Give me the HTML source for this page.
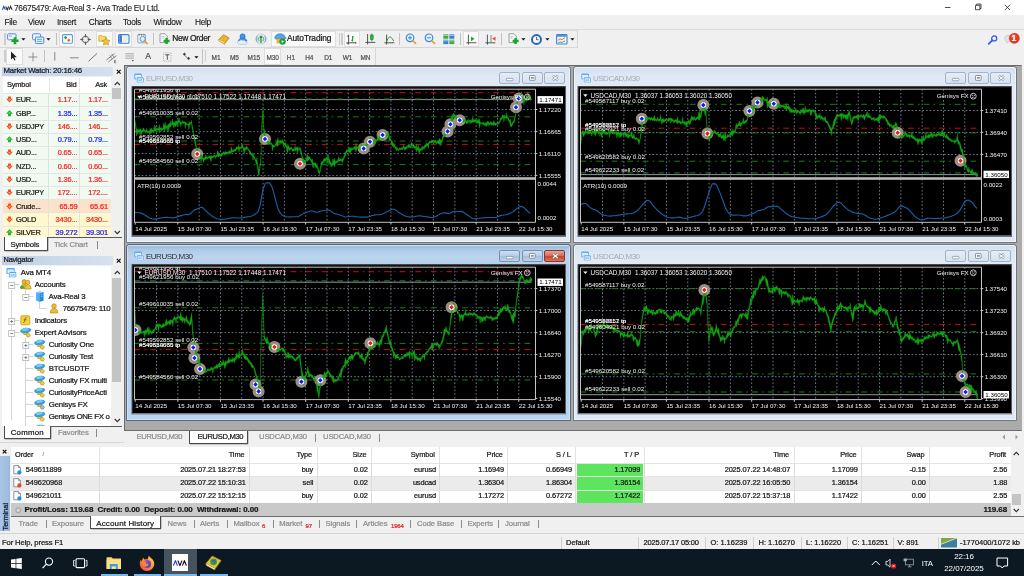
<!DOCTYPE html>
<html lang="en"><head><meta charset="utf-8"><title>76675479: Ava-Real 3 - Ava Trade EU Ltd.</title>
<style>*{box-sizing:border-box;margin:0;padding:0}
html,body{width:1024px;height:576px;overflow:hidden;background:#f0f0f0}
body{position:relative;will-change:transform;font-family:"Liberation Sans","DejaVu Sans",sans-serif;font-size:7.4px;color:#161616;line-height:1}
.a{position:absolute}
.t{position:absolute;white-space:nowrap;line-height:9px;height:9px;letter-spacing:-.15px;-webkit-text-stroke:.22px currentColor}
.g{color:#8c8c8c}
svg{position:absolute;overflow:visible}
#title{left:0;top:0;width:1024px;height:15px;background:#fff}
#menu{left:0;top:15px;width:1024px;height:14px;background:#f0f0f0}
#menu .t{font-size:8.4px;letter-spacing:-.32px;-webkit-text-stroke:.1px}
#tb1{left:0;top:30px;width:1024px;height:18px;background:#f0f0f0}
#tb2{left:0;top:47.5px;width:1024px;height:18px;background:#f0f0f0}
#mw{left:0;top:65px;width:124px;height:190px;background:#f0f0f0}
#nav{left:0;top:254px;width:125.5px;height:189px;background:#f0f0f0;border-right:1px solid #b9b9b9;border-bottom:1px solid #d5d5d5}
.ptitle{background:linear-gradient(90deg,#bfd0e6,#d5e1f0)}
.tabsel{background:#fff;border:1px solid #4a4a4a;border-top:0;border-radius:0 0 1px 1px;box-shadow:.5px .5px 0 #9a9a9a}
#mdi{left:124px;top:65px;width:898px;height:365.5px;background:#ababab;border:1px solid #6b6b6b;border-right-color:#ababab}
.win{position:absolute;border:1px solid #70777f;border-radius:3px 3px 0 0;background:linear-gradient(#d2dfee 0,#dde8f4 8px,#e2ebf6 21px,#dfe9f5 100%);box-shadow:inset 0 0 0 1px #eef4fb}
.win.act{background:linear-gradient(#98b6d6 0,#aecbe8 5px,#bdd5ee 12px,#b3cdea 21px,#b9d4f0 100%);border-color:#56677a;box-shadow:inset 0 0 0 1px #cfe2f5}
.win .cap{position:absolute;left:19px;top:6.9px;font-size:8px;letter-spacing:-.5px;color:#a6aab0;line-height:10px;white-space:nowrap}
.win.act .cap{color:#2e2e2e}
.wb{position:absolute;top:4.7px;width:21px;height:12px;border:1px solid #a3b3c8;border-radius:2px;background:linear-gradient(#e4edf7,#d6e2f0)}
.act .wb{border-color:#7b90aa;background:linear-gradient(#cfdff0 0,#b6cee8 48%,#a2bfde 52%,#bcd3ea 100%)}
.act .wb.cl{border-color:#87392c;background:linear-gradient(#e7a597 0,#d46d59 48%,#c4432b 52%,#d8735b 100%)}
#ctabs{left:124px;top:431px;width:900px;height:16px;background:#f0f0f0}
#term{left:0;top:446px;width:1024px;height:87px;background:#f0f0f0}
#status{left:0;top:533px;width:1024px;height:16px;background:#f0f0f0;border-top:1px solid #d4d4d4}
#task{left:0;top:549px;width:1024px;height:27px;background:#0c1922}
#task .t{-webkit-text-stroke:0}
</style></head>
<body>
<div class="a" id="title">
<svg style="left:2px;top:4.5px" width="11" height="6" viewBox="0 0 11 6" ><path d="M.3 4.800L1.800 1.400L3.300 4.800" fill="none" stroke="#3a48d8" stroke-width="1.150"/><path d="M3.700 1.400L5.200 4.800L6.700 1.400M7.100 4.800L8.600 1.400L10.100 4.800" fill="none" stroke="#33333c" stroke-width="1.150"/></svg>
<div class="t " style="left:14px;top:4.1px;font-size:8.4px;letter-spacing:-.31px;-webkit-text-stroke:.1px;color:#1c1c1c">76675479: Ava-Real 3 - Ava Trade EU Ltd.</div>
<svg style="left:930px;top:0" width="94" height="15"><path d="M15 7.5h5.5" stroke="#222" stroke-width=".8"/><path d="M45.5 5.3h4.4v4.4h-4.4z M46.6 5.2v-1.1h4.4v4.4h-1.1" fill="none" stroke="#222" stroke-width=".8"/><path d="M74.8 4.8l5.2 5.2m0 -5.2l-5.2 5.2" stroke="#222" stroke-width=".8"/></svg>
</div>
<div class="a" id="menu">
<div class="t " style="left:4.5px;top:3.1px;">File</div>
<div class="t " style="left:28px;top:3.1px;">View</div>
<div class="t " style="left:57px;top:3.1px;">Insert</div>
<div class="t " style="left:88.7px;top:3.1px;">Charts</div>
<div class="t " style="left:123px;top:3.1px;">Tools</div>
<div class="t " style="left:153.5px;top:3.1px;">Window</div>
<div class="t " style="left:195px;top:3.1px;">Help</div>
</div>
<div class="a" style="left:0;top:28.5px;width:1024px;height:1px;background:#dcdcdc"></div>
<div class="a" id="tb1"><div class="a" style="left:4px;top:3px;width:1.500px;height:12px;background:#cdcdcd"></div><svg style="left:7px;top:3px" width="13" height="12" viewBox="0 0 13 12" ><rect x=".6" y=".8" width="8.400" height="6" rx="1" fill="#eef5fd" stroke="#4d8fd6" stroke-width="1"/><path d="M2 3h3" stroke="#4d8fd6" stroke-width=".8"/><path d="M8 4.200v7M4.500 7.700h7" stroke="#16a820" stroke-width="2.600"/></svg><svg style="left:21.3px;top:8px" width="5" height="3" viewBox="0 0 5 3"><path d="M.3 .3h4.200l-2.100 2.300z" fill="#111"/></svg><svg style="left:32px;top:3px" width="13" height="12" viewBox="0 0 13 12" ><rect x=".6" y=".8" width="8" height="6" rx="1" fill="#eef5fd" stroke="#4d8fd6" stroke-width="1"/><rect x="3.400" y="4" width="8.400" height="6.600" rx="1" fill="#dcebfb" stroke="#4d8fd6" stroke-width="1"/><path d="M5 6.400h5M5 8.400h5" stroke="#4d8fd6" stroke-width=".7"/></svg><svg style="left:46.3px;top:8px" width="5" height="3" viewBox="0 0 5 3"><path d="M.3 .3h4.200l-2.100 2.300z" fill="#111"/></svg><div class="a" style="left:55.5px;top:3px;width:1px;height:12px;background:#c2c2c2"></div><div class="a" style="left:58.8px;top:1px;width:16.5px;height:16px;background:#fafafa;border:1px solid #dedede"></div><svg style="left:61.5px;top:4px" width="11" height="10" viewBox="0 0 11 10" ><rect x=".6" y=".6" width="9.800" height="8.600" rx="1" fill="#fff" stroke="#5b9be0" stroke-width="1.100"/><path d="M3.600 1.800l1.800 1.800l-1.800 1.800l-1.800-1.800z" fill="#22a83a"/><path d="M6.800 4.400l1.800 1.800l-1.800 1.800l-1.800-1.800z" fill="#f0622a"/></svg><svg style="left:80px;top:3.5px" width="11" height="11" viewBox="0 0 11 11" ><circle cx="5.500" cy="5.500" r="3.200" fill="none" stroke="#555" stroke-width=".9"/><path d="M5.500 .4v3M5.500 7.600v3M.4 5.500h3M7.600 5.500h3" stroke="#555" stroke-width=".9"/><path d="M5.500 .2l1.200 1.400h-2.400zM5.500 10.800l1.200-1.400h-2.400zM.2 5.500l1.400-1.200v2.400zM10.800 5.500l-1.400-1.200v2.400z" fill="#555"/></svg><div class="a" style="left:96.2px;top:1px;width:16.8px;height:16px;background:#fafafa;border:1px solid #dedede"></div><svg style="left:98px;top:3.5px" width="13" height="12" viewBox="0 0 13 12" ><path d="M.8 1.600h3l.8 1h3.400v4.600h-7.200z" fill="#f7dc6a" stroke="#c9a227" stroke-width=".7"/><path d="M8 3.600l1.300 2.500l2.700 .4l-2 1.900l.5 2.700l-2.500-1.300l-2.500 1.300l.5-2.700l-2-1.900l2.700-.4z" fill="#f2c230" stroke="#b8860b" stroke-width=".6"/></svg><div class="a" style="left:115.3px;top:1px;width:16.5px;height:16px;background:#fafafa;border:1px solid #dedede"></div><svg style="left:117.5px;top:4px" width="12" height="10" viewBox="0 0 12 10" ><rect x=".6" y=".6" width="10.400" height="8.600" rx="1" fill="#fff" stroke="#3b7fd0" stroke-width="1.100"/><rect x="1.200" y="1.200" width="2.800" height="7.400" fill="#3b7fd0"/><path d="M5 3h5M5 5h5M5 7h4" stroke="#b9cde6" stroke-width=".7"/></svg><svg style="left:136.5px;top:3px" width="12" height="12" viewBox="0 0 12 12" ><rect x=".8" y="1.400" width="7.600" height="8.400" rx=".8" fill="#f2f6fa" stroke="#7d8fa3" stroke-width=".8"/><path d="M2.200 1v1.600M4.600 1v1.600M7 1v1.600" stroke="#557" stroke-width=".8"/><circle cx="5.600" cy="6" r="2.600" fill="#dfeefc" stroke="#5b8fc8" stroke-width=".9"/><path d="M7.600 8l3 3" stroke="#d9a028" stroke-width="1.600"/></svg><div class="a" style="left:152.8px;top:3px;width:1px;height:12px;background:#c2c2c2"></div><svg style="left:159px;top:3px" width="12" height="12" viewBox="0 0 12 12" ><path d="M1 .8h5l2.200 2.200v6.600h-7.200z" fill="#fbfbfb" stroke="#7d8792" stroke-width=".8"/><path d="M2.400 3.600h3M2.400 5.200h2" stroke="#9aa" stroke-width=".7"/><path d="M7.600 5v6M4.600 8h6" stroke="#17a81f" stroke-width="2.400"/></svg><div class="t" style="left:172.2px;top:4.200px;font-size:8.400px;letter-spacing:-.3px">New Order</div><svg style="left:217.5px;top:4px" width="12" height="10" viewBox="0 0 12 10" ><path d="M.6 5.600l5-4.800l5.600 3.200l-4.400 5.400z" fill="#e9b530" stroke="#a87c0c" stroke-width=".7"/><path d="M.6 5.600l.4 1.600l5.800 3.200v-1.400" fill="#fff3c4" stroke="#a87c0c" stroke-width=".6"/></svg><svg style="left:236.5px;top:3px" width="12" height="12" viewBox="0 0 12 12" ><circle cx="5.600" cy="3.400" r="2.600" fill="#3f97e8" stroke="#1f6cbc" stroke-width=".6"/><path d="M1.200 8.200c0-2 2-3 4.400-3s4.400 1 4.400 3z" fill="#3f97e8" stroke="#1f6cbc" stroke-width=".6"/><path d="M.6 9.600c0-1.200 1-2 2.200-1.800c.6-1 2.200-1.200 3-.2c1-.6 2.400 0 2.400 1c1.200 0 1.800 .6 1.800 1.400s-.6 1.400-1.600 1.400h-6c-1 0-1.800-.8-1.800-1.800z" fill="#e8eef6" stroke="#9fb0c6" stroke-width=".5"/></svg><svg style="left:254.5px;top:3px" width="12" height="12" viewBox="0 0 12 12" ><circle cx="6" cy="6" r="5.200" fill="#dfe8ee" stroke="#a9b8c4" stroke-width=".5"/><path d="M2.600 2.600a4.800 4.800 0 0 0 0 6.800M9.400 2.600a4.800 4.800 0 0 1 0 6.800" fill="none" stroke="#6fa8d8" stroke-width="1"/><path d="M4.200 3.800a3 3 0 0 0 0 4.400M7.800 3.800a3 3 0 0 1 0 4.400" fill="none" stroke="#58b058" stroke-width="1"/><rect x="5.400" y="4" width="1.200" height="6" fill="#2a8a3a"/><circle cx="6" cy="4" r="1.200" fill="#2a8a3a"/></svg><div class="a" style="left:271.3px;top:1px;width:65px;height:16px;background:#fafafa;border:1px solid #dedede"></div><svg style="left:273.5px;top:3px" width="13" height="12" viewBox="0 0 13 12" ><path d="M1 4.400c0-2 2-3.600 5-3.600s5 1.400 5 3.400l1.400 .8c-1.400 1.200-3.800 1.600-6.400 1.600s-4.600-.4-5.600-1.600z" fill="#5ba4e6" stroke="#2f74bd" stroke-width=".6"/><rect x="2.600" y="6" width="6" height="4.400" fill="#e5b628"/><circle cx="8.600" cy="8.600" r="2.900" fill="#1ea83a" stroke="#0f7a22" stroke-width=".5"/><path d="M7.700 7.200v2.800l2.400-1.400z" fill="#fff"/></svg><div class="t" style="left:287px;top:4.200px;font-size:8.400px;letter-spacing:-.08px">AutoTrading</div><div class="a" style="left:338.6px;top:3px;width:1.500px;height:12px;background:#cdcdcd"></div><div class="a" style="left:341px;top:3px;width:1.500px;height:12px;background:#cdcdcd"></div><div class="a" style="left:343.6px;top:1px;width:16px;height:16px;background:#fafafa;border:1px solid #dedede"></div><svg style="left:346px;top:3.5px" width="11" height="11" viewBox="0 0 11 11" ><path d="M2.600 .6v10M.4 8.800h10" stroke="#444" stroke-width=".9"/><path d="M.8 2.200h1.800M.800 9.600h1M9.600 8v1.600" stroke="#444" stroke-width=".8"/><path d="M6.600 2v5.600M5.400 6.400h1.200M6.600 3h1.200" stroke="#1a9a2a" stroke-width="1.100"/></svg><svg style="left:364.5px;top:3px" width="11" height="12" viewBox="0 0 11 12" ><path d="M2.600 1v10.400M.4 9.400h10" stroke="#444" stroke-width=".9"/><path d="M6.800 .4v8" stroke="#1a7a2a" stroke-width=".8"/><rect x="5.400" y="2" width="2.800" height="4.600" fill="#27b53a" stroke="#157a22" stroke-width=".5"/></svg><svg style="left:383.5px;top:3.5px" width="11" height="11" viewBox="0 0 11 11" ><path d="M2.600 .6v10M.4 8.800h10" stroke="#444" stroke-width=".9"/><path d="M2.600 7.600c1.400-4 2.600-5 3.800-4.600s2 2.200 3.400 4" fill="none" stroke="#1a9a2a" stroke-width="1"/></svg><div class="a" style="left:399.3px;top:3px;width:1px;height:12px;background:#c2c2c2"></div><svg style="left:404.5px;top:3px" width="12" height="12" viewBox="0 0 12 12" ><circle cx="5" cy="4.800" r="3.800" fill="#e4f0fc" stroke="#3f86d6" stroke-width="1.200"/><path d="M3 4.800h4M5 2.800v4" stroke="#3f86d6" stroke-width="1"/><path d="M7.800 7.600l3.200 3.200" stroke="#e0a830" stroke-width="1.700"/></svg><svg style="left:423.5px;top:3px" width="12" height="12" viewBox="0 0 12 12" ><circle cx="5" cy="4.800" r="3.800" fill="#e4f0fc" stroke="#3f86d6" stroke-width="1.200"/><path d="M3 4.800h4" stroke="#3f86d6" stroke-width="1"/><path d="M7.800 7.600l3.200 3.200" stroke="#e0a830" stroke-width="1.700"/></svg><svg style="left:442.5px;top:3.5px" width="12" height="11" viewBox="0 0 12 11" ><rect x=".3" y=".3" width="5" height="4.400" fill="#3cae3c"/><rect x="6.300" y=".3" width="5" height="4.400" fill="#3a7fd8"/><rect x=".3" y="5.700" width="5" height="4.400" fill="#3a7fd8"/><rect x="6.300" y="5.700" width="5" height="4.400" fill="#3cae3c"/><path d="M.3 1.400h5M6.300 1.400h5M.3 6.800h5M6.300 6.800h5" stroke="#fff" stroke-width=".7" opacity=".8"/></svg><div class="a" style="left:459.6px;top:3px;width:1px;height:12px;background:#c2c2c2"></div><div class="a" style="left:463px;top:1px;width:16px;height:16px;background:#fafafa;border:1px solid #dedede"></div><svg style="left:466px;top:3.5px" width="11" height="11" viewBox="0 0 11 11" ><path d="M2.400 .6v10M.4 8.800h10" stroke="#444" stroke-width=".9"/><path d="M5 2.400v4.800l3.600-2.400z" fill="#1fa83a"/></svg><svg style="left:484.5px;top:3.5px" width="12" height="11" viewBox="0 0 12 11" ><path d="M2.400 .6v10M.4 8.800h10" stroke="#444" stroke-width=".9"/><path d="M6 1v7" stroke="#666" stroke-width=".8"/><path d="M10.500 2.600v4.200l-3.400-2.100z" fill="#e0522a"/></svg><div class="a" style="left:501px;top:3px;width:1px;height:12px;background:#c2c2c2"></div><svg style="left:507.5px;top:3px" width="12" height="12" viewBox="0 0 12 12" ><path d="M1 .8h5l2.200 2.200v6.600h-7.200z" fill="#fbfbfb" stroke="#7d8792" stroke-width=".8"/><path d="M2.400 3.600h3M2.400 5.200h2" stroke="#9aa" stroke-width=".7"/><path d="M7.600 5v6M4.600 8h6" stroke="#17a81f" stroke-width="2.400"/></svg><svg style="left:520.5px;top:8px" width="5" height="3" viewBox="0 0 5 3"><path d="M.3 .3h4.200l-2.100 2.300z" fill="#111"/></svg><svg style="left:531px;top:3.5px" width="12" height="11" viewBox="0 0 12 11" ><circle cx="5.500" cy="5.500" r="4.500" fill="#f4f8fc" stroke="#1f66c2" stroke-width="1.900"/><path d="M5.500 3v2.700h2" stroke="#345" stroke-width=".8" fill="none"/></svg><svg style="left:545.4px;top:8px" width="5" height="3" viewBox="0 0 5 3"><path d="M.3 .3h4.200l-2.100 2.300z" fill="#111"/></svg><svg style="left:555.5px;top:3.5px" width="12" height="11" viewBox="0 0 12 11" ><rect x=".6" y=".6" width="10.400" height="9.400" rx=".8" fill="#eef5fd" stroke="#3f86d6" stroke-width="1.100"/><rect x="1.100" y="1.100" width="9.400" height="1.600" fill="#3f86d6"/><path d="M2 6.400l2-1.600l2 .8l3-2" stroke="#d9502a" stroke-width=".8" fill="none"/><path d="M2 8.800l2-.8l2 .4l3-1.400" stroke="#2a9a3a" stroke-width=".8" fill="none"/></svg><svg style="left:570px;top:8px" width="5" height="3" viewBox="0 0 5 3"><path d="M.3 .3h4.200l-2.100 2.300z" fill="#111"/></svg><div class="a" style="left:0;top:0;width:578px;height:17.500px;border-right:1px solid #d6d6d6;border-bottom:1px solid #d6d6d6;border-top:1px solid #dadada"></div><svg style="left:987px;top:4.5px" width="12" height="10" viewBox="0 0 12 10" ><circle cx="7.200" cy="3.400" r="2.500" fill="#eaf2ff" stroke="#2a62d8" stroke-width="1.300"/><path d="M5.300 5.400l-3.600 3.400" stroke="#2a62d8" stroke-width="1.700" stroke-linecap="round"/></svg><svg style="left:1003px;top:2px" width="18" height="14" viewBox="0 0 18 14" ><path d="M1.600 6.400c0-2 1.600-3.200 3.800-3.200s3.800 1.200 3.800 3.200s-1.600 3.200-3.800 3.200l-1.600 1.600v-1.900c-1.300-.5-2.200-1.500-2.200-2.900z" fill="#e2e2e2" stroke="#bdbdbd" stroke-width=".6"/><circle cx="11.300" cy="6.300" r="5.400" fill="#e23a22"/><circle cx="10.600" cy="4.800" r="3" fill="#ef6a50" opacity=".5"/></svg><div class="t" style="left:1011.4px;top:3.600px;font-size:8.500px;color:#fff;font-weight:bold">1</div></div>
<div class="a" id="tb2"><div class="a" style="left:4px;top:2.5px;width:1.500px;height:12px;background:#cdcdcd"></div><div class="a" style="left:5.6px;top:0.5px;width:17px;height:16.5px;background:#fafafa;border:1px solid #dedede"></div><svg style="left:10px;top:3.5px" width="7" height="10" viewBox="0 0 7 10" ><path d="M1 .6v8l2-1.800l1.300 2.800l1.200-.6l-1.300-2.700h2.600z" fill="#222"/></svg><svg style="left:27.5px;top:4.5px" width="10" height="10" viewBox="0 0 10 10" ><path d="M5 .4v9M.4 5h9" stroke="#777" stroke-width=".8"/></svg><div class="a" style="left:43.5px;top:2.5px;width:1px;height:12px;background:#c2c2c2"></div><svg style="left:54px;top:4.5px" width="2" height="9" viewBox="0 0 2 9" ><path d="M.8 0v8.600" stroke="#777" stroke-width=".9"/></svg><svg style="left:69.5px;top:9px" width="9" height="2" viewBox="0 0 9 2" ><path d="M0 .8h8.600" stroke="#777" stroke-width=".9"/></svg><svg style="left:88px;top:5px" width="10" height="9" viewBox="0 0 10 9" ><path d="M.4 8.400l8.600-8" stroke="#666" stroke-width=".9"/></svg><svg style="left:105.5px;top:4px" width="11" height="11" viewBox="0 0 11 11" ><path d="M.4 8l8-6.400M2.400 10l8-6.400" stroke="#666" stroke-width=".8"/><path d="M3.600 3.200l2.800 4M5.600 1.800l2.800 4" stroke="#666" stroke-width=".6"/><path d="M8.400 8.400h1.800M8.400 8.400v2.400M8.400 9.600h1.400M8.400 10.800h1.800" stroke="#333" stroke-width=".5" fill="none"/></svg><svg style="left:125px;top:5px" width="10" height="10" viewBox="0 0 10 10" ><path d="M.4 .8h8.600M.4 3h8.600M.4 5.200h8.600" stroke="#888" stroke-width=".7"/><path d="M6.600 7h2.400l-1.200 1.600z" fill="#555"/></svg><div class="t" style="left:145.2px;top:4.600px;font-size:8.600px;color:#4a4a4a">A</div><svg style="left:163px;top:4px" width="9" height="10" viewBox="0 0 9 10" ><rect x=".5" y=".8" width="7.600" height="8.400" fill="none" stroke="#999" stroke-width=".7" stroke-dasharray="1 1"/><path d="M2.200 2.800h4.200M4.300 2.800v5" stroke="#555" stroke-width="1"/></svg><svg style="left:181.5px;top:4.5px" width="10" height="9" viewBox="0 0 10 9" ><path d="M2.400 .6l1.600 1.600l-1.600 1.600l-1.600-1.600zM6.600 4.800l1.600 1.600l-1.600 1.600l-1.600-1.600z" fill="#444"/><path d="M2.600 3.200l3.200 3.200" stroke="#444" stroke-width=".7"/></svg><svg style="left:193.5px;top:8px" width="5" height="3" viewBox="0 0 5 3"><path d="M.3 .3h4.200l-2.100 2.300z" fill="#111"/></svg><div class="a" style="left:201.7px;top:1px;width:1px;height:15px;background:#c2c2c2"></div><div class="a" style="left:204.8px;top:2.5px;width:1.500px;height:12px;background:#cdcdcd"></div><div class="t" style="left:211.6px;top:5px;font-size:6.500px;color:#555;letter-spacing:-.1px">M1</div><div class="t" style="left:230px;top:5px;font-size:6.500px;color:#555;letter-spacing:-.1px">M5</div><div class="t" style="left:247.6px;top:5px;font-size:6.500px;color:#555;letter-spacing:-.1px">M15</div><div class="a" style="left:264px;top:0.5px;width:16.5px;height:16.5px;background:#fafafa;border:1px solid #dedede"></div><div class="t" style="left:266.4px;top:5px;font-size:6.500px;color:#555;letter-spacing:-.1px">M30</div><div class="t" style="left:286.8px;top:5px;font-size:6.500px;color:#555;letter-spacing:-.1px">H1</div><div class="t" style="left:305.2px;top:5px;font-size:6.500px;color:#555;letter-spacing:-.1px">H4</div><div class="t" style="left:324.2px;top:5px;font-size:6.500px;color:#555;letter-spacing:-.1px">D1</div><div class="t" style="left:342.8px;top:5px;font-size:6.500px;color:#555;letter-spacing:-.1px">W1</div><div class="t" style="left:360.4px;top:5px;font-size:6.500px;color:#555;letter-spacing:-.1px">MN</div><div class="a" style="left:0;top:0;width:376px;height:17.500px;border-right:1px solid #d6d6d6"></div></div>
<div class="a" id="mw">
<div class="a ptitle" style="left:2px;top:2px;width:111px;height:9px"></div>
<div class="t " style="left:3.5px;top:1.2px;font-size:7.8px;letter-spacing:-.18px">Market Watch: 20:16:46</div>
<svg style="left:116px;top:4px" width="6" height="6"><path d="M.8 .8l3.8 3.8m0 -3.8l-3.8 3.8" stroke="#111" stroke-width="1.2"/></svg>
<div class="a" style="left:3px;top:12px;width:108px;height:161px;background:#fff"></div>
<div class="t " style="left:7px;top:14.5px;">Symbol</div>
<div class="t " style="left:49px;top:14.5px;width:27.5px;text-align:right;">Bid</div>
<div class="t " style="left:80px;top:14.5px;width:27px;text-align:right;">Ask</div>
<div class="a" style="left:48.5px;top:13px;width:1px;height:14px;background:#e6e6e6"></div><div class="a" style="left:79px;top:13px;width:1px;height:14px;background:#e6e6e6"></div>
<div class="a" style="left:3px;top:28.00px;width:108px;height:13.3px;background:#f1faf1;border-top:1px solid #e1e6e1"></div>
<div class="a" style="left:48px;top:28.00px;width:1px;height:13.3px;background:#dfe3df"></div><div class="a" style="left:78.500px;top:28.00px;width:1px;height:13.3px;background:#dfe3df"></div>
<svg style="left:5.6px;top:31.40px" width="7" height="7" viewBox="0 0 7 7"><path d="M3.5 6.4L6.9 2.8H4.9V.4H2.100V2.800H.1z" fill="#e8501c"/><path d="M3.5 5L5 3H2z" fill="#ff9a70"/></svg>
<div class="t " style="left:16px;top:30.4px;letter-spacing:-.2px">EUR...</div>
<div class="t " style="left:49px;top:30.4px;width:28.5px;text-align:right;color:#f02020;letter-spacing:-.1px">1.17...</div>
<div class="t " style="left:80px;top:30.4px;width:28px;text-align:right;color:#f02020;letter-spacing:-.1px">1.17...</div>
<div class="a" style="left:3px;top:41.27px;width:108px;height:13.3px;background:#f1faf1;border-top:1px solid #e1e6e1"></div>
<div class="a" style="left:48px;top:41.27px;width:1px;height:13.3px;background:#dfe3df"></div><div class="a" style="left:78.500px;top:41.27px;width:1px;height:13.3px;background:#dfe3df"></div>
<svg style="left:5.6px;top:44.67px" width="7" height="7" viewBox="0 0 7 7"><path d="M3.500 .2L6.900 3.800H4.900V6.200H2.100V3.800H.1z" fill="#1fa82a"/><path d="M3.500 1.600L5 3.600H2z" fill="#6fdc74"/></svg>
<div class="t " style="left:16px;top:43.669999999999995px;letter-spacing:-.2px">GBP...</div>
<div class="t " style="left:49px;top:43.669999999999995px;width:28.5px;text-align:right;color:#1a1af0;letter-spacing:-.1px">1.35...</div>
<div class="t " style="left:80px;top:43.669999999999995px;width:28px;text-align:right;color:#1a1af0;letter-spacing:-.1px">1.35...</div>
<div class="a" style="left:3px;top:54.54px;width:108px;height:13.3px;background:#f1faf1;border-top:1px solid #e1e6e1"></div>
<div class="a" style="left:48px;top:54.54px;width:1px;height:13.3px;background:#dfe3df"></div><div class="a" style="left:78.500px;top:54.54px;width:1px;height:13.3px;background:#dfe3df"></div>
<svg style="left:5.6px;top:57.94px" width="7" height="7" viewBox="0 0 7 7"><path d="M3.5 6.4L6.9 2.8H4.9V.4H2.100V2.800H.1z" fill="#e8501c"/><path d="M3.5 5L5 3H2z" fill="#ff9a70"/></svg>
<div class="t " style="left:16px;top:56.94px;letter-spacing:-.2px">USDJPY</div>
<div class="t " style="left:49px;top:56.94px;width:28.5px;text-align:right;color:#f02020;letter-spacing:-.1px">146....</div>
<div class="t " style="left:80px;top:56.94px;width:28px;text-align:right;color:#f02020;letter-spacing:-.1px">146....</div>
<div class="a" style="left:3px;top:67.81px;width:108px;height:13.3px;background:#f1faf1;border-top:1px solid #e1e6e1"></div>
<div class="a" style="left:48px;top:67.81px;width:1px;height:13.3px;background:#dfe3df"></div><div class="a" style="left:78.500px;top:67.81px;width:1px;height:13.3px;background:#dfe3df"></div>
<svg style="left:5.6px;top:71.21px" width="7" height="7" viewBox="0 0 7 7"><path d="M3.500 .2L6.900 3.800H4.900V6.200H2.100V3.800H.1z" fill="#1fa82a"/><path d="M3.500 1.600L5 3.600H2z" fill="#6fdc74"/></svg>
<div class="t " style="left:16px;top:70.21000000000001px;letter-spacing:-.2px">USD...</div>
<div class="t " style="left:49px;top:70.21000000000001px;width:28.5px;text-align:right;color:#1a1af0;letter-spacing:-.1px">0.79...</div>
<div class="t " style="left:80px;top:70.21000000000001px;width:28px;text-align:right;color:#1a1af0;letter-spacing:-.1px">0.79...</div>
<div class="a" style="left:3px;top:81.08px;width:108px;height:13.3px;background:#f1faf1;border-top:1px solid #e1e6e1"></div>
<div class="a" style="left:48px;top:81.08px;width:1px;height:13.3px;background:#dfe3df"></div><div class="a" style="left:78.500px;top:81.08px;width:1px;height:13.3px;background:#dfe3df"></div>
<svg style="left:5.6px;top:84.48px" width="7" height="7" viewBox="0 0 7 7"><path d="M3.5 6.4L6.9 2.8H4.9V.4H2.100V2.800H.1z" fill="#e8501c"/><path d="M3.5 5L5 3H2z" fill="#ff9a70"/></svg>
<div class="t " style="left:16px;top:83.48px;letter-spacing:-.2px">AUD...</div>
<div class="t " style="left:49px;top:83.48px;width:28.5px;text-align:right;color:#f02020;letter-spacing:-.1px">0.65...</div>
<div class="t " style="left:80px;top:83.48px;width:28px;text-align:right;color:#f02020;letter-spacing:-.1px">0.65...</div>
<div class="a" style="left:3px;top:94.35px;width:108px;height:13.3px;background:#f1faf1;border-top:1px solid #e1e6e1"></div>
<div class="a" style="left:48px;top:94.35px;width:1px;height:13.3px;background:#dfe3df"></div><div class="a" style="left:78.500px;top:94.35px;width:1px;height:13.3px;background:#dfe3df"></div>
<svg style="left:5.6px;top:97.75px" width="7" height="7" viewBox="0 0 7 7"><path d="M3.5 6.4L6.9 2.8H4.9V.4H2.100V2.800H.1z" fill="#e8501c"/><path d="M3.5 5L5 3H2z" fill="#ff9a70"/></svg>
<div class="t " style="left:16px;top:96.75px;letter-spacing:-.2px">NZD...</div>
<div class="t " style="left:49px;top:96.75px;width:28.5px;text-align:right;color:#f02020;letter-spacing:-.1px">0.60...</div>
<div class="t " style="left:80px;top:96.75px;width:28px;text-align:right;color:#f02020;letter-spacing:-.1px">0.60...</div>
<div class="a" style="left:3px;top:107.62px;width:108px;height:13.3px;background:#f1faf1;border-top:1px solid #e1e6e1"></div>
<div class="a" style="left:48px;top:107.62px;width:1px;height:13.3px;background:#dfe3df"></div><div class="a" style="left:78.500px;top:107.62px;width:1px;height:13.3px;background:#dfe3df"></div>
<svg style="left:5.6px;top:111.02px" width="7" height="7" viewBox="0 0 7 7"><path d="M3.5 6.4L6.9 2.8H4.9V.4H2.100V2.800H.1z" fill="#e8501c"/><path d="M3.5 5L5 3H2z" fill="#ff9a70"/></svg>
<div class="t " style="left:16px;top:110.02000000000001px;letter-spacing:-.2px">USD...</div>
<div class="t " style="left:49px;top:110.02000000000001px;width:28.5px;text-align:right;color:#f02020;letter-spacing:-.1px">1.36...</div>
<div class="t " style="left:80px;top:110.02000000000001px;width:28px;text-align:right;color:#f02020;letter-spacing:-.1px">1.36...</div>
<div class="a" style="left:3px;top:120.89px;width:108px;height:13.3px;background:#f1faf1;border-top:1px solid #e1e6e1"></div>
<div class="a" style="left:48px;top:120.89px;width:1px;height:13.3px;background:#dfe3df"></div><div class="a" style="left:78.500px;top:120.89px;width:1px;height:13.3px;background:#dfe3df"></div>
<svg style="left:5.6px;top:124.29px" width="7" height="7" viewBox="0 0 7 7"><path d="M3.5 6.4L6.9 2.8H4.9V.4H2.100V2.800H.1z" fill="#e8501c"/><path d="M3.5 5L5 3H2z" fill="#ff9a70"/></svg>
<div class="t " style="left:16px;top:123.29px;letter-spacing:-.2px">EURJPY</div>
<div class="t " style="left:49px;top:123.29px;width:28.5px;text-align:right;color:#f02020;letter-spacing:-.1px">172....</div>
<div class="t " style="left:80px;top:123.29px;width:28px;text-align:right;color:#f02020;letter-spacing:-.1px">172....</div>
<div class="a" style="left:3px;top:134.16px;width:108px;height:13.3px;background:#fde2cb;border-top:1px solid #e1e6e1"></div>
<div class="a" style="left:48px;top:134.16px;width:1px;height:13.3px;background:#dfe3df"></div><div class="a" style="left:78.500px;top:134.16px;width:1px;height:13.3px;background:#dfe3df"></div>
<svg style="left:5.6px;top:137.56px" width="7" height="7" viewBox="0 0 7 7"><path d="M3.5 6.4L6.9 2.8H4.9V.4H2.100V2.800H.1z" fill="#e8501c"/><path d="M3.5 5L5 3H2z" fill="#ff9a70"/></svg>
<div class="t " style="left:16px;top:136.56px;letter-spacing:-.2px">Crude...</div>
<div class="t " style="left:49px;top:136.56px;width:28.5px;text-align:right;color:#f02020;letter-spacing:-.1px">65.59</div>
<div class="t " style="left:80px;top:136.56px;width:28px;text-align:right;color:#f02020;letter-spacing:-.1px">65.61</div>
<div class="a" style="left:3px;top:147.43px;width:108px;height:13.3px;background:#fff8cf;border-top:1px solid #e1e6e1"></div>
<div class="a" style="left:48px;top:147.43px;width:1px;height:13.3px;background:#dfe3df"></div><div class="a" style="left:78.500px;top:147.43px;width:1px;height:13.3px;background:#dfe3df"></div>
<svg style="left:5.6px;top:150.83px" width="7" height="7" viewBox="0 0 7 7"><path d="M3.5 6.4L6.9 2.8H4.9V.4H2.100V2.800H.1z" fill="#e8501c"/><path d="M3.5 5L5 3H2z" fill="#ff9a70"/></svg>
<div class="t " style="left:16px;top:149.83px;letter-spacing:-.2px">GOLD</div>
<div class="t " style="left:49px;top:149.83px;width:28.5px;text-align:right;color:#f02020;letter-spacing:-.1px">3430...</div>
<div class="t " style="left:80px;top:149.83px;width:28px;text-align:right;color:#f02020;letter-spacing:-.1px">3430...</div>
<div class="a" style="left:3px;top:160.70px;width:108px;height:13.3px;background:#fff8cf;border-top:1px solid #e1e6e1"></div>
<div class="a" style="left:48px;top:160.70px;width:1px;height:13.3px;background:#dfe3df"></div><div class="a" style="left:78.500px;top:160.70px;width:1px;height:13.3px;background:#dfe3df"></div>
<svg style="left:5.6px;top:164.10px" width="7" height="7" viewBox="0 0 7 7"><path d="M3.500 .2L6.900 3.800H4.900V6.200H2.100V3.800H.1z" fill="#1fa82a"/><path d="M3.500 1.600L5 3.600H2z" fill="#6fdc74"/></svg>
<div class="t " style="left:16px;top:163.1px;letter-spacing:-.2px">SILVER</div>
<div class="t " style="left:49px;top:163.1px;width:28.5px;text-align:right;color:#1a1af0;letter-spacing:-.1px">39.272</div>
<div class="t " style="left:80px;top:163.1px;width:28px;text-align:right;color:#1a1af0;letter-spacing:-.1px">39.301</div>
<div class="a" style="left:111px;top:12px;width:11px;height:161px;background:#f0f0f0"></div>
<div class="a" style="left:112px;top:23px;width:9px;height:11px;background:#c4c4c4"></div>
<svg style="left:113.5px;top:16px" width="7" height="5" viewBox="0 0 7 5"><path d="M.7 4L3.3 1.3L5.9 4" fill="none" stroke="#333" stroke-width="1.1"/></svg>
<svg style="left:113.5px;top:164.5px" width="7" height="5" viewBox="0 0 7 5"><path d="M.7 1L3.3 3.7L5.9 1" fill="none" stroke="#333" stroke-width="1.1"/></svg>
<div class="a" style="left:0;top:171.8px;width:124px;height:18px;background:#f0f0f0"></div>
<div class="a" style="left:4px;top:171.8px;width:118px;height:1px;background:#5a5a5a"></div>
<div class="a tabsel" style="left:4px;top:172px;width:43.5px;height:13.8px"></div>
<div class="t " style="left:10.5px;top:175.3px;font-size:7.7px;letter-spacing:-.1px">Symbols</div>
<div class="t g" style="left:54px;top:175.3px;font-size:7.7px;letter-spacing:-.1px">Tick Chart</div>
<div class="a" style="left:96.5px;top:176px;width:1px;height:8px;background:#8a8a8a"></div>
</div>
<div class="a" id="nav">
<div class="a ptitle" style="left:2px;top:2px;width:111px;height:9px"></div>
<div class="t " style="left:3.5px;top:1.2px;letter-spacing:-.18px">Navigator</div>
<svg style="left:116px;top:4px" width="6" height="6"><path d="M.8 .8l3.8 3.8m0 -3.8l-3.8 3.8" stroke="#111" stroke-width="1.2"/></svg>
<div class="a" style="left:2px;top:12px;width:109px;height:160px;background:#fff;overflow:hidden">
<svg style="left:0;top:0" width="109" height="160"><g stroke="#c9c9c9" stroke-width=".8" fill="none"><path d="M9.5 24v130M9.5 18.5h8M9.5 54.5h8M9.5 66.5h8"/><path d="M23.5 24v6.5h8M37.500 36v6.500h7"/><path d="M23.5 72v88M23.5 78.5h8M23.5 90.5h8M23.5 102.5h8M23.5 114.5h8M23.5 126.5h8M23.5 138.5h8M23.5 150.5h8M23.5 162.5h8"/></g><g transform="translate(6.2,16)"><rect x=".5" y=".5" width="6" height="6" fill="#fff" stroke="#b4b4b4" stroke-width=".8"/><path d="M2 3.5h3" stroke="#5a6a80" stroke-width=".8"/></g><g transform="translate(20.3,28)"><rect x=".5" y=".5" width="6" height="6" fill="#fff" stroke="#b4b4b4" stroke-width=".8"/><path d="M2 3.5h3" stroke="#5a6a80" stroke-width=".8"/></g><g transform="translate(6.2,52)"><rect x=".5" y=".5" width="6" height="6" fill="#fff" stroke="#b4b4b4" stroke-width=".8"/><path d="M2 3.5h3M3.5 2v3" stroke="#5a6a80" stroke-width=".8"/></g><g transform="translate(6.2,64)"><rect x=".5" y=".5" width="6" height="6" fill="#fff" stroke="#b4b4b4" stroke-width=".8"/><path d="M2 3.5h3" stroke="#5a6a80" stroke-width=".8"/></g><g transform="translate(20.3,76.1)"><rect x=".5" y=".5" width="6" height="6" fill="#fff" stroke="#b4b4b4" stroke-width=".8"/><path d="M2 3.5h3M3.5 2v3" stroke="#5a6a80" stroke-width=".8"/></g><g transform="translate(20.3,88.1)"><rect x=".5" y=".5" width="6" height="6" fill="#fff" stroke="#b4b4b4" stroke-width=".8"/><path d="M2 3.5h3M3.5 2v3" stroke="#5a6a80" stroke-width=".8"/></g></svg>
<svg style="left:4px;top:1.00px" width="12" height="11" viewBox="0 0 12 11"><rect x=".4" y=".9" width="8.400" height="6.200" rx="1.200" fill="#5aa9ea"/><rect x="1.400" y="2.400" width="6.400" height="3.800" fill="#d9edff"/><rect x="2.900" y="4.500" width="7.600" height="6" rx="1.200" fill="#5aa9ea" stroke="#fff" stroke-width=".5"/><rect x="3.900" y="6.100" width="5.600" height="3.500" fill="#eef7ff"/><path d="M4.600 7l.9 1.800l.9-1.800M7 8.800l.8-1.800l.8 1.800" stroke="#4a98e0" stroke-width=".6" fill="none"/></svg>
<div class="t " style="left:18.8px;top:1.5px;font-size:7.9px;letter-spacing:-0.2px">Ava MT4</div>
<svg style="left:18px;top:13.04px" width="12" height="11" viewBox="0 0 12 11"><circle cx="4.2" cy="2.8" r="2.2" fill="#e5b628" stroke="#a87c0c" stroke-width=".6"/><path d="M.8 9.6c0-3 1.4-4.3 3.4-4.3s3.4 1.3 3.4 4.3z" fill="#e5b628" stroke="#a87c0c" stroke-width=".6"/><circle cx="7.8" cy="3.4" r="2.1" fill="#f0c63c" stroke="#a87c0c" stroke-width=".6"/><path d="M4.6 10c0-3 1.3-4.2 3.2-4.2s3.2 1.2 3.2 4.2z" fill="#f0c63c" stroke="#a87c0c" stroke-width=".6"/><circle cx="2" cy="8.2" r="1.8" fill="#2db52d"/></svg>
<div class="t " style="left:32.7px;top:13.54px;font-size:7.9px;letter-spacing:-0.2px">Accounts</div>
<svg style="left:33px;top:25.08px" width="12" height="11" viewBox="0 0 12 11"><path d="M1.400 1.600l3.400-1.200l3.800 .8v8.600l-3.800 1l-3.400-1.400z" fill="#1e86e4"/><path d="M1.400 1.600l3.400 1v8.200l-3.400-1.400z" fill="#52aef5"/><path d="M1.400 1.600l3.400-1.200l3.800 .8l-3.800 1.400z" fill="#9ad0fb"/><path d="M5.800 3.800h1.800M5.800 5.400h1.800" stroke="#bfe2ff" stroke-width=".6"/><rect x="6.600" y="7.600" width="1" height="1" fill="#3ad04a"/></svg>
<div class="t " style="left:46.6px;top:25.58px;font-size:7.9px;letter-spacing:-0.2px">Ava-Real 3</div>
<svg style="left:47px;top:37.12px" width="12" height="11" viewBox="0 0 12 11"><circle cx="5" cy="3" r="2.3" fill="#edc030" stroke="#a87c0c" stroke-width=".6"/><path d="M1.2 10c0-3.2 1.6-4.5 3.8-4.5s3.8 1.3 3.8 4.5z" fill="#edc030" stroke="#a87c0c" stroke-width=".6"/></svg>
<div class="t " style="left:60.8px;top:37.62px;font-size:7.9px;letter-spacing:-0.36px">76675479: 110</div>
<svg style="left:18px;top:49.16px" width="12" height="11" viewBox="0 0 12 11"><rect x=".8" y=".8" width="9" height="9" rx="1.2" fill="#f4d23c" stroke="#c49a10" stroke-width=".8"/><path d="M6.6 2.6c-1.4-.4-1.6.8-1.8 2.4s-.4 2.8-1.6 2.6M3.6 4.8h3" stroke="#7a5c08" stroke-width=".8" fill="none"/></svg>
<div class="t " style="left:32.7px;top:49.66px;font-size:7.9px;letter-spacing:-0.2px">Indicators</div>
<svg style="left:18px;top:61.20px" width="12" height="11" viewBox="0 0 12 11"><ellipse cx="5.700" cy="3.500" rx="5.500" ry="2.700" transform="rotate(-10 5.700 3.500)" fill="#379fdc"/><ellipse cx="5.400" cy="2.500" rx="3.400" ry="1.300" transform="rotate(-10 5.400 2.500)" fill="#7fcbf3"/><path d="M2.400 5.600q2.600 1.600 5.600 .2l-.8 2q-2 .8-3.800-.4z" fill="#d8a312"/><circle cx="8.300" cy="8.300" r="1.900" fill="#f2d040" stroke="#b8890c" stroke-width=".6"/></svg>
<div class="t " style="left:32.7px;top:61.699999999999996px;font-size:7.9px;letter-spacing:-0.2px">Expert Advisors</div>
<svg style="left:32px;top:73.24px" width="12" height="11" viewBox="0 0 12 11"><ellipse cx="5.700" cy="3.500" rx="5.500" ry="2.700" transform="rotate(-10 5.700 3.500)" fill="#379fdc"/><ellipse cx="5.400" cy="2.500" rx="3.400" ry="1.300" transform="rotate(-10 5.400 2.500)" fill="#7fcbf3"/><path d="M2.400 5.600q2.600 1.600 5.600 .2l-.8 2q-2 .8-3.800-.4z" fill="#d8a312"/><circle cx="8.300" cy="8.300" r="1.900" fill="#f2d040" stroke="#b8890c" stroke-width=".6"/></svg>
<div class="t " style="left:46.7px;top:73.74px;font-size:7.9px;letter-spacing:-0.2px">Curiosity One</div>
<svg style="left:32px;top:85.28px" width="12" height="11" viewBox="0 0 12 11"><ellipse cx="5.700" cy="3.500" rx="5.500" ry="2.700" transform="rotate(-10 5.700 3.500)" fill="#379fdc"/><ellipse cx="5.400" cy="2.500" rx="3.400" ry="1.300" transform="rotate(-10 5.400 2.500)" fill="#7fcbf3"/><path d="M2.400 5.600q2.600 1.600 5.600 .2l-.8 2q-2 .8-3.800-.4z" fill="#d8a312"/><circle cx="8.300" cy="8.300" r="1.900" fill="#f2d040" stroke="#b8890c" stroke-width=".6"/></svg>
<div class="t " style="left:46.7px;top:85.78px;font-size:7.9px;letter-spacing:-0.2px">Curiosity Test</div>
<svg style="left:32px;top:97.32px" width="12" height="11" viewBox="0 0 12 11"><ellipse cx="5.700" cy="3.500" rx="5.500" ry="2.700" transform="rotate(-10 5.700 3.500)" fill="#379fdc"/><ellipse cx="5.400" cy="2.500" rx="3.400" ry="1.300" transform="rotate(-10 5.400 2.500)" fill="#7fcbf3"/><path d="M2.400 5.600q2.600 1.600 5.600 .2l-.8 2q-2 .8-3.800-.4z" fill="#d8a312"/><circle cx="8.300" cy="8.300" r="1.900" fill="#f2d040" stroke="#b8890c" stroke-width=".6"/></svg>
<div class="t " style="left:46.7px;top:97.82px;font-size:7.9px;letter-spacing:-0.2px">BTCUSDTF</div>
<svg style="left:32px;top:109.36px" width="12" height="11" viewBox="0 0 12 11"><ellipse cx="5.700" cy="3.500" rx="5.500" ry="2.700" transform="rotate(-10 5.700 3.500)" fill="#379fdc"/><ellipse cx="5.400" cy="2.500" rx="3.400" ry="1.300" transform="rotate(-10 5.400 2.500)" fill="#7fcbf3"/><path d="M2.400 5.600q2.600 1.600 5.600 .2l-.8 2q-2 .8-3.800-.4z" fill="#d8a312"/><circle cx="8.300" cy="8.300" r="1.900" fill="#f2d040" stroke="#b8890c" stroke-width=".6"/></svg>
<div class="t " style="left:46.7px;top:109.85999999999999px;font-size:7.9px;letter-spacing:-0.2px">Curiosity FX multi</div>
<svg style="left:32px;top:121.40px" width="12" height="11" viewBox="0 0 12 11"><ellipse cx="5.700" cy="3.500" rx="5.500" ry="2.700" transform="rotate(-10 5.700 3.500)" fill="#379fdc"/><ellipse cx="5.400" cy="2.500" rx="3.400" ry="1.300" transform="rotate(-10 5.400 2.500)" fill="#7fcbf3"/><path d="M2.400 5.600q2.600 1.600 5.600 .2l-.8 2q-2 .8-3.800-.4z" fill="#d8a312"/><circle cx="8.300" cy="8.300" r="1.900" fill="#f2d040" stroke="#b8890c" stroke-width=".6"/></svg>
<div class="t " style="left:46.7px;top:121.89999999999999px;font-size:7.9px;letter-spacing:-0.2px">CuriosityPriceActi</div>
<svg style="left:32px;top:133.44px" width="12" height="11" viewBox="0 0 12 11"><ellipse cx="5.700" cy="3.500" rx="5.500" ry="2.700" transform="rotate(-10 5.700 3.500)" fill="#379fdc"/><ellipse cx="5.400" cy="2.500" rx="3.400" ry="1.300" transform="rotate(-10 5.400 2.500)" fill="#7fcbf3"/><path d="M2.400 5.600q2.600 1.600 5.600 .2l-.8 2q-2 .8-3.800-.4z" fill="#d8a312"/><circle cx="8.300" cy="8.300" r="1.900" fill="#bdbdbd" stroke="#777" stroke-width=".6"/></svg>
<div class="t " style="left:46.7px;top:133.94px;font-size:7.9px;letter-spacing:-0.2px">Genisys FX</div>
<svg style="left:32px;top:145.48px" width="12" height="11" viewBox="0 0 12 11"><ellipse cx="5.700" cy="3.500" rx="5.500" ry="2.700" transform="rotate(-10 5.700 3.500)" fill="#379fdc"/><ellipse cx="5.400" cy="2.500" rx="3.400" ry="1.300" transform="rotate(-10 5.400 2.500)" fill="#7fcbf3"/><path d="M2.400 5.600q2.600 1.600 5.600 .2l-.8 2q-2 .8-3.800-.4z" fill="#d8a312"/><circle cx="8.300" cy="8.300" r="1.900" fill="#f2d040" stroke="#b8890c" stroke-width=".6"/></svg>
<div class="t " style="left:46.7px;top:145.98px;font-size:7.9px;letter-spacing:-0.36px">Genisys ONE FX o</div>
<svg style="left:32px;top:157.52px" width="12" height="11" viewBox="0 0 12 11"><ellipse cx="5.700" cy="3.500" rx="5.500" ry="2.700" transform="rotate(-10 5.700 3.500)" fill="#379fdc"/><ellipse cx="5.400" cy="2.500" rx="3.400" ry="1.300" transform="rotate(-10 5.400 2.500)" fill="#7fcbf3"/><path d="M2.400 5.600q2.600 1.600 5.600 .2l-.8 2q-2 .8-3.800-.4z" fill="#d8a312"/><circle cx="8.300" cy="8.300" r="1.900" fill="#f2d040" stroke="#b8890c" stroke-width=".6"/></svg>
<div class="t " style="left:46.7px;top:158.01999999999998px;font-size:7.9px;letter-spacing:-0.36px">Genisys ONE FX</div>
</div>
<div class="a" style="left:111px;top:12px;width:11px;height:160px;background:#f0f0f0"></div>
<div class="a" style="left:112px;top:24px;width:9px;height:104px;background:#c4c4c4"></div>
<svg style="left:113.5px;top:16px" width="7" height="5" viewBox="0 0 7 5"><path d="M.7 4L3.3 1.3L5.9 4" fill="none" stroke="#333" stroke-width="1.1"/></svg>
<svg style="left:113.5px;top:163.5px" width="7" height="5" viewBox="0 0 7 5"><path d="M.7 1L3.3 3.7L5.9 1" fill="none" stroke="#333" stroke-width="1.1"/></svg>
<div class="a" style="left:3.700px;top:171.500px;width:118.500px;height:1px;background:#5a5a5a"></div>
<div class="a tabsel" style="left:3.700px;top:171.700px;width:47.500px;height:13.200px"></div>
<div class="t " style="left:10.7px;top:174.2px;font-size:7.9px;letter-spacing:.2px">Common</div>
<div class="t g" style="left:58px;top:174.2px;font-size:7.7px;letter-spacing:-.1px">Favorites</div>
<div class="a" style="left:96px;top:175px;width:1px;height:8px;background:#8a8a8a"></div>
</div>
<div class="a" id="mdi"></div>
<div class="win" style="left:126px;top:66px;width:445px;height:177px">
<svg style="left:7px;top:5.5px" width="11" height="11" viewBox="0 0 11 11"><rect x=".3" y=".6" width="7.600" height="5.800" rx="1.200" fill="#62aaea"/><rect x="1.200" y="2" width="5.800" height="3.500" fill="#dceeff"/><rect x="2.600" y="3.900" width="7.400" height="5.800" rx="1.200" fill="#62aaea" stroke="#eef5fc" stroke-width=".5"/><rect x="3.600" y="5.400" width="5.400" height="3.400" fill="#f0f8ff"/><path d="M4.300 6.300l.8 1.700l.8-1.700M6.500 8l.8-1.700l.8 1.700" stroke="#4a98e0" stroke-width=".6" fill="none"/></svg>
<div class="cap">EURUSD,M30</div>
<div class="wb" style="right:50px"><svg style="left:6px;top:5.2px" width="8" height="4" viewBox="0 0 8 4"><rect x=".4" y=".4" width="6.600" height="2.400" rx=".8" fill="#fff" stroke="#7a8796" stroke-width=".7"/></svg></div><div class="wb" style="right:27.5px"><svg style="left:6.500px;top:2px" width="7" height="7" viewBox="0 0 7 7"><rect x=".5" y=".5" width="5.600" height="4.800" rx=".6" fill="#fff" stroke="#6f7c8b" stroke-width=".8"/><rect x="1.800" y="2.200" width="3" height="1.400" fill="#6f7c8b"/></svg></div><div class="wb cl" style="right:5px"><svg style="left:6.500px;top:2.300px" width="7" height="6" viewBox="0 0 7 6"><path d="M1 .8l4.800 4.400M5.800 .8l-4.800 4.400" stroke="#707d8c" stroke-width="2.200"/><path d="M1 .8l4.800 4.400M5.800 .8l-4.800 4.400" stroke="#fff" stroke-width="1.100"/></svg></div>
</div>
<div class="win" style="left:573px;top:66px;width:444px;height:177px">
<svg style="left:7px;top:5.5px" width="11" height="11" viewBox="0 0 11 11"><rect x=".3" y=".6" width="7.600" height="5.800" rx="1.200" fill="#62aaea"/><rect x="1.200" y="2" width="5.800" height="3.500" fill="#dceeff"/><rect x="2.600" y="3.900" width="7.400" height="5.800" rx="1.200" fill="#62aaea" stroke="#eef5fc" stroke-width=".5"/><rect x="3.600" y="5.400" width="5.400" height="3.400" fill="#f0f8ff"/><path d="M4.300 6.300l.8 1.700l.8-1.700M6.500 8l.8-1.700l.8 1.700" stroke="#4a98e0" stroke-width=".6" fill="none"/></svg>
<div class="cap">USDCAD,M30</div>
<div class="wb" style="right:50px"><svg style="left:6px;top:5.2px" width="8" height="4" viewBox="0 0 8 4"><rect x=".4" y=".4" width="6.600" height="2.400" rx=".8" fill="#fff" stroke="#7a8796" stroke-width=".7"/></svg></div><div class="wb" style="right:27.5px"><svg style="left:6.500px;top:2px" width="7" height="7" viewBox="0 0 7 7"><rect x=".5" y=".5" width="5.600" height="4.800" rx=".6" fill="#fff" stroke="#6f7c8b" stroke-width=".8"/><rect x="1.800" y="2.200" width="3" height="1.400" fill="#6f7c8b"/></svg></div><div class="wb cl" style="right:5px"><svg style="left:6.500px;top:2.300px" width="7" height="6" viewBox="0 0 7 6"><path d="M1 .8l4.800 4.400M5.800 .8l-4.800 4.400" stroke="#707d8c" stroke-width="2.200"/><path d="M1 .8l4.800 4.400M5.800 .8l-4.800 4.400" stroke="#fff" stroke-width="1.100"/></svg></div>
</div>
<div class="win act" style="left:126px;top:244px;width:445px;height:177px">
<svg style="left:7px;top:5.5px" width="11" height="11" viewBox="0 0 11 11"><rect x=".3" y=".6" width="7.600" height="5.800" rx="1.200" fill="#62aaea"/><rect x="1.200" y="2" width="5.800" height="3.500" fill="#dceeff"/><rect x="2.600" y="3.900" width="7.400" height="5.800" rx="1.200" fill="#62aaea" stroke="#eef5fc" stroke-width=".5"/><rect x="3.600" y="5.400" width="5.400" height="3.400" fill="#f0f8ff"/><path d="M4.300 6.300l.8 1.700l.8-1.700M6.500 8l.8-1.700l.8 1.700" stroke="#4a98e0" stroke-width=".6" fill="none"/></svg>
<div class="cap">EURUSD,M30</div>
<div class="wb" style="right:50px"><svg style="left:6px;top:5.2px" width="8" height="4" viewBox="0 0 8 4"><rect x=".4" y=".4" width="6.600" height="2.400" rx=".8" fill="#fff" stroke="#7a8796" stroke-width=".7"/></svg></div><div class="wb" style="right:27.5px"><svg style="left:6.500px;top:2px" width="7" height="7" viewBox="0 0 7 7"><rect x=".5" y=".5" width="5.600" height="4.800" rx=".6" fill="#fff" stroke="#6f7c8b" stroke-width=".8"/><rect x="1.800" y="2.200" width="3" height="1.400" fill="#6f7c8b"/></svg></div><div class="wb cl" style="right:5px"><svg style="left:6.500px;top:2.300px" width="7" height="6" viewBox="0 0 7 6"><path d="M1 .8l4.800 4.400M5.800 .8l-4.800 4.400" stroke="#707d8c" stroke-width="2.200"/><path d="M1 .8l4.800 4.400M5.800 .8l-4.800 4.400" stroke="#fff" stroke-width="1.100"/></svg></div>
</div>
<div class="win" style="left:573px;top:244px;width:444px;height:177px">
<svg style="left:7px;top:5.5px" width="11" height="11" viewBox="0 0 11 11"><rect x=".3" y=".6" width="7.600" height="5.800" rx="1.200" fill="#62aaea"/><rect x="1.200" y="2" width="5.800" height="3.500" fill="#dceeff"/><rect x="2.600" y="3.900" width="7.400" height="5.800" rx="1.200" fill="#62aaea" stroke="#eef5fc" stroke-width=".5"/><rect x="3.600" y="5.400" width="5.400" height="3.400" fill="#f0f8ff"/><path d="M4.300 6.300l.8 1.700l.8-1.700M6.500 8l.8-1.700l.8 1.700" stroke="#4a98e0" stroke-width=".6" fill="none"/></svg>
<div class="cap">USDCAD,M30</div>
<div class="wb" style="right:50px"><svg style="left:6px;top:5.2px" width="8" height="4" viewBox="0 0 8 4"><rect x=".4" y=".4" width="6.600" height="2.400" rx=".8" fill="#fff" stroke="#7a8796" stroke-width=".7"/></svg></div><div class="wb" style="right:27.5px"><svg style="left:6.500px;top:2px" width="7" height="7" viewBox="0 0 7 7"><rect x=".5" y=".5" width="5.600" height="4.800" rx=".6" fill="#fff" stroke="#6f7c8b" stroke-width=".8"/><rect x="1.800" y="2.200" width="3" height="1.400" fill="#6f7c8b"/></svg></div><div class="wb cl" style="right:5px"><svg style="left:6.500px;top:2.300px" width="7" height="6" viewBox="0 0 7 6"><path d="M1 .8l4.800 4.400M5.800 .8l-4.800 4.400" stroke="#707d8c" stroke-width="2.200"/><path d="M1 .8l4.800 4.400M5.800 .8l-4.800 4.400" stroke="#fff" stroke-width="1.100"/></svg></div>
</div>
<svg style="left:0;top:0" width="1024" height="576" font-family="Liberation Sans, sans-serif">
<rect x="132" y="86" width="433.5" height="149.6" fill="#000"/>
<rect x="132.0" y="86.7" width="433.5" height="149.6" fill="none" stroke="#5a5a5a" stroke-width="1"/>
<line x1="156.51" y1="89.2" x2="156.51" y2="222.3" stroke="#8a9aad" stroke-width="0.8" stroke-dasharray="1.6 2"/>
<line x1="177.82" y1="89.2" x2="177.82" y2="222.3" stroke="#8a9aad" stroke-width="0.8" stroke-dasharray="1.6 2"/>
<line x1="199.13" y1="89.2" x2="199.13" y2="222.3" stroke="#8a9aad" stroke-width="0.8" stroke-dasharray="1.6 2"/>
<line x1="220.44" y1="89.2" x2="220.44" y2="222.3" stroke="#8a9aad" stroke-width="0.8" stroke-dasharray="1.6 2"/>
<line x1="241.75" y1="89.2" x2="241.75" y2="222.3" stroke="#8a9aad" stroke-width="0.8" stroke-dasharray="1.6 2"/>
<line x1="263.06" y1="89.2" x2="263.06" y2="222.3" stroke="#8a9aad" stroke-width="0.8" stroke-dasharray="1.6 2"/>
<line x1="284.37" y1="89.2" x2="284.37" y2="222.3" stroke="#8a9aad" stroke-width="0.8" stroke-dasharray="1.6 2"/>
<line x1="305.68" y1="89.2" x2="305.68" y2="222.3" stroke="#8a9aad" stroke-width="0.8" stroke-dasharray="1.6 2"/>
<line x1="326.99" y1="89.2" x2="326.99" y2="222.3" stroke="#8a9aad" stroke-width="0.8" stroke-dasharray="1.6 2"/>
<line x1="348.30" y1="89.2" x2="348.30" y2="222.3" stroke="#8a9aad" stroke-width="0.8" stroke-dasharray="1.6 2"/>
<line x1="369.61" y1="89.2" x2="369.61" y2="222.3" stroke="#8a9aad" stroke-width="0.8" stroke-dasharray="1.6 2"/>
<line x1="390.92" y1="89.2" x2="390.92" y2="222.3" stroke="#8a9aad" stroke-width="0.8" stroke-dasharray="1.6 2"/>
<line x1="412.23" y1="89.2" x2="412.23" y2="222.3" stroke="#8a9aad" stroke-width="0.8" stroke-dasharray="1.6 2"/>
<line x1="433.54" y1="89.2" x2="433.54" y2="222.3" stroke="#8a9aad" stroke-width="0.8" stroke-dasharray="1.6 2"/>
<line x1="454.85" y1="89.2" x2="454.85" y2="222.3" stroke="#8a9aad" stroke-width="0.8" stroke-dasharray="1.6 2"/>
<line x1="476.16" y1="89.2" x2="476.16" y2="222.3" stroke="#8a9aad" stroke-width="0.8" stroke-dasharray="1.6 2"/>
<line x1="497.47" y1="89.2" x2="497.47" y2="222.3" stroke="#8a9aad" stroke-width="0.8" stroke-dasharray="1.6 2"/>
<line x1="518.78" y1="89.2" x2="518.78" y2="222.3" stroke="#8a9aad" stroke-width="0.8" stroke-dasharray="1.6 2"/>
<line x1="134.5" y1="109.5" x2="535.5" y2="109.5" stroke="#8a9aad" stroke-width="0.8" stroke-dasharray="1.6 2"/>
<line x1="134.5" y1="131.6" x2="535.5" y2="131.6" stroke="#8a9aad" stroke-width="0.8" stroke-dasharray="1.6 2"/>
<line x1="134.5" y1="153.6" x2="535.5" y2="153.6" stroke="#8a9aad" stroke-width="0.8" stroke-dasharray="1.6 2"/>
<line x1="134.5" y1="175.6" x2="535.5" y2="175.6" stroke="#8a9aad" stroke-width="0.8" stroke-dasharray="1.6 2"/>
<line x1="134.5" y1="92.7" x2="531.5" y2="92.7" stroke="#cc0c0c" stroke-width="1" stroke-dasharray="5.7 4.2 1.6 4.1"/>
<line x1="134.5" y1="99.6" x2="531.5" y2="99.6" stroke="#8c97a4" stroke-width="1"/>
<line x1="134.5" y1="99.0" x2="531.5" y2="99.0" stroke="#177f17" stroke-width="1" stroke-dasharray="5.7 4.2 1.6 4.1"/>
<line x1="134.5" y1="116.8" x2="531.5" y2="116.8" stroke="#177f17" stroke-width="1" stroke-dasharray="5.7 4.2 1.6 4.1"/>
<line x1="134.5" y1="141.0" x2="531.5" y2="141.0" stroke="#177f17" stroke-width="1" stroke-dasharray="5.7 4.2 1.6 4.1"/>
<line x1="134.5" y1="144.4" x2="531.5" y2="144.4" stroke="#cc0c0c" stroke-width="1" stroke-dasharray="5.7 4.2 1.6 4.1"/>
<line x1="134.5" y1="164.6" x2="531.5" y2="164.6" stroke="#177f17" stroke-width="1" stroke-dasharray="5.7 4.2 1.6 4.1"/>
<clipPath id="cp11"><rect x="134.5" y="89.2" width="401.0" height="133.1"/></clipPath><g clip-path="url(#cp11)">
<circle cx="197.2" cy="154.0" r="4.5" fill="none" stroke="#9a8e84" stroke-width="3"/>
<circle cx="265.0" cy="139.0" r="4.5" fill="none" stroke="#9a8e84" stroke-width="3"/>
<circle cx="300.0" cy="163.7" r="4.5" fill="none" stroke="#9a8e84" stroke-width="3"/>
<circle cx="363.7" cy="148.6" r="4.5" fill="none" stroke="#9a8e84" stroke-width="3"/>
<circle cx="370.0" cy="141.7" r="4.5" fill="none" stroke="#9a8e84" stroke-width="3"/>
<circle cx="382.6" cy="135.0" r="4.5" fill="none" stroke="#9a8e84" stroke-width="3"/>
<circle cx="447.6" cy="131.4" r="4.5" fill="none" stroke="#9a8e84" stroke-width="3"/>
<circle cx="450.4" cy="124.3" r="4.5" fill="none" stroke="#9a8e84" stroke-width="3"/>
<circle cx="459.7" cy="120.2" r="4.5" fill="none" stroke="#9a8e84" stroke-width="3"/>
<circle cx="516.0" cy="107.3" r="4.5" fill="none" stroke="#9a8e84" stroke-width="3"/>
<circle cx="518.7" cy="98.4" r="4.5" fill="none" stroke="#9a8e84" stroke-width="3"/>
<polygon points="134.7,119.5 135.6,123.2 136.5,128.7 137.2,130.3 137.9,128.8 138.6,129.5 139.3,130.1 140.0,128.9 140.8,129.3 141.5,130.5 142.2,130.2 142.9,128.5 143.6,127.8 144.4,129.5 145.1,130.5 145.8,130.4 146.5,128.3 147.2,130.3 147.9,131.2 148.7,131.2 149.4,131.5 150.1,128.2 150.8,129.8 151.5,128.1 152.2,129.8 153.0,130.2 153.7,129.2 154.4,124.8 155.1,129.3 155.8,125.9 156.5,129.2 157.3,128.1 158.0,128.4 158.7,128.2 159.4,124.6 160.1,128.2 160.9,127.4 161.6,128.1 162.3,128.4 163.0,128.0 163.7,123.2 164.4,126.1 165.2,122.1 165.9,126.5 166.6,125.7 167.3,125.7 168.0,125.1 168.7,123.4 169.5,124.3 170.2,120.6 170.9,124.4 171.6,122.6 172.3,118.8 173.1,123.0 173.8,121.7 174.6,123.0 175.4,121.3 176.1,120.9 176.9,121.0 177.7,121.2 178.4,119.5 179.2,118.1 180.0,120.9 180.7,122.2 181.5,122.6 182.3,120.4 183.0,121.2 183.8,121.9 184.5,121.5 185.3,121.9 186.0,122.6 186.7,123.8 187.4,124.1 188.1,123.4 188.9,124.0 189.7,121.4 190.5,123.1 191.4,120.2 192.1,124.2 192.9,128.2 193.7,132.5 194.6,136.4 195.3,137.3 196.0,143.9 196.7,147.1 197.4,148.4 198.2,150.5 198.9,152.2 199.6,154.4 200.3,154.9 201.0,154.4 201.8,154.9 202.7,157.7 203.5,157.8 204.3,157.9 205.0,157.2 205.8,154.7 206.6,156.7 207.3,157.6 208.1,156.1 208.9,157.0 209.6,155.6 210.4,156.5 211.1,155.3 211.8,155.9 212.5,155.9 213.2,156.3 214.0,154.8 214.7,155.3 215.4,155.8 216.1,155.7 216.8,154.6 217.5,150.5 218.3,151.8 219.0,154.7 219.7,153.0 220.4,154.5 221.1,154.2 221.8,153.3 222.6,153.1 223.3,152.0 224.0,151.7 224.7,152.8 225.4,151.4 226.2,152.1 226.9,151.7 227.6,152.1 228.3,152.4 229.0,150.6 229.7,150.8 230.5,151.7 231.2,146.5 231.9,149.5 232.6,150.3 233.3,150.0 234.0,149.7 234.8,148.9 235.5,149.0 236.2,147.2 236.9,147.0 237.6,147.5 238.3,145.2 239.1,146.7 239.8,147.3 240.5,147.1 241.2,147.5 241.9,143.8 242.7,144.6 243.5,147.7 244.2,148.5 245.0,147.0 245.8,148.2 246.6,145.8 247.3,147.5 248.1,148.2 248.9,149.2 249.7,150.5 250.5,151.6 251.4,153.5 252.2,152.9 253.0,153.8 253.8,155.5 254.6,157.0 255.4,158.7 256.2,160.4 257.0,157.7 257.7,163.9 258.4,167.3 259.2,170.4 260.0,163.9 260.9,157.1 261.7,125.6 263.0,107.9 263.9,128.2 264.7,130.3 265.4,136.3 266.2,137.8 267.0,139.0 267.8,141.2 268.6,141.6 269.4,142.1 270.2,142.7 271.0,142.2 271.7,143.2 272.4,144.2 273.2,144.9 273.9,145.5 274.7,145.7 275.5,144.2 276.2,141.7 277.0,141.4 277.8,137.7 278.5,140.8 279.2,140.9 280.0,141.4 280.7,140.0 281.4,141.2 282.1,139.4 282.8,140.6 283.6,141.7 284.3,142.7 285.0,143.3 285.7,142.7 286.4,145.0 287.1,147.4 287.9,144.1 288.6,146.1 289.3,146.9 290.0,148.2 290.7,147.2 291.4,147.1 292.2,149.0 292.9,149.3 293.6,148.4 294.3,149.5 295.0,145.5 295.8,148.2 296.5,147.0 297.2,147.7 297.9,146.5 298.6,149.1 299.3,148.4 300.1,146.9 300.8,149.0 301.5,151.9 302.2,155.2 302.9,157.4 303.6,159.0 304.4,160.9 305.1,159.7 305.8,160.3 306.5,157.6 307.2,154.0 308.0,157.1 308.7,156.0 309.4,157.0 310.1,157.2 310.8,159.0 311.5,160.1 312.3,158.7 313.0,161.7 313.7,163.5 314.4,163.0 315.1,162.6 315.8,163.0 316.6,165.5 317.3,165.3 318.0,167.0 318.7,169.9 319.4,172.1 320.2,169.2 320.9,163.4 321.6,161.3 322.4,162.1 323.2,160.0 324.0,158.6 324.8,158.8 325.6,158.3 326.4,157.4 327.2,157.8 328.0,153.7 328.9,158.2 329.7,160.1 330.5,162.1 331.3,163.5 332.1,163.4 332.9,158.5 333.7,161.1 334.5,158.4 335.2,161.1 335.9,161.7 336.7,161.1 337.4,159.9 338.1,159.4 338.8,156.3 339.5,159.6 340.2,158.7 341.0,158.8 341.7,159.9 342.4,157.8 343.1,159.1 344.0,156.3 345.0,151.8 345.9,152.1 346.0,150.7 346.7,149.8 347.4,150.4 348.2,148.3 348.9,149.8 349.6,147.3 350.3,148.5 351.0,147.0 351.7,148.5 352.5,148.7 353.2,147.5 353.9,147.7 354.6,146.2 355.3,147.4 356.0,143.2 356.8,147.1 357.5,146.9 358.2,145.9 358.9,147.6 359.7,147.4 360.5,147.5 361.3,143.4 362.1,147.3 362.9,146.6 363.7,144.1 364.4,147.4 365.1,145.8 365.8,144.2 366.5,144.4 367.2,139.9 368.0,143.0 368.7,141.8 369.4,140.6 370.1,137.5 370.9,139.0 371.6,140.9 372.4,139.2 373.1,140.2 373.9,140.1 374.6,139.1 375.4,138.9 376.1,139.6 376.9,139.7 377.6,135.0 378.3,137.7 379.0,138.5 379.7,135.6 380.4,136.4 381.2,134.3 381.9,134.1 382.6,134.1 383.3,133.7 384.0,134.0 384.7,131.4 385.5,134.0 386.2,134.8 386.9,134.4 387.6,134.5 388.3,130.8 389.1,134.9 389.9,137.4 390.7,138.7 391.5,140.9 392.3,141.0 393.1,143.9 393.8,143.0 394.6,145.0 395.4,146.4 396.1,146.8 396.9,147.6 397.7,148.5 398.4,149.3 399.1,148.5 399.8,147.6 400.5,148.6 401.3,147.6 402.0,148.0 402.7,147.7 403.4,144.6 404.1,146.8 404.8,147.2 405.6,146.9 406.3,147.3 407.0,145.3 407.7,146.2 408.4,144.6 409.1,143.9 409.9,145.5 410.6,146.5 411.3,142.1 412.0,144.1 412.7,144.1 413.4,143.8 414.2,145.7 414.9,145.9 415.6,147.3 416.3,144.0 417.0,146.8 417.8,148.4 418.5,144.4 419.2,149.2 419.9,148.6 420.6,148.9 421.3,147.5 422.1,148.1 422.8,145.8 423.5,147.6 424.2,145.5 424.9,145.2 425.6,145.3 426.4,142.6 427.1,143.9 427.8,143.0 428.5,143.2 429.2,141.1 430.0,141.3 430.7,141.3 431.4,140.8 432.1,139.8 432.8,140.9 433.5,140.6 434.3,141.0 435.0,140.3 435.7,140.5 436.4,141.7 437.1,141.7 437.8,140.0 438.6,140.8 439.4,138.3 440.2,140.1 441.0,139.6 441.8,141.1 442.5,136.1 443.2,136.0 443.9,134.7 444.7,132.7 445.4,131.9 446.1,133.0 446.9,130.6 447.6,129.4 448.5,125.6 449.5,124.6 450.4,122.6 451.2,118.2 452.0,114.3 452.8,115.7 453.6,112.7 454.7,115.4 455.4,115.2 456.1,116.0 456.8,117.2 457.5,118.0 458.2,118.5 459.0,117.9 459.7,119.0 460.4,119.2 461.2,119.0 462.0,119.6 462.7,120.4 463.5,119.8 464.3,119.3 465.0,119.9 465.8,120.6 466.5,120.7 467.3,119.8 468.0,121.9 468.7,119.5 469.4,120.3 470.1,120.4 470.9,119.7 471.6,121.3 472.3,117.2 473.0,120.3 473.7,118.5 474.4,120.0 475.2,120.1 475.9,119.3 476.6,120.3 477.3,121.1 478.0,118.5 478.7,120.8 479.5,118.8 480.2,122.1 480.9,122.7 481.6,122.5 482.3,122.9 483.1,121.8 483.8,123.0 484.5,123.4 485.2,122.4 485.9,123.2 486.6,122.6 487.4,121.2 488.1,121.6 488.8,121.9 489.5,123.2 490.2,122.7 490.9,121.3 491.7,122.4 492.4,122.7 493.1,122.8 493.8,120.4 494.5,122.2 495.2,122.8 496.0,123.5 496.7,123.0 497.4,123.3 498.1,122.2 498.8,121.6 499.6,121.6 500.3,118.0 501.0,118.0 501.7,117.1 502.4,114.7 503.1,115.2 503.9,115.9 504.6,115.0 505.3,115.9 506.0,116.6 506.7,112.6 507.4,116.3 508.2,117.0 508.9,119.1 509.6,120.3 510.3,119.1 511.0,122.8 511.8,124.5 512.6,121.7 513.4,121.2 514.2,119.4 515.0,115.4 516.1,105.5 516.8,103.1 517.5,99.1 518.2,96.8 519.0,94.4 519.8,96.1 520.6,96.1 521.4,91.6 522.2,96.5 523.1,98.2 523.9,98.9 524.7,99.4 525.5,99.1 526.3,96.4 527.1,97.3 527.9,91.7 528.7,96.4 529.5,96.1 530.3,97.1 531.1,98.6 531.1,100.0 530.3,100.4 529.5,97.6 528.7,98.2 527.9,97.9 527.1,98.4 526.3,101.7 525.5,100.3 524.7,101.0 523.9,104.7 523.1,100.9 522.2,98.3 521.4,97.8 520.6,98.1 519.8,98.1 519.0,99.4 518.2,100.3 517.5,103.5 516.8,108.8 516.1,109.9 515.0,120.0 514.2,122.7 513.4,123.1 512.6,124.7 511.8,126.5 511.0,126.7 510.3,126.4 509.6,122.5 508.9,121.3 508.2,120.5 507.4,117.8 506.7,118.2 506.0,119.1 505.3,116.9 504.6,118.0 503.9,122.1 503.1,117.1 502.4,118.6 501.7,119.6 501.0,119.8 500.3,121.5 499.6,123.1 498.8,123.4 498.1,124.8 497.4,124.0 496.7,124.6 496.0,125.4 495.2,125.5 494.5,124.7 493.8,125.6 493.1,125.2 492.4,124.3 491.7,125.4 490.9,124.2 490.2,124.4 489.5,125.5 488.8,123.6 488.1,126.3 487.4,123.6 486.6,126.7 485.9,124.6 485.2,126.4 484.5,125.0 483.8,125.1 483.1,123.4 482.3,124.8 481.6,123.6 480.9,123.5 480.2,124.2 479.5,128.3 478.7,123.1 478.0,122.8 477.3,123.4 476.6,123.3 475.9,121.0 475.2,122.1 474.4,121.9 473.7,122.4 473.0,121.9 472.3,122.3 471.6,123.1 470.9,122.1 470.1,124.1 469.4,121.4 468.7,122.3 468.0,122.7 467.3,123.7 466.5,123.9 465.8,122.3 465.0,121.6 464.3,121.6 463.5,122.2 462.7,122.1 462.0,121.9 461.2,120.8 460.4,120.6 459.7,119.8 459.0,119.5 458.2,121.1 457.5,119.8 456.8,119.4 456.1,118.4 455.4,117.4 454.7,118.3 453.6,116.4 452.8,122.1 452.0,120.8 451.2,123.2 450.4,126.4 449.5,128.1 448.5,130.3 447.6,132.5 446.9,133.1 446.1,134.8 445.4,136.4 444.7,135.3 443.9,137.4 443.2,138.0 442.5,140.2 441.8,143.1 441.0,143.2 440.2,146.1 439.4,144.0 438.6,143.9 437.8,142.9 437.1,143.2 436.4,143.6 435.7,143.4 435.0,142.0 434.3,143.1 433.5,142.6 432.8,142.6 432.1,142.7 431.4,143.0 430.7,142.9 430.0,142.8 429.2,143.7 428.5,148.3 427.8,145.2 427.1,146.3 426.4,146.3 425.6,147.6 424.9,147.1 424.2,149.6 423.5,148.5 422.8,148.7 422.1,150.8 421.3,149.7 420.6,150.8 419.9,151.0 419.2,154.1 418.5,151.6 417.8,150.3 417.0,149.4 416.3,151.9 415.6,149.4 414.9,147.2 414.2,148.5 413.4,147.7 412.7,146.1 412.0,146.0 411.3,146.5 410.6,148.1 409.9,147.6 409.1,147.7 408.4,147.5 407.7,147.3 407.0,148.7 406.3,148.9 405.6,149.4 404.8,150.4 404.1,148.8 403.4,148.6 402.7,149.4 402.0,149.5 401.3,149.6 400.5,150.1 399.8,149.3 399.1,150.0 398.4,151.2 397.7,149.2 396.9,150.7 396.1,149.4 395.4,149.1 394.6,146.8 393.8,147.6 393.1,145.5 392.3,146.4 391.5,145.0 390.7,140.1 389.9,140.1 389.1,140.5 388.3,135.7 387.6,135.8 386.9,135.9 386.2,137.5 385.5,136.3 384.7,136.8 384.0,136.2 383.3,139.8 382.6,139.1 381.9,140.4 381.2,137.1 380.4,138.6 379.7,139.1 379.0,140.2 378.3,139.9 377.6,140.5 376.9,141.5 376.1,141.0 375.4,143.1 374.6,144.8 373.9,145.4 373.1,141.3 372.4,142.3 371.6,142.6 370.9,144.7 370.1,143.1 369.4,143.5 368.7,144.4 368.0,145.0 367.2,145.6 366.5,146.8 365.8,150.1 365.1,148.7 364.4,150.0 363.7,150.4 362.9,149.6 362.1,150.2 361.3,149.4 360.5,149.5 359.7,148.9 358.9,148.9 358.2,147.8 357.5,148.4 356.8,149.2 356.0,151.9 355.3,149.7 354.6,149.1 353.9,149.8 353.2,149.4 352.5,149.8 351.7,149.9 351.0,151.4 350.3,153.7 349.6,152.7 348.9,152.1 348.2,151.9 347.4,151.3 346.7,152.5 346.0,153.8 345.9,155.2 345.0,156.2 344.0,159.2 343.1,160.9 342.4,163.2 341.7,160.4 341.0,161.3 340.2,161.1 339.5,161.5 338.8,160.8 338.1,162.0 337.4,162.4 336.7,163.1 335.9,163.4 335.2,163.9 334.5,167.0 333.7,165.3 332.9,164.4 332.1,166.2 331.3,167.1 330.5,165.3 329.7,163.1 328.9,165.3 328.0,159.1 327.2,163.9 326.4,159.3 325.6,160.9 324.8,161.0 324.0,163.0 323.2,162.1 322.4,164.2 321.6,165.1 320.9,168.2 320.2,172.1 319.4,174.5 318.7,172.9 318.0,171.8 317.3,167.2 316.6,168.3 315.8,166.1 315.1,167.3 314.4,164.3 313.7,165.6 313.0,167.9 312.3,165.0 311.5,162.0 310.8,161.5 310.1,159.6 309.4,159.1 308.7,160.3 308.0,160.4 307.2,161.8 306.5,160.1 305.8,161.8 305.1,162.7 304.4,163.2 303.6,162.0 302.9,163.1 302.2,158.9 301.5,155.2 300.8,153.4 300.1,149.1 299.3,150.3 298.6,150.5 297.9,150.0 297.2,153.4 296.5,149.3 295.8,150.6 295.0,150.4 294.3,150.7 293.6,151.3 292.9,150.9 292.2,151.2 291.4,148.8 290.7,149.2 290.0,149.8 289.3,150.7 288.6,148.5 287.9,152.1 287.1,153.1 286.4,147.7 285.7,146.7 285.0,146.5 284.3,144.7 283.6,146.9 282.8,143.4 282.1,142.2 281.4,144.3 280.7,142.2 280.0,143.9 279.2,142.3 278.5,143.0 277.8,146.5 277.0,146.3 276.2,145.3 275.5,145.6 274.7,147.2 273.9,147.0 273.2,146.7 272.4,151.0 271.7,145.6 271.0,143.6 270.2,144.5 269.4,143.9 268.6,144.4 267.8,144.8 267.0,141.7 266.2,141.2 265.4,139.4 264.7,139.6 263.9,135.3 263.0,112.4 261.7,132.7 260.9,161.7 260.0,168.3 259.2,174.9 258.4,175.1 257.7,169.3 257.0,163.7 256.2,164.7 255.4,160.8 254.6,159.7 253.8,157.0 253.0,160.4 252.2,154.8 251.4,155.6 250.5,154.3 249.7,154.5 248.9,151.2 248.1,149.4 247.3,148.7 246.6,149.7 245.8,149.5 245.0,150.8 244.2,154.1 243.5,150.7 242.7,148.0 241.9,147.6 241.2,148.4 240.5,148.4 239.8,148.7 239.1,152.2 238.3,148.9 237.6,149.1 236.9,149.5 236.2,150.1 235.5,151.4 234.8,150.7 234.0,152.0 233.3,151.9 232.6,152.0 231.9,151.8 231.2,153.5 230.5,153.8 229.7,153.1 229.0,153.0 228.3,154.0 227.6,154.1 226.9,153.8 226.2,154.3 225.4,154.6 224.7,155.2 224.0,154.0 223.3,153.8 222.6,155.0 221.8,156.0 221.1,156.5 220.4,157.1 219.7,155.5 219.0,157.2 218.3,156.7 217.5,156.3 216.8,156.7 216.1,157.1 215.4,158.5 214.7,156.3 214.0,156.8 213.2,157.9 212.5,157.5 211.8,158.0 211.1,161.7 210.4,160.0 209.6,157.9 208.9,158.1 208.1,158.5 207.3,158.9 206.6,158.8 205.8,159.2 205.0,159.9 204.3,159.8 203.5,162.7 202.7,159.0 201.8,158.8 201.0,163.0 200.3,157.4 199.6,156.3 198.9,155.4 198.2,152.8 197.4,150.3 196.7,151.0 196.0,147.1 195.3,145.2 194.6,142.5 193.7,137.1 192.9,131.3 192.1,128.5 191.4,123.2 190.5,124.2 189.7,125.1 188.9,129.5 188.1,125.0 187.4,125.2 186.7,125.1 186.0,124.1 185.3,128.7 184.5,123.1 183.8,122.9 183.0,124.0 182.3,123.1 181.5,123.7 180.7,127.0 180.0,123.4 179.2,122.3 178.4,122.2 177.7,126.9 176.9,123.7 176.1,126.4 175.4,126.7 174.6,125.1 173.8,128.5 173.1,125.3 172.3,124.9 171.6,124.6 170.9,126.4 170.2,127.2 169.5,127.0 168.7,131.5 168.0,126.9 167.3,132.0 166.6,127.0 165.9,129.5 165.2,128.6 164.4,131.2 163.7,129.1 163.0,129.7 162.3,130.5 161.6,131.0 160.9,129.7 160.1,130.3 159.4,133.4 158.7,130.3 158.0,130.1 157.3,130.1 156.5,131.1 155.8,130.9 155.1,131.3 154.4,130.4 153.7,133.2 153.0,131.1 152.2,132.4 151.5,132.6 150.8,134.2 150.1,132.1 149.4,134.9 148.7,132.2 147.9,132.7 147.2,133.3 146.5,131.2 145.8,132.6 145.1,132.8 144.4,131.1 143.6,131.6 142.9,131.4 142.2,131.7 141.5,135.0 140.8,132.1 140.0,135.8 139.3,131.9 138.6,131.1 137.9,134.5 137.2,132.5 136.5,135.9 135.6,127.8 134.7,121.8" fill="#11a311" stroke="#11a311" stroke-width="0.35" stroke-linejoin="round"/>
<circle cx="197.2" cy="154.0" r="3" fill="#f6f6f6"/><path d="M197.2 151.7l2.2 2.3l-2.2 2.3l-2.2 -2.3z" fill="#ff1010"/>
<circle cx="265.0" cy="139.0" r="3" fill="#f6f6f6"/><path d="M265.0 136.7l2.2 2.3l-2.2 2.3l-2.2 -2.3z" fill="#0a18ff"/>
<circle cx="300.0" cy="163.7" r="3" fill="#f6f6f6"/><path d="M300.0 161.4l2.2 2.3l-2.2 2.3l-2.2 -2.3z" fill="#ff1010"/>
<circle cx="363.7" cy="148.6" r="3" fill="#f6f6f6"/><path d="M363.7 146.3l2.2 2.3l-2.2 2.3l-2.2 -2.3z" fill="#0a18ff"/>
<circle cx="370.0" cy="141.7" r="3" fill="#f6f6f6"/><path d="M370.0 139.4l2.2 2.3l-2.2 2.3l-2.2 -2.3z" fill="#0a18ff"/>
<circle cx="382.6" cy="135.0" r="3" fill="#f6f6f6"/><path d="M382.6 132.7l2.2 2.3l-2.2 2.3l-2.2 -2.3z" fill="#0a18ff"/>
<circle cx="447.6" cy="131.4" r="3" fill="#f6f6f6"/><path d="M447.6 129.1l2.2 2.3l-2.2 2.3l-2.2 -2.3z" fill="#0a18ff"/>
<circle cx="450.4" cy="124.3" r="3" fill="#f6f6f6"/><path d="M450.4 122.0l2.2 2.3l-2.2 2.3l-2.2 -2.3z" fill="#0a18ff"/>
<circle cx="459.7" cy="120.2" r="3" fill="#f6f6f6"/><path d="M459.7 117.9l2.2 2.3l-2.2 2.3l-2.2 -2.3z" fill="#0a18ff"/>
<circle cx="516.0" cy="107.3" r="3" fill="#f6f6f6"/><path d="M516.0 105.0l2.2 2.3l-2.2 2.3l-2.2 -2.3z" fill="#0a18ff"/>
<circle cx="518.7" cy="98.4" r="3" fill="#f6f6f6"/><path d="M518.7 96.1l2.2 2.3l-2.2 2.3l-2.2 -2.3z" fill="#0a18ff"/>
</g>
<rect x="134.5" y="176.7" width="401.0" height="3.6" fill="#000"/>
<rect x="134.5" y="177.2" width="401.5" height="2.6" fill="#b9b9b9"/>
<polyline points="134.7,212.4 136.2,212.5 137.7,212.6 139.2,212.7 140.7,213.1 142.9,213.9 145.0,215.0 146.8,216.2 148.6,217.4 150.4,218.3 152.2,218.8 154.0,219.1 155.8,219.1 157.4,218.8 159.0,218.4 160.6,218.0 162.2,217.7 163.8,217.5 165.4,217.4 167.1,217.4 168.7,217.5 170.8,217.8 173.0,217.9 174.6,217.7 176.2,217.1 177.8,216.6 179.4,216.1 181.0,215.6 182.6,215.2 184.2,214.8 185.9,214.6 187.5,214.6 189.1,214.3 190.9,213.2 192.7,211.4 194.5,210.0 196.6,209.1 198.8,208.3 200.4,207.4 202.0,207.4 203.6,208.3 205.2,210.1 206.8,211.7 208.4,213.1 210.0,214.6 211.6,215.8 213.3,216.8 214.9,217.7 216.5,218.5 218.1,219.0 219.7,219.3 221.3,219.3 222.9,219.3 224.5,219.2 226.2,218.9 228.0,218.6 229.7,218.2 231.4,217.9 233.1,217.7 234.7,217.7 236.3,217.9 238.0,218.0 239.6,218.0 241.2,217.9 242.8,217.7 244.4,217.4 246.0,217.1 247.6,216.8 249.2,216.6 250.8,216.3 252.5,215.7 254.6,214.6 256.8,212.9 258.4,210.9 260.0,205.7 261.5,197.1 263.2,188.7 265.4,183.3 267.5,182.7 269.6,183.1 271.8,186.3 273.9,193.3 276.1,202.1 278.2,209.4 280.4,213.4 282.5,215.3 284.7,216.6 286.8,216.9 288.4,217.0 290.1,216.9 291.7,216.8 293.3,216.7 294.9,216.7 296.5,216.7 298.1,216.7 299.7,215.8 301.9,214.6 303.5,213.4 305.1,212.8 306.7,212.3 308.3,211.7 310.5,211.0 312.6,211.0 314.8,211.9 316.9,212.2 319.1,211.9 320.7,211.0 322.3,210.8 323.9,210.5 325.5,210.2 327.7,209.9 329.8,210.3 331.4,211.4 333.0,212.8 334.5,213.6 336.0,213.9 337.5,214.3 339.0,214.6 340.5,215.2 342.7,216.0 344.8,216.8 346.0,217.0 347.6,216.8 349.2,216.6 350.8,216.3 352.4,216.2 354.1,216.3 355.7,216.6 357.3,216.8 358.9,217.0 360.6,217.1 362.3,217.1 364.0,217.1 365.8,217.1 367.5,216.9 369.1,216.6 370.7,216.0 372.3,215.5 373.9,215.1 375.4,214.9 376.9,214.8 378.4,214.7 379.9,214.6 381.4,214.3 383.0,213.8 384.5,213.0 386.0,212.2 387.5,211.4 389.0,210.7 390.5,210.0 392.1,209.2 393.7,209.2 395.3,209.8 397.0,211.1 398.6,212.2 400.1,213.2 401.6,214.1 403.1,215.0 404.7,215.8 406.2,216.4 407.8,216.8 409.4,216.9 411.0,217.0 412.6,217.0 414.2,216.7 415.8,216.4 417.4,216.0 419.0,215.8 420.7,215.9 422.3,216.2 423.9,216.4 425.5,216.7 427.0,216.9 428.5,217.1 430.0,217.3 431.5,217.5 433.0,217.4 434.8,216.8 436.6,215.9 438.4,215.0 440.2,214.1 442.0,213.2 443.8,212.8 445.5,212.9 447.3,213.4 449.1,213.4 450.9,212.8 452.7,211.7 454.5,211.2 456.1,211.2 457.7,211.5 459.9,211.4 462.0,211.6 463.8,212.4 465.6,213.7 467.4,214.9 469.0,216.0 470.6,217.1 472.2,218.2 473.8,218.8 475.6,218.9 477.4,218.5 479.2,218.3 480.8,218.0 482.4,217.9 484.0,217.7 485.6,217.6 487.2,217.5 488.7,217.5 490.3,217.5 491.8,217.5 493.3,217.5 494.9,217.5 496.4,217.2 498.0,216.6 499.6,215.9 501.1,215.4 502.6,215.2 504.1,215.0 505.6,214.8 507.1,214.4 508.9,213.8 510.7,213.1 512.5,212.1 514.3,210.7 516.1,209.1 517.9,207.7 519.8,206.7 521.7,206.6 523.3,207.2 524.9,208.4 526.5,210.0 528.4,212.1 530.3,213.3" fill="none" stroke="#1b5ea6" stroke-width="1.15" stroke-linejoin="round" />
<path d="M134.5 222.3V89.2H535.5V222.3Z" fill="none" stroke="#c4c4c4" stroke-width="1"/>
<line x1="135.20" y1="222.3" x2="135.20" y2="224.5" stroke="#d0d0d0" stroke-width="1"/>
<line x1="177.82" y1="222.3" x2="177.82" y2="224.5" stroke="#d0d0d0" stroke-width="1"/>
<line x1="220.44" y1="222.3" x2="220.44" y2="224.5" stroke="#d0d0d0" stroke-width="1"/>
<line x1="263.06" y1="222.3" x2="263.06" y2="224.5" stroke="#d0d0d0" stroke-width="1"/>
<line x1="305.68" y1="222.3" x2="305.68" y2="224.5" stroke="#d0d0d0" stroke-width="1"/>
<line x1="348.30" y1="222.3" x2="348.30" y2="224.5" stroke="#d0d0d0" stroke-width="1"/>
<line x1="390.92" y1="222.3" x2="390.92" y2="224.5" stroke="#d0d0d0" stroke-width="1"/>
<line x1="433.54" y1="222.3" x2="433.54" y2="224.5" stroke="#d0d0d0" stroke-width="1"/>
<line x1="476.16" y1="222.3" x2="476.16" y2="224.5" stroke="#d0d0d0" stroke-width="1"/>
<line x1="518.78" y1="222.3" x2="518.78" y2="224.5" stroke="#d0d0d0" stroke-width="1"/>
<text x="135.2" y="231.1" font-size="6.2" fill="#f2f2f2" text-anchor="start" >14 Jul 2025</text>
<text x="177.8" y="231.1" font-size="6.2" fill="#f2f2f2" text-anchor="start" >15 Jul 07:30</text>
<text x="220.4" y="231.1" font-size="6.2" fill="#f2f2f2" text-anchor="start" >15 Jul 23:35</text>
<text x="263.1" y="231.1" font-size="6.2" fill="#f2f2f2" text-anchor="start" >16 Jul 15:30</text>
<text x="305.7" y="231.1" font-size="6.2" fill="#f2f2f2" text-anchor="start" >17 Jul 07:30</text>
<text x="348.3" y="231.1" font-size="6.2" fill="#f2f2f2" text-anchor="start" >17 Jul 23:35</text>
<text x="390.9" y="231.1" font-size="6.2" fill="#f2f2f2" text-anchor="start" >18 Jul 15:30</text>
<text x="433.5" y="231.1" font-size="6.2" fill="#f2f2f2" text-anchor="start" >21 Jul 07:30</text>
<text x="476.2" y="231.1" font-size="6.2" fill="#f2f2f2" text-anchor="start" >21 Jul 23:35</text>
<text x="518.8" y="231.1" font-size="6.2" fill="#f2f2f2" text-anchor="start" >22 Jul 15:30</text>
<line x1="535.5" y1="109.5" x2="537.3" y2="109.5" stroke="#d0d0d0" stroke-width="1"/>
<text x="538.7" y="111.7" font-size="6.2" fill="#f2f2f2" text-anchor="start" >1.17220</text>
<line x1="535.5" y1="131.6" x2="537.3" y2="131.6" stroke="#d0d0d0" stroke-width="1"/>
<text x="538.7" y="133.8" font-size="6.2" fill="#f2f2f2" text-anchor="start" >1.16665</text>
<line x1="535.5" y1="153.6" x2="537.3" y2="153.6" stroke="#d0d0d0" stroke-width="1"/>
<text x="538.7" y="155.8" font-size="6.2" fill="#f2f2f2" text-anchor="start" >1.16110</text>
<line x1="535.5" y1="175.4" x2="537.3" y2="175.4" stroke="#d0d0d0" stroke-width="1"/>
<text x="538.7" y="177.6" font-size="6.2" fill="#f2f2f2" text-anchor="start" >1.15555</text>
<text x="537.5" y="185.5" font-size="6.2" fill="#f2f2f2" text-anchor="start" >0.0044</text>
<text x="537.5" y="219.8" font-size="6.2" fill="#f2f2f2" text-anchor="start" >0.0002</text>
<rect x="537.5" y="96.1" width="25.5" height="7.4" fill="#fff"/>
<text x="539.3" y="102.0" font-size="6.2" fill="#000" text-anchor="start" >1.17471</text>
<g clip-path="url(#cp11)">
<text x="139.0" y="91.9" font-size="6.2" fill="#f2f2f2" text-anchor="start" >#549621956 tp</text>
</g>
<text x="144.5" y="99.2" font-size="6.35" fill="#f2f2f2" text-anchor="start" >EURUSD,M30&#160; 1.17510 1.17522 1.17448 1.17471</text>
<path d="M137.2 95.8h4.4l-2.2 2.7z" fill="#f2f2f2"/>
<text x="139.0" y="99.2" font-size="6.2" fill="#f2f2f2" text-anchor="start" >#549621956 buy 0.02</text>
<text x="139.0" y="114.6" font-size="6.2" fill="#f2f2f2" text-anchor="start" >#549610035 sell 0.02</text>
<text x="139.0" y="138.5" font-size="6.2" fill="#f2f2f2" text-anchor="start" >#549592852 sell 0.02</text>
<text x="139.0" y="142.6" font-size="6.2" fill="#f2f2f2" text-anchor="start" >#549610035 tp</text>
<text x="139.0" y="142.6" font-size="6.2" fill="#f2f2f2" text-anchor="start" >#549584660 tp</text>
<text x="139.0" y="162.6" font-size="6.2" fill="#f2f2f2" text-anchor="start" >#549584560 sell 0.02</text>
<text x="137.3" y="187.8" font-size="6.2" fill="#f2f2f2" text-anchor="start" >ATR(10) 0.0009</text>
<text x="522.7" y="99.2" font-size="6.2" fill="#f2f2f2" text-anchor="end" >Genisys FX</text>
<circle cx="527.3" cy="97.0" r="2.9" fill="none" stroke="#e8e8e8" stroke-width="0.8"/>
<path d="M525.9 98.6q1.4 -1.6 2.8 0" fill="none" stroke="#e8e8e8" stroke-width="0.7"/>
<rect x="525.8" y="95.6" width="1" height="1" fill="#e8e8e8"/><rect x="527.8" y="95.6" width="1" height="1" fill="#e8e8e8"/>
<rect x="578" y="86" width="433.5" height="149.6" fill="#000"/>
<rect x="578.0" y="86.7" width="433.5" height="149.6" fill="none" stroke="#5a5a5a" stroke-width="1"/>
<line x1="602.51" y1="89.2" x2="602.51" y2="222.3" stroke="#8a9aad" stroke-width="0.8" stroke-dasharray="1.6 2"/>
<line x1="623.82" y1="89.2" x2="623.82" y2="222.3" stroke="#8a9aad" stroke-width="0.8" stroke-dasharray="1.6 2"/>
<line x1="645.13" y1="89.2" x2="645.13" y2="222.3" stroke="#8a9aad" stroke-width="0.8" stroke-dasharray="1.6 2"/>
<line x1="666.44" y1="89.2" x2="666.44" y2="222.3" stroke="#8a9aad" stroke-width="0.8" stroke-dasharray="1.6 2"/>
<line x1="687.75" y1="89.2" x2="687.75" y2="222.3" stroke="#8a9aad" stroke-width="0.8" stroke-dasharray="1.6 2"/>
<line x1="709.06" y1="89.2" x2="709.06" y2="222.3" stroke="#8a9aad" stroke-width="0.8" stroke-dasharray="1.6 2"/>
<line x1="730.37" y1="89.2" x2="730.37" y2="222.3" stroke="#8a9aad" stroke-width="0.8" stroke-dasharray="1.6 2"/>
<line x1="751.68" y1="89.2" x2="751.68" y2="222.3" stroke="#8a9aad" stroke-width="0.8" stroke-dasharray="1.6 2"/>
<line x1="772.99" y1="89.2" x2="772.99" y2="222.3" stroke="#8a9aad" stroke-width="0.8" stroke-dasharray="1.6 2"/>
<line x1="794.30" y1="89.2" x2="794.30" y2="222.3" stroke="#8a9aad" stroke-width="0.8" stroke-dasharray="1.6 2"/>
<line x1="815.61" y1="89.2" x2="815.61" y2="222.3" stroke="#8a9aad" stroke-width="0.8" stroke-dasharray="1.6 2"/>
<line x1="836.92" y1="89.2" x2="836.92" y2="222.3" stroke="#8a9aad" stroke-width="0.8" stroke-dasharray="1.6 2"/>
<line x1="858.23" y1="89.2" x2="858.23" y2="222.3" stroke="#8a9aad" stroke-width="0.8" stroke-dasharray="1.6 2"/>
<line x1="879.54" y1="89.2" x2="879.54" y2="222.3" stroke="#8a9aad" stroke-width="0.8" stroke-dasharray="1.6 2"/>
<line x1="900.85" y1="89.2" x2="900.85" y2="222.3" stroke="#8a9aad" stroke-width="0.8" stroke-dasharray="1.6 2"/>
<line x1="922.16" y1="89.2" x2="922.16" y2="222.3" stroke="#8a9aad" stroke-width="0.8" stroke-dasharray="1.6 2"/>
<line x1="943.47" y1="89.2" x2="943.47" y2="222.3" stroke="#8a9aad" stroke-width="0.8" stroke-dasharray="1.6 2"/>
<line x1="964.78" y1="89.2" x2="964.78" y2="222.3" stroke="#8a9aad" stroke-width="0.8" stroke-dasharray="1.6 2"/>
<line x1="580.5" y1="110.5" x2="981.5" y2="110.5" stroke="#8a9aad" stroke-width="0.8" stroke-dasharray="1.6 2"/>
<line x1="580.5" y1="132.5" x2="981.5" y2="132.5" stroke="#8a9aad" stroke-width="0.8" stroke-dasharray="1.6 2"/>
<line x1="580.5" y1="154.5" x2="981.5" y2="154.5" stroke="#8a9aad" stroke-width="0.8" stroke-dasharray="1.6 2"/>
<line x1="580.5" y1="104.3" x2="977.5" y2="104.3" stroke="#177f17" stroke-width="1" stroke-dasharray="5.7 4.2 1.6 4.1"/>
<line x1="580.5" y1="128.2" x2="977.5" y2="128.2" stroke="#cc0c0c" stroke-width="1" stroke-dasharray="5.7 4.2 1.6 4.1"/>
<line x1="580.5" y1="132.9" x2="977.5" y2="132.9" stroke="#177f17" stroke-width="1" stroke-dasharray="5.7 4.2 1.6 4.1"/>
<line x1="580.5" y1="161.2" x2="977.5" y2="161.2" stroke="#177f17" stroke-width="1" stroke-dasharray="5.7 4.2 1.6 4.1"/>
<line x1="580.5" y1="172.9" x2="977.5" y2="172.9" stroke="#177f17" stroke-width="1" stroke-dasharray="5.7 4.2 1.6 4.1"/>
<line x1="580.5" y1="174.6" x2="977.5" y2="174.6" stroke="#8c97a4" stroke-width="1"/>
<clipPath id="cp22"><rect x="580.5" y="89.2" width="401.0" height="133.1"/></clipPath><g clip-path="url(#cp22)">
<circle cx="641.8" cy="118.7" r="4.5" fill="none" stroke="#9a8e84" stroke-width="3"/>
<circle cx="703.3" cy="105.1" r="4.5" fill="none" stroke="#9a8e84" stroke-width="3"/>
<circle cx="707.4" cy="133.6" r="4.5" fill="none" stroke="#9a8e84" stroke-width="3"/>
<circle cx="749.4" cy="111.0" r="4.5" fill="none" stroke="#9a8e84" stroke-width="3"/>
<circle cx="757.5" cy="102.4" r="4.5" fill="none" stroke="#9a8e84" stroke-width="3"/>
<circle cx="773.8" cy="103.8" r="4.5" fill="none" stroke="#9a8e84" stroke-width="3"/>
<circle cx="897.7" cy="132.8" r="4.5" fill="none" stroke="#9a8e84" stroke-width="3"/>
<circle cx="960.5" cy="160.7" r="4.5" fill="none" stroke="#9a8e84" stroke-width="3"/>
<polygon points="580.9,140.8 582.0,131.8 582.7,130.3 583.5,131.4 584.2,131.7 585.0,131.2 585.8,130.8 586.5,131.6 587.3,130.8 588.0,132.3 588.8,127.3 589.5,131.7 590.3,130.2 591.0,131.7 591.8,132.2 592.5,129.7 593.2,131.5 594.0,131.1 594.7,129.6 595.5,130.6 596.2,126.9 596.9,129.9 597.7,129.6 598.4,131.0 599.2,131.1 599.9,131.9 600.6,131.8 601.4,132.1 602.1,130.7 602.8,131.6 603.6,128.3 604.3,127.0 605.1,132.0 605.8,131.6 606.5,132.1 607.3,132.9 608.0,131.9 608.8,130.8 609.5,131.6 610.2,131.3 611.0,131.1 611.7,130.4 612.5,129.1 613.2,129.8 613.9,131.9 614.7,131.7 615.4,132.1 616.1,131.4 616.9,131.8 617.6,133.0 618.4,131.6 619.1,132.1 619.8,132.2 620.6,133.0 621.3,133.1 622.1,133.6 622.8,132.9 623.5,133.5 624.3,133.7 625.0,132.6 625.8,131.7 626.5,133.5 627.2,134.2 628.0,133.9 628.7,134.3 629.4,135.6 630.2,134.5 630.9,134.3 631.7,131.3 632.4,136.0 633.2,135.5 634.0,133.8 634.7,137.2 635.5,137.9 636.2,137.4 637.0,137.8 637.9,138.7 638.8,139.2 639.7,140.0 641.0,130.6 641.7,123.1 642.5,121.7 643.2,116.3 644.0,118.1 644.8,118.0 645.6,117.7 646.4,116.6 647.2,117.5 647.9,117.0 648.7,117.4 649.4,117.3 650.1,118.1 650.9,117.6 651.6,117.5 652.4,118.5 653.1,117.9 653.8,117.5 654.6,115.3 655.3,119.1 656.0,119.2 656.8,119.5 657.5,116.9 658.3,119.1 659.0,119.2 659.7,119.2 660.5,114.4 661.2,119.1 662.0,119.3 662.7,119.0 663.4,118.4 664.2,120.3 664.9,119.2 665.7,119.1 666.4,119.2 667.1,119.1 667.9,119.6 668.6,118.0 669.3,118.5 670.1,117.8 670.8,118.1 671.6,118.4 672.3,118.5 673.0,119.6 673.8,120.5 674.5,120.5 675.3,119.3 676.0,120.2 676.7,120.3 677.5,116.7 678.2,120.6 679.0,121.1 679.7,120.5 680.4,121.3 681.2,122.0 681.9,121.8 682.7,116.8 683.4,121.8 684.1,121.8 684.9,121.6 685.6,122.5 686.3,121.0 687.1,122.3 687.9,121.4 688.6,119.7 689.4,121.1 690.2,120.6 691.0,117.6 691.7,115.5 692.5,116.9 693.3,118.2 694.1,116.0 694.8,118.0 695.6,118.7 696.4,117.5 697.1,116.8 697.9,117.1 698.7,112.0 699.5,111.3 700.4,115.7 701.2,110.2 701.9,108.6 702.6,102.8 703.3,104.0 704.2,105.7 705.1,107.9 706.0,110.8 707.4,130.3 708.3,132.3 709.2,132.4 710.1,136.0 710.9,133.4 711.7,132.7 712.6,131.5 713.4,131.8 714.2,129.9 715.0,130.9 715.7,131.5 716.5,133.4 717.3,132.3 718.0,132.6 718.8,133.9 719.6,134.6 720.4,132.2 721.2,136.0 722.0,135.5 722.8,135.5 723.7,133.8 724.4,136.9 725.2,132.7 726.0,136.1 726.8,137.0 727.5,134.2 728.3,135.5 729.1,134.8 729.9,134.0 730.6,132.9 731.4,130.5 732.2,131.2 732.9,129.0 733.7,131.2 734.5,130.6 735.3,129.4 736.1,123.1 736.9,125.6 737.7,124.7 738.6,123.0 739.3,120.8 740.1,123.6 740.9,122.5 741.7,122.3 742.4,122.7 743.2,117.8 744.0,121.7 744.9,120.8 745.8,119.9 746.7,120.6 747.6,116.0 748.5,107.8 749.4,108.3 750.2,109.7 751.0,108.5 751.8,106.0 752.7,108.3 753.5,106.2 754.3,104.7 755.1,104.3 755.9,98.9 756.7,102.7 757.5,100.8 758.3,100.5 759.1,100.7 759.8,99.5 760.6,98.7 761.4,98.4 762.2,96.2 762.9,96.8 763.8,97.2 764.8,99.4 765.7,98.9 766.5,99.2 767.3,97.1 768.1,103.1 768.9,103.3 769.7,103.5 770.5,103.4 771.3,101.8 772.2,102.5 773.0,99.0 773.8,103.1 774.6,103.9 775.3,101.7 776.1,103.1 776.9,103.4 777.7,104.3 778.4,103.6 779.2,103.6 780.0,104.8 780.8,104.6 781.5,105.2 782.3,105.2 783.1,105.3 783.8,105.2 784.6,106.1 785.4,106.3 786.2,103.2 786.9,106.5 787.7,106.6 788.5,105.3 789.3,106.7 790.0,107.6 791.0,108.4 792.0,109.9 792.7,109.2 793.5,110.2 794.2,111.2 795.0,111.0 795.7,107.9 796.4,109.6 797.2,111.0 797.9,110.5 798.7,110.7 799.4,111.5 800.1,112.1 800.9,109.2 801.6,111.4 802.3,108.3 803.1,110.0 803.8,107.5 804.6,111.2 805.3,106.1 806.0,111.3 806.8,108.9 807.5,109.9 808.3,110.0 809.0,109.0 809.8,109.3 810.6,109.9 811.4,109.7 812.1,110.1 812.9,109.6 813.7,109.8 814.5,110.9 815.3,112.5 816.1,112.8 816.9,114.7 817.7,116.3 818.5,115.1 819.2,115.6 820.0,113.3 820.7,116.7 821.5,115.8 822.3,117.0 823.0,117.6 823.8,118.0 824.5,117.8 825.3,116.3 826.1,120.9 827.0,120.7 827.8,121.6 828.6,123.6 829.5,125.0 830.4,126.8 831.3,129.2 832.2,127.5 833.1,123.4 834.0,119.4 834.9,118.8 835.8,116.7 836.7,114.3 837.5,114.2 838.3,115.1 839.0,115.1 839.8,114.0 840.6,113.4 841.3,114.0 842.1,113.1 842.9,114.2 843.6,114.3 844.3,114.8 845.1,115.1 845.8,114.4 846.6,114.3 847.3,114.9 848.0,113.5 848.8,111.2 849.5,110.8 850.3,114.9 851.6,121.6 853.0,116.7 853.7,116.7 854.5,115.7 855.2,116.6 856.0,116.3 856.7,115.5 857.5,114.7 858.2,115.5 859.0,114.6 859.7,115.4 860.5,115.6 861.2,114.5 862.0,115.4 862.7,116.1 863.5,114.1 864.2,115.8 865.0,115.3 865.8,114.7 866.5,112.9 867.3,111.6 868.0,116.2 868.8,113.1 869.5,116.2 870.3,116.0 871.0,116.9 871.8,118.3 872.5,118.0 873.3,117.9 874.1,117.1 874.8,119.7 875.6,118.3 876.4,118.3 877.2,117.5 877.9,118.1 878.7,115.7 880.1,114.1 880.8,115.6 881.6,115.7 882.4,115.9 883.2,115.5 883.9,115.8 884.7,116.3 885.5,117.5 886.3,118.3 887.1,119.5 887.9,120.4 888.7,122.6 889.5,123.3 890.3,124.8 891.2,124.3 892.0,125.6 892.8,126.0 893.6,124.9 894.5,125.6 895.4,122.5 896.3,122.7 897.7,127.0 898.5,133.1 899.3,134.1 900.1,133.3 900.9,135.0 901.7,136.5 902.5,135.4 903.4,135.1 904.2,134.4 905.0,130.5 905.8,132.9 906.6,133.0 907.3,134.4 908.1,135.0 908.9,134.2 909.7,135.2 910.4,135.2 911.2,134.9 912.0,132.1 912.8,136.4 913.5,136.1 914.3,136.9 915.1,137.6 915.9,138.6 916.6,139.0 917.4,138.3 918.2,139.3 919.0,138.8 919.7,138.8 920.5,139.3 921.3,139.0 922.0,135.6 922.8,139.9 923.6,135.4 924.4,139.1 925.1,137.3 925.9,132.8 926.7,136.4 927.5,135.7 928.2,134.5 929.0,134.7 929.8,135.1 930.6,134.1 931.3,132.1 932.1,132.2 932.9,135.9 933.6,133.4 934.4,133.9 935.1,134.4 935.9,134.8 936.6,133.3 937.4,134.0 938.2,133.7 938.9,131.5 939.7,133.7 940.5,134.0 941.3,134.1 942.1,129.6 942.9,130.9 943.7,134.6 944.5,132.9 945.3,135.8 946.0,136.0 946.8,133.7 947.6,136.6 948.4,136.7 949.1,137.7 949.9,138.6 950.7,138.7 951.5,140.0 952.2,140.4 953.0,140.6 953.8,140.0 954.6,140.9 955.5,140.2 956.4,139.9 957.3,134.1 958.2,140.0 959.1,141.6 960.0,142.5 960.9,146.0 961.8,149.6 962.7,149.0 964.0,160.3 964.9,162.6 965.7,164.3 966.5,165.5 967.3,167.3 968.1,169.9 968.9,167.0 969.7,170.4 970.5,171.2 971.4,170.3 972.2,168.4 972.9,171.4 973.7,172.1 974.5,173.4 975.3,172.0 976.0,172.3 976.8,173.4 977.6,173.7 977.6,175.9 976.8,178.4 976.0,176.7 975.3,174.5 974.5,174.4 973.7,174.8 972.9,173.9 972.2,173.2 971.4,174.5 970.5,172.7 969.7,171.7 968.9,171.8 968.1,172.8 967.3,171.1 966.5,168.1 965.7,166.4 964.9,168.7 964.0,164.2 962.7,155.7 961.8,152.5 960.9,151.1 960.0,148.0 959.1,143.3 958.2,144.7 957.3,140.7 956.4,141.5 955.5,142.3 954.6,143.8 953.8,141.6 953.0,141.6 952.2,141.8 951.5,142.0 950.7,140.5 949.9,141.1 949.1,139.3 948.4,140.0 947.6,138.8 946.8,138.1 946.0,138.0 945.3,137.4 944.5,136.2 943.7,136.1 942.9,135.5 942.1,136.1 941.3,136.1 940.5,135.7 939.7,136.0 938.9,135.1 938.2,135.4 937.4,135.7 936.6,136.7 935.9,136.3 935.1,136.4 934.4,135.7 933.6,136.0 932.9,137.5 932.1,138.2 931.3,135.7 930.6,136.5 929.8,137.8 929.0,137.5 928.2,138.0 927.5,137.4 926.7,137.7 925.9,138.4 925.1,139.5 924.4,140.6 923.6,140.8 922.8,141.4 922.0,143.7 921.3,143.7 920.5,141.1 919.7,141.0 919.0,141.2 918.2,144.9 917.4,142.7 916.6,140.5 915.9,141.3 915.1,139.5 914.3,139.5 913.5,138.6 912.8,138.6 912.0,138.0 911.2,137.0 910.4,136.3 909.7,138.5 908.9,136.3 908.1,137.1 907.3,137.0 906.6,137.1 905.8,134.5 905.0,135.3 904.2,136.3 903.4,137.5 902.5,137.9 901.7,138.7 900.9,138.5 900.1,135.7 899.3,138.8 898.5,135.5 897.7,134.2 896.3,125.4 895.4,126.3 894.5,128.3 893.6,129.4 892.8,127.8 892.0,128.5 891.2,126.1 890.3,126.4 889.5,126.7 888.7,124.7 887.9,125.5 887.1,122.3 886.3,121.4 885.5,119.5 884.7,118.3 883.9,117.8 883.2,118.7 882.4,117.7 881.6,117.3 880.8,118.9 880.1,118.9 878.7,122.7 877.9,120.7 877.2,121.2 876.4,120.1 875.6,120.3 874.8,120.7 874.1,120.6 873.3,119.6 872.5,119.3 871.8,120.4 871.0,119.1 870.3,117.0 869.5,118.2 868.8,117.6 868.0,117.3 867.3,117.5 866.5,115.5 865.8,116.3 865.0,118.7 864.2,120.3 863.5,117.5 862.7,117.6 862.0,117.5 861.2,116.2 860.5,117.5 859.7,117.1 859.0,116.7 858.2,121.0 857.5,118.7 856.7,117.7 856.0,118.7 855.2,117.8 854.5,118.2 853.7,119.0 853.0,121.1 851.6,125.3 850.3,119.7 849.5,115.8 848.8,115.6 848.0,120.9 847.3,117.6 846.6,119.7 845.8,119.5 845.1,117.8 844.3,117.2 843.6,119.3 842.9,115.6 842.1,117.6 841.3,120.9 840.6,116.0 839.8,116.2 839.0,116.4 838.3,116.7 837.5,116.8 836.7,118.6 835.8,120.9 834.9,124.4 834.0,126.5 833.1,128.3 832.2,130.0 831.3,135.6 830.4,130.3 829.5,128.8 828.6,126.2 827.8,124.1 827.0,123.0 826.1,122.7 825.3,122.1 824.5,119.5 823.8,121.0 823.0,118.6 822.3,120.0 821.5,117.8 820.7,119.8 820.0,117.3 819.2,118.4 818.5,117.0 817.7,119.2 816.9,117.8 816.1,119.7 815.3,115.5 814.5,112.6 813.7,112.3 812.9,111.5 812.1,111.5 811.4,114.9 810.6,115.8 809.8,111.3 809.0,110.9 808.3,112.3 807.5,112.2 806.8,111.8 806.0,112.5 805.3,112.8 804.6,113.1 803.8,114.8 803.1,112.4 802.3,112.7 801.6,112.3 800.9,113.7 800.1,114.3 799.4,113.4 798.7,112.3 797.9,112.2 797.2,113.2 796.4,114.2 795.7,111.6 795.0,112.7 794.2,112.7 793.5,112.7 792.7,111.7 792.0,113.1 791.0,111.8 790.0,113.0 789.3,109.1 788.5,109.8 787.7,108.8 786.9,108.7 786.2,110.6 785.4,108.4 784.6,109.0 783.8,107.1 783.1,107.7 782.3,106.4 781.5,107.3 780.8,108.1 780.0,106.2 779.2,108.5 778.4,105.5 777.7,107.5 776.9,105.9 776.1,104.9 775.3,104.5 774.6,106.9 773.8,106.2 773.0,104.7 772.2,105.3 771.3,105.0 770.5,105.9 769.7,106.5 768.9,105.4 768.1,106.3 767.3,108.0 766.5,101.8 765.7,100.8 764.8,100.8 763.8,100.7 762.9,98.5 762.2,101.9 761.4,103.0 760.6,100.6 759.8,101.4 759.1,102.1 758.3,103.0 757.5,104.5 756.7,108.3 755.9,105.7 755.1,106.6 754.3,107.9 753.5,109.2 752.7,113.5 751.8,112.6 751.0,111.0 750.2,114.2 749.4,113.5 748.5,117.0 747.6,119.5 746.7,122.4 745.8,122.4 744.9,123.2 744.0,124.0 743.2,123.1 742.4,123.5 741.7,124.5 740.9,126.9 740.1,126.1 739.3,125.5 738.6,125.9 737.7,126.7 736.9,127.5 736.1,129.4 735.3,132.2 734.5,133.3 733.7,133.3 732.9,134.9 732.2,136.6 731.4,134.7 730.6,135.4 729.9,136.2 729.1,137.1 728.3,136.7 727.5,137.6 726.8,138.1 726.0,137.4 725.2,141.4 724.4,138.6 723.7,140.9 722.8,137.9 722.0,138.0 721.2,138.6 720.4,136.5 719.6,136.9 718.8,137.2 718.0,135.2 717.3,134.1 716.5,134.6 715.7,133.7 715.0,133.5 714.2,132.5 713.4,133.5 712.6,134.3 711.7,135.0 710.9,137.1 710.1,137.6 709.2,142.2 708.3,134.6 707.4,137.1 706.0,113.1 705.1,115.8 704.2,111.6 703.3,107.5 702.6,110.8 701.9,112.8 701.2,117.3 700.4,117.5 699.5,120.1 698.7,120.0 697.9,118.4 697.1,118.8 696.4,119.7 695.6,120.6 694.8,120.0 694.1,119.0 693.3,120.8 692.5,119.6 691.7,120.6 691.0,121.4 690.2,124.0 689.4,124.8 688.6,122.8 687.9,124.0 687.1,124.8 686.3,127.5 685.6,124.5 684.9,125.3 684.1,123.4 683.4,123.1 682.7,122.9 681.9,123.6 681.2,123.6 680.4,124.2 679.7,122.7 679.0,122.5 678.2,122.7 677.5,123.9 676.7,122.8 676.0,121.6 675.3,121.5 674.5,122.5 673.8,122.8 673.0,121.6 672.3,120.9 671.6,120.8 670.8,123.4 670.1,119.6 669.3,120.7 668.6,121.2 667.9,121.7 667.1,120.2 666.4,120.3 665.7,121.0 664.9,121.4 664.2,122.3 663.4,122.4 662.7,121.4 662.0,124.6 661.2,121.5 660.5,120.3 659.7,120.9 659.0,120.6 658.3,121.2 657.5,119.7 656.8,121.5 656.0,120.5 655.3,120.3 654.6,121.4 653.8,120.2 653.1,120.5 652.4,120.5 651.6,119.6 650.9,119.9 650.1,120.4 649.4,119.6 648.7,119.3 647.9,119.1 647.2,120.0 646.4,119.5 645.6,122.8 644.8,120.0 644.0,119.2 643.2,120.6 642.5,126.5 641.7,130.6 641.0,135.2 639.7,142.3 638.8,144.8 637.9,140.3 637.0,139.4 636.2,139.3 635.5,139.5 634.7,138.6 634.0,139.3 633.2,137.9 632.4,138.6 631.7,137.0 630.9,136.1 630.2,136.4 629.4,136.5 628.7,137.5 628.0,138.3 627.2,137.5 626.5,135.9 625.8,137.1 625.0,134.6 624.3,135.0 623.5,136.2 622.8,134.6 622.1,134.5 621.3,136.9 620.6,137.5 619.8,134.8 619.1,138.0 618.4,133.8 617.6,135.2 616.9,138.1 616.1,134.5 615.4,133.3 614.7,133.2 613.9,134.4 613.2,132.9 612.5,134.1 611.7,132.7 611.0,133.2 610.2,133.7 609.5,137.6 608.8,132.6 608.0,134.2 607.3,134.6 606.5,134.6 605.8,134.1 605.1,134.8 604.3,133.3 603.6,133.3 602.8,133.1 602.1,136.6 601.4,136.9 600.6,133.2 599.9,136.5 599.2,132.3 598.4,134.0 597.7,131.6 596.9,132.3 596.2,132.7 595.5,136.4 594.7,134.2 594.0,133.6 593.2,133.3 592.5,133.1 591.8,136.4 591.0,133.0 590.3,132.9 589.5,134.2 588.8,133.6 588.0,134.4 587.3,133.6 586.5,133.4 585.8,132.5 585.0,133.9 584.2,135.2 583.5,136.9 582.7,133.1 582.0,136.2 580.9,143.8" fill="#11a311" stroke="#11a311" stroke-width="0.35" stroke-linejoin="round"/>
<circle cx="641.8" cy="118.7" r="3" fill="#f6f6f6"/><path d="M641.8 116.4l2.2 2.3l-2.2 2.3l-2.2 -2.3z" fill="#0a18ff"/>
<circle cx="703.3" cy="105.1" r="3" fill="#f6f6f6"/><path d="M703.3 102.8l2.2 2.3l-2.2 2.3l-2.2 -2.3z" fill="#0a18ff"/>
<circle cx="707.4" cy="133.6" r="3" fill="#f6f6f6"/><path d="M707.4 131.3l2.2 2.3l-2.2 2.3l-2.2 -2.3z" fill="#ff1010"/>
<circle cx="749.4" cy="111.0" r="3" fill="#f6f6f6"/><path d="M749.4 108.7l2.2 2.3l-2.2 2.3l-2.2 -2.3z" fill="#0a18ff"/>
<circle cx="757.5" cy="102.4" r="3" fill="#f6f6f6"/><path d="M757.5 100.1l2.2 2.3l-2.2 2.3l-2.2 -2.3z" fill="#0a18ff"/>
<circle cx="773.8" cy="103.8" r="3" fill="#f6f6f6"/><path d="M773.8 101.5l2.2 2.3l-2.2 2.3l-2.2 -2.3z" fill="#0a18ff"/>
<circle cx="897.7" cy="132.8" r="3" fill="#f6f6f6"/><path d="M897.7 130.5l2.2 2.3l-2.2 2.3l-2.2 -2.3z" fill="#ff1010"/>
<circle cx="960.5" cy="160.7" r="3" fill="#f6f6f6"/><path d="M960.5 158.4l2.2 2.3l-2.2 2.3l-2.2 -2.3z" fill="#ff1010"/>
</g>
<rect x="580.5" y="176.7" width="401.0" height="3.6" fill="#000"/>
<rect x="580.5" y="177.2" width="401.5" height="2.6" fill="#b9b9b9"/>
<polyline points="580.9,204.3 582.4,203.9 583.9,203.3 585.5,203.5 587.3,204.7 589.1,206.6 590.9,208.1 592.7,209.1 594.5,209.5 596.3,210.3 598.1,211.5 599.9,213.1 601.7,214.2 603.4,215.0 605.1,215.4 606.8,215.8 608.5,216.0 610.1,216.1 611.8,215.9 613.4,215.7 615.0,215.6 616.6,215.4 618.3,215.1 619.9,214.9 621.5,214.6 623.1,214.3 624.8,214.1 626.4,213.9 628.0,213.8 629.6,213.7 631.3,213.6 632.9,213.2 634.7,212.3 636.5,211.2 638.3,209.6 640.1,207.7 641.9,205.5 643.7,203.5 645.3,201.9 646.8,200.5 648.3,200.4 650.0,201.4 651.6,203.7 653.2,205.7 654.9,207.6 656.6,209.3 658.3,211.0 660.0,212.5 661.7,213.8 663.4,215.0 665.1,216.1 666.8,217.0 668.5,217.5 670.2,217.7 671.8,217.9 673.5,217.9 675.3,217.7 677.1,217.2 679.0,217.1 680.8,217.4 682.6,218.0 684.4,218.3 686.0,218.3 687.6,217.9 689.3,217.5 690.9,217.1 692.5,216.7 694.1,216.3 695.8,215.9 697.4,215.5 699.0,215.0 700.6,213.7 702.7,211.6 704.7,206.0 707.4,197.3 710.1,189.1 712.1,184.0 714.2,183.6 716.2,184.4 718.2,188.6 721.0,195.4 723.7,202.8 725.7,208.6 727.7,211.8 729.8,214.0 731.8,214.9 733.5,215.3 735.2,215.1 736.9,215.0 738.6,215.0 740.3,215.2 741.9,215.5 743.6,215.9 745.3,215.9 747.0,215.7 748.7,215.1 750.4,214.6 752.1,213.9 753.9,213.1 755.7,212.2 757.5,210.9 760.2,210.4 762.9,209.7 764.8,209.2 766.6,207.5 768.4,206.7 770.4,206.6 772.4,206.7 774.5,206.2 776.5,206.0 778.3,206.7 780.1,208.4 781.9,209.9 783.6,211.3 785.3,212.7 787.0,214.0 788.7,215.2 790.3,216.1 792.0,216.6 793.6,217.0 795.3,217.3 796.9,217.6 798.5,217.8 800.1,218.1 801.8,218.2 803.4,218.3 805.0,218.4 806.6,218.5 808.3,218.6 809.9,218.7 811.6,218.8 813.3,218.9 815.0,218.7 816.7,218.4 818.4,217.8 820.1,217.3 821.8,216.6 823.6,215.9 825.4,215.0 827.2,213.6 829.0,211.8 830.8,209.5 832.6,207.2 834.7,204.8 836.7,202.8 839.4,202.2 841.2,203.1 843.0,205.2 844.8,207.0 846.6,208.6 848.4,210.0 850.3,211.1 851.9,211.9 853.6,212.4 855.3,213.0 857.0,213.4 858.7,213.6 860.4,213.8 862.1,213.9 863.8,214.5 865.6,215.4 867.4,216.8 869.2,217.8 870.9,218.5 872.6,218.8 874.3,219.1 876.0,219.2 877.6,218.9 879.2,218.4 880.9,217.8 882.5,217.3 884.1,216.7 885.8,216.1 887.5,215.4 889.2,214.7 890.9,214.0 892.7,213.1 894.5,212.2 896.3,210.5 898.3,208.0 900.4,206.1 902.4,205.9 904.4,207.1 906.5,208.0 908.5,209.3 910.5,211.3 912.6,213.8 914.6,216.1 916.6,217.7 918.4,218.8 920.2,219.6 922.0,219.8 923.9,219.6 925.7,218.8 927.5,218.4 929.1,218.2 930.7,218.3 932.3,218.4 934.0,218.5 935.6,218.6 937.2,218.5 938.8,218.4 940.5,218.3 942.1,218.2 943.7,218.0 945.3,217.7 947.0,217.4 948.6,217.0 950.2,216.6 951.9,216.0 953.7,215.3 955.5,214.4 957.3,213.0 959.3,211.1 961.3,207.9 963.4,203.9 965.4,201.0 968.1,200.1 969.9,201.0 971.7,202.1 973.5,204.0 975.3,206.6 977.0,208.3" fill="none" stroke="#1b5ea6" stroke-width="1.15" stroke-linejoin="round" />
<path d="M580.5 222.3V89.2H981.5V222.3Z" fill="none" stroke="#c4c4c4" stroke-width="1"/>
<line x1="581.20" y1="222.3" x2="581.20" y2="224.5" stroke="#d0d0d0" stroke-width="1"/>
<line x1="623.82" y1="222.3" x2="623.82" y2="224.5" stroke="#d0d0d0" stroke-width="1"/>
<line x1="666.44" y1="222.3" x2="666.44" y2="224.5" stroke="#d0d0d0" stroke-width="1"/>
<line x1="709.06" y1="222.3" x2="709.06" y2="224.5" stroke="#d0d0d0" stroke-width="1"/>
<line x1="751.68" y1="222.3" x2="751.68" y2="224.5" stroke="#d0d0d0" stroke-width="1"/>
<line x1="794.30" y1="222.3" x2="794.30" y2="224.5" stroke="#d0d0d0" stroke-width="1"/>
<line x1="836.92" y1="222.3" x2="836.92" y2="224.5" stroke="#d0d0d0" stroke-width="1"/>
<line x1="879.54" y1="222.3" x2="879.54" y2="224.5" stroke="#d0d0d0" stroke-width="1"/>
<line x1="922.16" y1="222.3" x2="922.16" y2="224.5" stroke="#d0d0d0" stroke-width="1"/>
<line x1="964.78" y1="222.3" x2="964.78" y2="224.5" stroke="#d0d0d0" stroke-width="1"/>
<text x="581.2" y="231.1" font-size="6.2" fill="#f2f2f2" text-anchor="start" >14 Jul 2025</text>
<text x="623.8" y="231.1" font-size="6.2" fill="#f2f2f2" text-anchor="start" >15 Jul 07:30</text>
<text x="666.4" y="231.1" font-size="6.2" fill="#f2f2f2" text-anchor="start" >15 Jul 23:35</text>
<text x="709.1" y="231.1" font-size="6.2" fill="#f2f2f2" text-anchor="start" >16 Jul 15:30</text>
<text x="751.7" y="231.1" font-size="6.2" fill="#f2f2f2" text-anchor="start" >17 Jul 07:30</text>
<text x="794.3" y="231.1" font-size="6.2" fill="#f2f2f2" text-anchor="start" >17 Jul 23:35</text>
<text x="836.9" y="231.1" font-size="6.2" fill="#f2f2f2" text-anchor="start" >18 Jul 15:30</text>
<text x="879.5" y="231.1" font-size="6.2" fill="#f2f2f2" text-anchor="start" >21 Jul 07:30</text>
<text x="922.2" y="231.1" font-size="6.2" fill="#f2f2f2" text-anchor="start" >21 Jul 23:35</text>
<text x="964.8" y="231.1" font-size="6.2" fill="#f2f2f2" text-anchor="start" >22 Jul 15:30</text>
<line x1="981.5" y1="110.5" x2="983.3" y2="110.5" stroke="#d0d0d0" stroke-width="1"/>
<text x="984.7" y="112.7" font-size="6.2" fill="#f2f2f2" text-anchor="start" >1.37410</text>
<line x1="981.5" y1="132.3" x2="983.3" y2="132.3" stroke="#d0d0d0" stroke-width="1"/>
<text x="984.7" y="134.5" font-size="6.2" fill="#f2f2f2" text-anchor="start" >1.36940</text>
<line x1="981.5" y1="154.4" x2="983.3" y2="154.4" stroke="#d0d0d0" stroke-width="1"/>
<text x="984.7" y="156.6" font-size="6.2" fill="#f2f2f2" text-anchor="start" >1.36470</text>
<text x="983.5" y="187.0" font-size="6.2" fill="#f2f2f2" text-anchor="start" >0.0022</text>
<text x="983.5" y="220.8" font-size="6.2" fill="#f2f2f2" text-anchor="start" >0.0003</text>
<rect x="983.5" y="170.7" width="25.5" height="7.4" fill="#fff"/>
<text x="985.3" y="176.6" font-size="6.2" fill="#000" text-anchor="start" >1.36050</text>
<g clip-path="url(#cp22)">
</g>
<text x="590.5" y="97.6" font-size="6.35" fill="#f2f2f2" text-anchor="start" >USDCAD,M30&#160; 1.36037 1.36053 1.36020 1.36050</text>
<path d="M583.2 94.2h4.4l-2.2 2.7z" fill="#f2f2f2"/>
<text x="585.0" y="102.6" font-size="6.2" fill="#f2f2f2" text-anchor="start" >#549587117 buy 0.02</text>
<text x="585.0" y="126.8" font-size="6.2" fill="#f2f2f2" text-anchor="start" >#549592852 tp</text>
<text x="585.0" y="126.8" font-size="6.2" fill="#f2f2f2" text-anchor="start" >#549588117 tp</text>
<text x="585.0" y="130.8" font-size="6.2" fill="#f2f2f2" text-anchor="start" >#549604921 buy 0.02</text>
<text x="585.0" y="159.2" font-size="6.2" fill="#f2f2f2" text-anchor="start" >#549620582 buy 0.02</text>
<text x="585.0" y="171.6" font-size="6.2" fill="#f2f2f2" text-anchor="start" >#549622233 sell 0.02</text>
<text x="583.3" y="187.8" font-size="6.2" fill="#f2f2f2" text-anchor="start" >ATR(10) 0.0009</text>
<text x="968.7" y="98.4" font-size="6.2" fill="#f2f2f2" text-anchor="end" >Genisys FX</text>
<circle cx="973.3" cy="96.2" r="2.9" fill="none" stroke="#e8e8e8" stroke-width="0.8"/>
<path d="M971.9 97.8q1.4 -1.6 2.8 0" fill="none" stroke="#e8e8e8" stroke-width="0.7"/>
<rect x="971.8" y="94.8" width="1" height="1" fill="#e8e8e8"/><rect x="973.8" y="94.8" width="1" height="1" fill="#e8e8e8"/>
<rect x="132" y="264" width="433.5" height="149.1" fill="#000"/>
<rect x="132.0" y="264.7" width="433.5" height="149.1" fill="none" stroke="#5a5a5a" stroke-width="1"/>
<line x1="156.51" y1="267.2" x2="156.51" y2="399.6" stroke="#8a9aad" stroke-width="0.8" stroke-dasharray="1.6 2"/>
<line x1="177.82" y1="267.2" x2="177.82" y2="399.6" stroke="#8a9aad" stroke-width="0.8" stroke-dasharray="1.6 2"/>
<line x1="199.13" y1="267.2" x2="199.13" y2="399.6" stroke="#8a9aad" stroke-width="0.8" stroke-dasharray="1.6 2"/>
<line x1="220.44" y1="267.2" x2="220.44" y2="399.6" stroke="#8a9aad" stroke-width="0.8" stroke-dasharray="1.6 2"/>
<line x1="241.75" y1="267.2" x2="241.75" y2="399.6" stroke="#8a9aad" stroke-width="0.8" stroke-dasharray="1.6 2"/>
<line x1="263.06" y1="267.2" x2="263.06" y2="399.6" stroke="#8a9aad" stroke-width="0.8" stroke-dasharray="1.6 2"/>
<line x1="284.37" y1="267.2" x2="284.37" y2="399.6" stroke="#8a9aad" stroke-width="0.8" stroke-dasharray="1.6 2"/>
<line x1="305.68" y1="267.2" x2="305.68" y2="399.6" stroke="#8a9aad" stroke-width="0.8" stroke-dasharray="1.6 2"/>
<line x1="326.99" y1="267.2" x2="326.99" y2="399.6" stroke="#8a9aad" stroke-width="0.8" stroke-dasharray="1.6 2"/>
<line x1="348.30" y1="267.2" x2="348.30" y2="399.6" stroke="#8a9aad" stroke-width="0.8" stroke-dasharray="1.6 2"/>
<line x1="369.61" y1="267.2" x2="369.61" y2="399.6" stroke="#8a9aad" stroke-width="0.8" stroke-dasharray="1.6 2"/>
<line x1="390.92" y1="267.2" x2="390.92" y2="399.6" stroke="#8a9aad" stroke-width="0.8" stroke-dasharray="1.6 2"/>
<line x1="412.23" y1="267.2" x2="412.23" y2="399.6" stroke="#8a9aad" stroke-width="0.8" stroke-dasharray="1.6 2"/>
<line x1="433.54" y1="267.2" x2="433.54" y2="399.6" stroke="#8a9aad" stroke-width="0.8" stroke-dasharray="1.6 2"/>
<line x1="454.85" y1="267.2" x2="454.85" y2="399.6" stroke="#8a9aad" stroke-width="0.8" stroke-dasharray="1.6 2"/>
<line x1="476.16" y1="267.2" x2="476.16" y2="399.6" stroke="#8a9aad" stroke-width="0.8" stroke-dasharray="1.6 2"/>
<line x1="497.47" y1="267.2" x2="497.47" y2="399.6" stroke="#8a9aad" stroke-width="0.8" stroke-dasharray="1.6 2"/>
<line x1="518.78" y1="267.2" x2="518.78" y2="399.6" stroke="#8a9aad" stroke-width="0.8" stroke-dasharray="1.6 2"/>
<line x1="134.5" y1="288.6" x2="535.5" y2="288.6" stroke="#8a9aad" stroke-width="0.8" stroke-dasharray="1.6 2"/>
<line x1="134.5" y1="310.5" x2="535.5" y2="310.5" stroke="#8a9aad" stroke-width="0.8" stroke-dasharray="1.6 2"/>
<line x1="134.5" y1="332.6" x2="535.5" y2="332.6" stroke="#8a9aad" stroke-width="0.8" stroke-dasharray="1.6 2"/>
<line x1="134.5" y1="354.6" x2="535.5" y2="354.6" stroke="#8a9aad" stroke-width="0.8" stroke-dasharray="1.6 2"/>
<line x1="134.5" y1="376.7" x2="535.5" y2="376.7" stroke="#8a9aad" stroke-width="0.8" stroke-dasharray="1.6 2"/>
<line x1="134.5" y1="271.7" x2="531.5" y2="271.7" stroke="#cc0c0c" stroke-width="1" stroke-dasharray="5.7 4.2 1.6 4.1"/>
<line x1="134.5" y1="280.8" x2="531.5" y2="280.8" stroke="#177f17" stroke-width="1" stroke-dasharray="5.7 4.2 1.6 4.1"/>
<line x1="134.5" y1="282.2" x2="531.5" y2="282.2" stroke="#8c97a4" stroke-width="1"/>
<line x1="134.5" y1="307.8" x2="531.5" y2="307.8" stroke="#177f17" stroke-width="1" stroke-dasharray="5.7 4.2 1.6 4.1"/>
<line x1="134.5" y1="343.4" x2="531.5" y2="343.4" stroke="#177f17" stroke-width="1" stroke-dasharray="5.7 4.2 1.6 4.1"/>
<line x1="134.5" y1="349.4" x2="531.5" y2="349.4" stroke="#cc0c0c" stroke-width="1" stroke-dasharray="5.7 4.2 1.6 4.1"/>
<line x1="134.5" y1="380.0" x2="531.5" y2="380.0" stroke="#177f17" stroke-width="1" stroke-dasharray="5.7 4.2 1.6 4.1"/>
<clipPath id="cp33"><rect x="134.5" y="267.2" width="401.0" height="132.4"/></clipPath><g clip-path="url(#cp33)">
<circle cx="135.5" cy="330.0" r="4.5" fill="none" stroke="#9a8e84" stroke-width="3"/>
<circle cx="193.3" cy="347.5" r="4.5" fill="none" stroke="#9a8e84" stroke-width="3"/>
<circle cx="194.4" cy="358.0" r="4.5" fill="none" stroke="#9a8e84" stroke-width="3"/>
<circle cx="200.0" cy="368.9" r="4.5" fill="none" stroke="#9a8e84" stroke-width="3"/>
<circle cx="255.5" cy="384.4" r="4.5" fill="none" stroke="#9a8e84" stroke-width="3"/>
<circle cx="258.6" cy="391.4" r="4.5" fill="none" stroke="#9a8e84" stroke-width="3"/>
<circle cx="274.4" cy="347.0" r="4.5" fill="none" stroke="#9a8e84" stroke-width="3"/>
<circle cx="301.4" cy="381.7" r="4.5" fill="none" stroke="#9a8e84" stroke-width="3"/>
<circle cx="320.3" cy="380.3" r="4.5" fill="none" stroke="#9a8e84" stroke-width="3"/>
<circle cx="370.4" cy="343.3" r="4.5" fill="none" stroke="#9a8e84" stroke-width="3"/>
<circle cx="451.6" cy="307.2" r="4.5" fill="none" stroke="#9a8e84" stroke-width="3"/>
<polygon points="135.0,311.3 136.1,327.4 136.8,329.4 137.5,329.3 138.3,329.5 139.0,330.3 139.7,331.9 140.4,331.6 141.1,331.5 141.9,332.0 142.7,331.7 143.5,330.7 144.3,331.0 145.1,330.2 145.9,329.6 146.7,330.4 147.5,327.2 148.3,329.8 149.0,326.7 149.8,331.0 150.6,330.3 151.4,331.4 152.2,331.5 153.0,329.6 153.8,329.8 154.6,329.3 155.4,326.8 156.2,323.8 157.0,324.3 157.8,323.7 158.6,325.0 159.4,324.1 160.2,324.3 161.0,325.2 161.7,325.4 162.5,324.7 163.3,323.1 164.1,324.4 164.9,324.6 165.7,320.7 166.5,319.0 167.3,321.7 168.1,322.1 168.9,320.4 169.7,320.8 170.5,319.4 171.3,320.5 172.1,320.0 172.9,319.8 173.7,317.9 174.4,316.1 175.2,318.0 176.0,317.6 176.8,316.9 177.6,316.4 178.4,316.2 179.2,316.1 180.0,316.7 180.8,312.1 181.6,316.6 182.4,317.6 183.2,317.1 184.0,318.6 184.8,318.5 185.6,318.3 186.4,315.5 187.2,319.6 188.1,320.9 188.9,321.7 189.7,322.7 190.7,317.4 191.7,312.7 192.5,325.2 193.3,335.4 194.3,341.9 195.3,346.7 196.2,350.4 197.1,353.5 198.1,358.1 199.0,359.9 199.9,360.3 200.8,366.6 201.7,368.0 202.5,367.2 203.3,368.6 204.2,370.0 205.0,369.7 205.8,370.5 206.6,370.4 207.4,368.9 208.2,368.4 209.0,369.5 209.8,369.5 210.6,367.9 211.3,367.1 212.1,367.4 212.9,368.2 213.7,367.7 214.5,366.6 215.3,366.6 216.1,366.0 216.9,364.1 217.7,365.3 218.5,364.3 219.3,362.3 220.1,364.3 220.9,364.4 221.7,361.7 222.5,362.7 223.3,359.4 224.0,363.0 224.8,362.4 225.6,360.7 226.4,361.7 227.2,361.4 228.0,359.8 228.8,357.0 229.6,360.2 230.4,359.3 231.2,359.4 232.0,359.6 232.8,357.3 233.6,359.2 234.4,358.3 235.2,357.3 236.0,355.6 236.7,352.7 237.5,354.3 238.3,355.8 239.2,350.3 240.0,355.6 240.8,354.4 241.7,352.3 242.5,348.7 243.3,353.3 244.2,354.5 245.0,353.7 245.8,356.0 246.7,356.7 247.5,357.8 248.3,359.0 249.2,360.1 250.0,361.7 250.8,361.9 251.7,363.3 252.5,365.1 253.3,365.7 254.2,367.4 255.0,369.4 255.9,373.0 256.9,376.3 257.8,379.0 258.5,382.5 259.3,385.3 260.0,388.8 261.1,340.9 261.9,318.1 262.8,294.1 264.2,335.1 265.1,337.5 266.1,339.9 267.0,336.5 268.0,340.8 268.9,342.4 269.8,343.6 270.7,345.1 271.7,347.5 272.6,346.3 273.5,345.9 274.4,345.9 275.3,346.8 276.1,346.9 276.9,348.3 277.8,347.9 278.6,349.9 279.4,347.8 280.3,348.9 281.1,348.2 281.9,347.7 282.8,348.0 283.6,348.6 284.4,348.9 285.3,351.2 286.1,355.0 286.9,356.2 287.8,351.9 288.6,352.8 289.4,355.1 290.3,356.1 291.1,354.0 291.9,356.3 292.8,356.1 293.6,356.9 294.4,358.2 295.3,359.4 296.1,358.6 296.9,356.7 297.8,357.1 298.6,354.4 299.4,354.7 300.2,354.8 300.9,363.1 301.7,369.4 302.6,372.7 303.6,377.2 304.4,375.9 305.3,375.0 306.1,373.4 306.9,371.6 307.8,366.0 308.6,370.9 309.4,373.2 310.3,373.8 311.1,374.5 311.9,374.7 312.8,375.6 313.6,377.5 314.4,375.6 315.3,379.2 316.1,380.8 317.0,384.5 318.0,385.3 318.9,394.3 320.3,379.8 321.1,379.9 321.9,378.9 322.8,374.4 323.6,375.7 324.4,371.5 325.3,372.9 326.1,373.5 326.9,372.0 327.8,369.4 328.6,371.3 329.4,372.0 330.3,374.0 331.1,374.7 331.9,376.0 332.8,375.4 333.6,377.7 334.4,380.2 335.3,378.8 336.1,379.8 336.9,379.5 337.8,377.8 338.6,376.5 339.4,374.1 340.3,372.3 341.1,368.7 341.9,368.4 342.8,366.1 343.6,365.3 344.4,364.6 345.3,357.6 346.0,360.5 346.8,360.6 347.6,359.8 348.4,358.4 349.2,356.3 350.0,356.3 350.8,355.8 351.6,354.1 352.3,354.6 353.1,355.5 353.9,355.3 354.6,352.8 355.4,352.4 356.2,352.0 357.0,352.7 357.7,352.3 358.5,351.2 359.2,353.1 359.9,354.7 360.6,355.3 361.3,353.8 362.0,353.1 362.8,357.7 363.5,357.9 364.2,359.1 364.9,359.5 365.7,356.0 366.5,356.6 367.2,351.9 368.0,352.3 368.8,348.6 369.6,347.4 370.4,346.6 371.3,348.1 372.1,346.1 372.9,345.3 373.8,344.8 374.6,344.0 375.4,344.1 376.2,342.5 377.0,342.6 377.7,340.8 378.5,343.6 379.3,342.2 380.2,339.6 381.0,340.0 381.8,335.3 382.7,335.7 383.5,333.6 384.4,331.0 385.4,328.9 386.3,325.0 387.2,330.7 388.1,334.0 389.1,338.7 390.0,342.0 390.9,340.7 391.8,346.3 392.7,348.5 393.5,351.0 394.3,352.3 395.2,354.4 396.0,355.0 396.8,354.5 397.6,355.0 398.4,356.4 399.2,357.4 400.0,358.3 400.8,357.7 401.6,357.2 402.3,356.1 403.1,356.9 403.9,355.3 404.7,354.3 405.5,354.9 406.3,353.7 407.1,351.9 407.9,353.9 408.7,351.8 409.5,351.2 410.3,352.2 411.1,352.7 411.9,353.0 412.7,352.7 413.5,351.5 414.3,349.5 415.0,354.5 415.8,356.0 416.6,356.4 417.4,357.2 418.2,358.5 419.0,357.3 419.8,358.5 420.6,357.8 421.4,357.5 422.2,355.4 423.0,355.7 423.8,355.0 424.6,354.0 425.4,352.9 426.2,351.8 427.0,351.2 427.7,350.5 428.5,348.8 429.3,348.2 430.1,347.0 430.9,346.0 431.7,343.5 432.5,343.5 433.3,345.1 434.1,344.1 434.9,343.2 435.7,343.1 436.5,343.3 437.3,341.7 438.1,343.4 438.9,343.9 439.7,344.9 440.4,345.1 441.4,341.3 442.3,339.4 443.2,335.1 444.1,328.6 445.1,329.8 446.0,326.4 446.8,329.5 447.7,330.9 448.5,331.4 449.3,332.2 450.2,321.3 451.0,312.5 452.0,308.4 452.9,303.0 453.9,302.5 454.8,305.8 455.7,307.3 456.6,308.4 457.4,310.8 458.2,311.4 459.1,313.3 459.9,314.6 460.7,315.8 461.5,314.4 462.3,314.9 463.1,315.1 463.9,313.8 464.7,313.6 465.4,309.3 466.2,313.9 467.0,313.4 467.7,313.8 468.5,313.3 469.2,312.3 470.0,313.5 470.7,312.7 471.5,313.2 472.3,313.6 473.0,313.8 473.8,312.2 474.6,312.7 475.4,314.0 476.2,314.6 477.0,314.4 477.7,315.9 478.5,316.6 479.3,316.1 480.1,316.7 480.8,316.3 481.6,317.4 482.4,317.4 483.1,317.2 483.9,316.3 484.6,317.4 485.4,316.8 486.2,315.7 486.9,315.4 487.7,316.6 488.4,317.1 489.2,316.5 489.9,317.4 490.7,315.7 491.5,316.6 492.2,317.2 493.0,317.7 493.7,318.1 494.5,317.6 495.2,316.7 496.0,317.3 496.8,316.2 497.7,314.2 498.5,310.6 499.3,313.0 500.2,307.8 501.0,309.7 501.8,307.7 502.7,307.4 503.5,306.1 504.3,307.4 505.1,304.9 505.9,307.3 506.7,308.4 507.5,303.9 508.3,305.2 509.1,309.4 509.9,310.8 510.8,312.6 511.7,316.0 512.7,315.1 513.6,313.3 514.5,311.5 515.4,308.0 516.2,301.9 516.9,295.7 517.7,291.4 518.6,282.5 519.6,277.9 520.6,276.2 521.6,273.7 522.3,275.3 523.0,275.9 523.7,277.6 524.4,280.2 525.2,281.4 526.0,279.6 526.8,278.8 527.7,280.5 528.5,280.8 529.3,280.5 530.3,277.1 531.2,278.2 532.1,278.9 532.1,281.1 531.2,281.3 530.3,282.6 529.3,282.1 528.5,282.9 527.7,282.5 526.8,282.1 526.0,283.1 525.2,284.2 524.4,283.6 523.7,280.3 523.0,278.2 522.3,277.9 521.6,277.7 520.6,279.4 519.6,282.2 518.6,289.7 517.7,296.1 516.9,300.6 516.2,306.1 515.4,317.0 514.5,316.3 513.6,323.5 512.7,322.2 511.7,319.7 510.8,316.0 509.9,312.5 509.1,313.2 508.3,311.0 507.5,310.3 506.7,310.9 505.9,308.8 505.1,309.9 504.3,308.5 503.5,308.8 502.7,310.6 501.8,312.1 501.0,312.4 500.2,313.2 499.3,315.2 498.5,316.3 497.7,316.7 496.8,319.0 496.0,319.1 495.2,319.2 494.5,319.3 493.7,319.8 493.0,319.9 492.2,321.3 491.5,318.9 490.7,317.9 489.9,318.9 489.2,318.4 488.4,318.1 487.7,318.0 486.9,317.3 486.2,317.4 485.4,320.7 484.6,320.9 483.9,318.2 483.1,321.7 482.4,321.3 481.6,322.3 480.8,318.1 480.1,323.3 479.3,318.1 478.5,318.2 477.7,319.1 477.0,316.8 476.2,316.3 475.4,315.9 474.6,314.5 473.8,314.8 473.0,316.5 472.3,315.0 471.5,314.7 470.7,315.1 470.0,314.9 469.2,314.4 468.5,315.8 467.7,315.4 467.0,315.4 466.2,315.3 465.4,315.3 464.7,315.0 463.9,316.0 463.1,321.1 462.3,320.4 461.5,317.1 460.7,317.8 459.9,322.1 459.1,316.2 458.2,313.3 457.4,313.6 456.6,311.7 455.7,309.7 454.8,309.3 453.9,306.8 452.9,307.4 452.0,315.0 451.0,320.9 450.2,326.0 449.3,335.5 448.5,334.6 447.7,333.5 446.8,331.8 446.0,331.1 445.1,333.2 444.1,336.5 443.2,340.8 442.3,342.7 441.4,344.6 440.4,346.4 439.7,347.6 438.9,349.8 438.1,345.1 437.3,345.4 436.5,345.8 435.7,345.1 434.9,344.8 434.1,345.3 433.3,346.8 432.5,351.0 431.7,347.8 430.9,348.9 430.1,349.1 429.3,350.0 428.5,351.4 427.7,352.6 427.0,353.0 426.2,354.2 425.4,354.8 424.6,360.4 423.8,356.6 423.0,357.4 422.2,358.5 421.4,358.8 420.6,362.1 419.8,360.3 419.0,360.8 418.2,360.0 417.4,360.7 416.6,358.3 415.8,359.8 415.0,357.0 414.3,360.9 413.5,354.1 412.7,355.0 411.9,357.5 411.1,353.6 410.3,353.7 409.5,359.2 408.7,355.0 407.9,355.4 407.1,356.1 406.3,356.3 405.5,357.0 404.7,356.9 403.9,357.2 403.1,358.3 402.3,359.1 401.6,358.8 400.8,359.1 400.0,359.9 399.2,359.9 398.4,358.1 397.6,358.3 396.8,358.5 396.0,357.7 395.2,359.3 394.3,354.8 393.5,357.9 392.7,351.4 391.8,350.6 390.9,347.1 390.0,345.1 389.1,343.7 388.1,338.5 387.2,334.3 386.3,331.7 385.4,332.6 384.4,334.1 383.5,336.7 382.7,337.8 381.8,342.8 381.0,345.3 380.2,343.2 379.3,348.1 378.5,345.2 377.7,345.3 377.0,344.6 376.2,344.8 375.4,346.1 374.6,346.2 373.8,346.8 372.9,347.7 372.1,348.4 371.3,349.7 370.4,349.3 369.6,350.7 368.8,352.6 368.0,357.5 367.2,356.0 366.5,359.2 365.7,361.4 364.9,364.8 364.2,361.2 363.5,360.5 362.8,360.2 362.0,358.6 361.3,359.0 360.6,356.9 359.9,358.5 359.2,355.6 358.5,353.9 357.7,354.1 357.0,354.3 356.2,353.7 355.4,354.5 354.6,355.8 353.9,356.4 353.1,358.6 352.3,360.3 351.6,357.4 350.8,361.0 350.0,358.8 349.2,359.6 348.4,360.2 347.6,364.2 346.8,364.6 346.0,363.0 345.3,368.0 344.4,366.0 343.6,367.6 342.8,370.0 341.9,372.5 341.1,377.9 340.3,375.2 339.4,377.2 338.6,379.0 337.8,380.7 336.9,380.9 336.1,381.8 335.3,381.4 334.4,382.3 333.6,382.9 332.8,380.9 331.9,378.8 331.1,376.8 330.3,377.0 329.4,375.5 328.6,372.3 327.8,373.5 326.9,374.4 326.1,376.7 325.3,377.4 324.4,377.1 323.6,378.3 322.8,380.3 321.9,382.0 321.1,384.2 320.3,387.9 318.9,398.5 318.0,393.2 317.0,391.1 316.1,382.2 315.3,381.5 314.4,380.5 313.6,380.9 312.8,378.0 311.9,377.7 311.1,375.9 310.3,376.1 309.4,377.4 308.6,376.0 307.8,372.3 306.9,374.6 306.1,376.1 305.3,377.4 304.4,382.2 303.6,385.5 302.6,377.4 301.7,377.5 300.9,369.5 300.2,364.2 299.4,357.1 298.6,358.1 297.8,358.8 296.9,359.7 296.1,360.8 295.3,361.2 294.4,360.7 293.6,359.4 292.8,358.1 291.9,358.7 291.1,356.7 290.3,358.1 289.4,357.3 288.6,358.6 287.8,357.1 286.9,357.6 286.1,358.7 285.3,355.1 284.4,352.7 283.6,351.1 282.8,352.1 281.9,349.4 281.1,349.6 280.3,351.1 279.4,350.4 278.6,352.0 277.8,350.9 276.9,350.0 276.1,349.9 275.3,348.9 274.4,347.1 273.5,348.1 272.6,348.8 271.7,350.6 270.7,349.0 269.8,346.6 268.9,345.0 268.0,343.4 267.0,343.9 266.1,343.0 265.1,340.4 264.2,339.6 262.8,298.9 261.9,322.6 261.1,345.5 260.0,392.5 259.3,389.3 258.5,387.3 257.8,383.2 256.9,379.7 255.9,376.8 255.0,373.6 254.2,370.3 253.3,367.2 252.5,368.0 251.7,367.5 250.8,365.2 250.0,364.1 249.2,362.9 248.3,362.5 247.5,360.4 246.7,359.4 245.8,360.1 245.0,358.5 244.2,358.8 243.3,355.1 242.5,354.5 241.7,355.0 240.8,356.1 240.0,356.7 239.2,358.6 238.3,358.2 237.5,357.0 236.7,358.1 236.0,359.7 235.2,359.7 234.4,363.3 233.6,360.8 232.8,361.3 232.0,362.9 231.2,361.1 230.4,361.6 229.6,362.4 228.8,363.2 228.0,363.0 227.2,363.3 226.4,363.6 225.6,366.6 224.8,368.7 224.0,365.3 223.3,364.2 222.5,365.6 221.7,365.1 220.9,366.7 220.1,366.9 219.3,367.2 218.5,366.7 217.7,368.2 216.9,368.5 216.1,368.2 215.3,368.4 214.5,368.4 213.7,369.1 212.9,373.6 212.1,369.6 211.3,369.9 210.6,370.2 209.8,370.9 209.0,371.1 208.2,370.5 207.4,371.3 206.6,372.2 205.8,373.1 205.0,371.1 204.2,371.5 203.3,370.3 202.5,370.7 201.7,370.8 200.8,370.6 199.9,366.3 199.0,363.0 198.1,362.9 197.1,359.1 196.2,353.7 195.3,354.0 194.3,345.7 193.3,339.5 192.5,333.0 191.7,321.8 190.7,324.8 189.7,325.9 188.9,323.2 188.1,324.3 187.2,322.0 186.4,322.1 185.6,319.2 184.8,323.7 184.0,320.9 183.2,320.1 182.4,322.6 181.6,321.0 180.8,319.9 180.0,320.2 179.2,318.0 178.4,317.6 177.6,318.3 176.8,318.7 176.0,323.7 175.2,319.3 174.4,320.1 173.7,320.2 172.9,326.4 172.1,322.5 171.3,322.8 170.5,324.6 169.7,325.3 168.9,323.5 168.1,323.5 167.3,324.7 166.5,325.5 165.7,325.6 164.9,325.5 164.1,327.1 163.3,326.9 162.5,327.5 161.7,327.4 161.0,328.2 160.2,326.1 159.4,326.3 158.6,332.2 157.8,326.1 157.0,327.3 156.2,328.6 155.4,329.3 154.6,331.3 153.8,331.8 153.0,332.4 152.2,333.9 151.4,333.7 150.6,331.5 149.8,334.6 149.0,331.4 148.3,335.4 147.5,331.8 146.7,332.3 145.9,335.2 145.1,333.1 144.3,337.3 143.5,332.4 142.7,333.0 141.9,333.7 141.1,333.3 140.4,333.5 139.7,333.6 139.0,333.1 138.3,333.5 137.5,332.2 136.8,331.0 136.1,332.0 135.0,317.3" fill="#11a311" stroke="#11a311" stroke-width="0.35" stroke-linejoin="round"/>
<circle cx="135.5" cy="330.0" r="3" fill="#f6f6f6"/><path d="M135.5 327.7l2.2 2.3l-2.2 2.3l-2.2 -2.3z" fill="#0a18ff"/>
<circle cx="193.3" cy="347.5" r="3" fill="#f6f6f6"/><path d="M193.3 345.2l2.2 2.3l-2.2 2.3l-2.2 -2.3z" fill="#0a18ff"/>
<circle cx="194.4" cy="358.0" r="3" fill="#f6f6f6"/><path d="M194.4 355.7l2.2 2.3l-2.2 2.3l-2.2 -2.3z" fill="#0a18ff"/>
<circle cx="200.0" cy="368.9" r="3" fill="#f6f6f6"/><path d="M200.0 366.6l2.2 2.3l-2.2 2.3l-2.2 -2.3z" fill="#0a18ff"/>
<circle cx="255.5" cy="384.4" r="3" fill="#f6f6f6"/><path d="M255.5 382.1l2.2 2.3l-2.2 2.3l-2.2 -2.3z" fill="#0a18ff"/>
<circle cx="258.6" cy="391.4" r="3" fill="#f6f6f6"/><path d="M258.6 389.1l2.2 2.3l-2.2 2.3l-2.2 -2.3z" fill="#0a18ff"/>
<circle cx="274.4" cy="347.0" r="3" fill="#f6f6f6"/><path d="M274.4 344.7l2.2 2.3l-2.2 2.3l-2.2 -2.3z" fill="#ff1010"/>
<circle cx="301.4" cy="381.7" r="3" fill="#f6f6f6"/><path d="M301.4 379.4l2.2 2.3l-2.2 2.3l-2.2 -2.3z" fill="#0a18ff"/>
<circle cx="320.3" cy="380.3" r="3" fill="#f6f6f6"/><path d="M320.3 378.0l2.2 2.3l-2.2 2.3l-2.2 -2.3z" fill="#0a18ff"/>
<circle cx="370.4" cy="343.3" r="3" fill="#f6f6f6"/><path d="M370.4 341.0l2.2 2.3l-2.2 2.3l-2.2 -2.3z" fill="#ff1010"/>
<circle cx="451.6" cy="307.2" r="3" fill="#f6f6f6"/><path d="M451.6 304.9l2.2 2.3l-2.2 2.3l-2.2 -2.3z" fill="#ff1010"/>
</g>
<path d="M134.5 399.6V267.2H535.5V399.6Z" fill="none" stroke="#c4c4c4" stroke-width="1"/>
<line x1="135.20" y1="399.6" x2="135.20" y2="401.8" stroke="#d0d0d0" stroke-width="1"/>
<line x1="177.82" y1="399.6" x2="177.82" y2="401.8" stroke="#d0d0d0" stroke-width="1"/>
<line x1="220.44" y1="399.6" x2="220.44" y2="401.8" stroke="#d0d0d0" stroke-width="1"/>
<line x1="263.06" y1="399.6" x2="263.06" y2="401.8" stroke="#d0d0d0" stroke-width="1"/>
<line x1="305.68" y1="399.6" x2="305.68" y2="401.8" stroke="#d0d0d0" stroke-width="1"/>
<line x1="348.30" y1="399.6" x2="348.30" y2="401.8" stroke="#d0d0d0" stroke-width="1"/>
<line x1="390.92" y1="399.6" x2="390.92" y2="401.8" stroke="#d0d0d0" stroke-width="1"/>
<line x1="433.54" y1="399.6" x2="433.54" y2="401.8" stroke="#d0d0d0" stroke-width="1"/>
<line x1="476.16" y1="399.6" x2="476.16" y2="401.8" stroke="#d0d0d0" stroke-width="1"/>
<line x1="518.78" y1="399.6" x2="518.78" y2="401.8" stroke="#d0d0d0" stroke-width="1"/>
<text x="135.2" y="408.4" font-size="6.2" fill="#f2f2f2" text-anchor="start" >14 Jul 2025</text>
<text x="177.8" y="408.4" font-size="6.2" fill="#f2f2f2" text-anchor="start" >15 Jul 07:30</text>
<text x="220.4" y="408.4" font-size="6.2" fill="#f2f2f2" text-anchor="start" >15 Jul 23:35</text>
<text x="263.1" y="408.4" font-size="6.2" fill="#f2f2f2" text-anchor="start" >16 Jul 15:30</text>
<text x="305.7" y="408.4" font-size="6.2" fill="#f2f2f2" text-anchor="start" >17 Jul 07:30</text>
<text x="348.3" y="408.4" font-size="6.2" fill="#f2f2f2" text-anchor="start" >17 Jul 23:35</text>
<text x="390.9" y="408.4" font-size="6.2" fill="#f2f2f2" text-anchor="start" >18 Jul 15:30</text>
<text x="433.5" y="408.4" font-size="6.2" fill="#f2f2f2" text-anchor="start" >21 Jul 07:30</text>
<text x="476.2" y="408.4" font-size="6.2" fill="#f2f2f2" text-anchor="start" >21 Jul 23:35</text>
<text x="518.8" y="408.4" font-size="6.2" fill="#f2f2f2" text-anchor="start" >22 Jul 15:30</text>
<line x1="535.5" y1="288.6" x2="537.3" y2="288.6" stroke="#d0d0d0" stroke-width="1"/>
<text x="538.7" y="290.8" font-size="6.2" fill="#f2f2f2" text-anchor="start" >1.17370</text>
<line x1="535.5" y1="310.5" x2="537.3" y2="310.5" stroke="#d0d0d0" stroke-width="1"/>
<text x="538.7" y="312.7" font-size="6.2" fill="#f2f2f2" text-anchor="start" >1.17000</text>
<line x1="535.5" y1="332.7" x2="537.3" y2="332.7" stroke="#d0d0d0" stroke-width="1"/>
<text x="538.7" y="334.9" font-size="6.2" fill="#f2f2f2" text-anchor="start" >1.16640</text>
<line x1="535.5" y1="354.5" x2="537.3" y2="354.5" stroke="#d0d0d0" stroke-width="1"/>
<text x="538.7" y="356.7" font-size="6.2" fill="#f2f2f2" text-anchor="start" >1.16270</text>
<line x1="535.5" y1="376.7" x2="537.3" y2="376.7" stroke="#d0d0d0" stroke-width="1"/>
<text x="538.7" y="378.9" font-size="6.2" fill="#f2f2f2" text-anchor="start" >1.15900</text>
<line x1="535.5" y1="398.4" x2="537.3" y2="398.4" stroke="#d0d0d0" stroke-width="1"/>
<text x="538.7" y="400.6" font-size="6.2" fill="#f2f2f2" text-anchor="start" >1.15540</text>
<rect x="537.5" y="278.5" width="25.5" height="7.4" fill="#fff"/>
<text x="539.3" y="284.4" font-size="6.2" fill="#000" text-anchor="start" >1.17471</text>
<g clip-path="url(#cp33)">
<text x="139.0" y="269.7" font-size="6.2" fill="#f2f2f2" text-anchor="start" >#549621956 tp</text>
</g>
<text x="144.5" y="274.8" font-size="6.35" fill="#f2f2f2" text-anchor="start" >EURUSD,M30&#160; 1.17510 1.17522 1.17448 1.17471</text>
<path d="M137.2 271.4h4.4l-2.2 2.7z" fill="#f2f2f2"/>
<text x="139.0" y="279.4" font-size="6.2" fill="#f2f2f2" text-anchor="start" >#549621956 buy 0.02</text>
<text x="139.0" y="306.0" font-size="6.2" fill="#f2f2f2" text-anchor="start" >#549610035 sell 0.02</text>
<text x="139.0" y="342.0" font-size="6.2" fill="#f2f2f2" text-anchor="start" >#549592852 sell 0.02</text>
<text x="139.0" y="347.2" font-size="6.2" fill="#f2f2f2" text-anchor="start" >#549610035 tp</text>
<text x="139.0" y="347.2" font-size="6.2" fill="#f2f2f2" text-anchor="start" >#549584660 tp</text>
<text x="139.0" y="378.6" font-size="6.2" fill="#f2f2f2" text-anchor="start" >#549584560 sell 0.02</text>
<text x="522.7" y="275.0" font-size="6.2" fill="#f2f2f2" text-anchor="end" >Genisys FX</text>
<circle cx="527.3" cy="272.8" r="2.9" fill="none" stroke="#e8e8e8" stroke-width="0.8"/>
<path d="M525.9 274.4q1.4 -1.6 2.8 0" fill="none" stroke="#e8e8e8" stroke-width="0.7"/>
<rect x="525.8" y="271.4" width="1" height="1" fill="#e8e8e8"/><rect x="527.8" y="271.4" width="1" height="1" fill="#e8e8e8"/>
<rect x="578" y="264" width="433.5" height="149.1" fill="#000"/>
<rect x="578.0" y="264.7" width="433.5" height="149.1" fill="none" stroke="#5a5a5a" stroke-width="1"/>
<line x1="602.51" y1="267.2" x2="602.51" y2="399.6" stroke="#8a9aad" stroke-width="0.8" stroke-dasharray="1.6 2"/>
<line x1="623.82" y1="267.2" x2="623.82" y2="399.6" stroke="#8a9aad" stroke-width="0.8" stroke-dasharray="1.6 2"/>
<line x1="645.13" y1="267.2" x2="645.13" y2="399.6" stroke="#8a9aad" stroke-width="0.8" stroke-dasharray="1.6 2"/>
<line x1="666.44" y1="267.2" x2="666.44" y2="399.6" stroke="#8a9aad" stroke-width="0.8" stroke-dasharray="1.6 2"/>
<line x1="687.75" y1="267.2" x2="687.75" y2="399.6" stroke="#8a9aad" stroke-width="0.8" stroke-dasharray="1.6 2"/>
<line x1="709.06" y1="267.2" x2="709.06" y2="399.6" stroke="#8a9aad" stroke-width="0.8" stroke-dasharray="1.6 2"/>
<line x1="730.37" y1="267.2" x2="730.37" y2="399.6" stroke="#8a9aad" stroke-width="0.8" stroke-dasharray="1.6 2"/>
<line x1="751.68" y1="267.2" x2="751.68" y2="399.6" stroke="#8a9aad" stroke-width="0.8" stroke-dasharray="1.6 2"/>
<line x1="772.99" y1="267.2" x2="772.99" y2="399.6" stroke="#8a9aad" stroke-width="0.8" stroke-dasharray="1.6 2"/>
<line x1="794.30" y1="267.2" x2="794.30" y2="399.6" stroke="#8a9aad" stroke-width="0.8" stroke-dasharray="1.6 2"/>
<line x1="815.61" y1="267.2" x2="815.61" y2="399.6" stroke="#8a9aad" stroke-width="0.8" stroke-dasharray="1.6 2"/>
<line x1="836.92" y1="267.2" x2="836.92" y2="399.6" stroke="#8a9aad" stroke-width="0.8" stroke-dasharray="1.6 2"/>
<line x1="858.23" y1="267.2" x2="858.23" y2="399.6" stroke="#8a9aad" stroke-width="0.8" stroke-dasharray="1.6 2"/>
<line x1="879.54" y1="267.2" x2="879.54" y2="399.6" stroke="#8a9aad" stroke-width="0.8" stroke-dasharray="1.6 2"/>
<line x1="900.85" y1="267.2" x2="900.85" y2="399.6" stroke="#8a9aad" stroke-width="0.8" stroke-dasharray="1.6 2"/>
<line x1="922.16" y1="267.2" x2="922.16" y2="399.6" stroke="#8a9aad" stroke-width="0.8" stroke-dasharray="1.6 2"/>
<line x1="943.47" y1="267.2" x2="943.47" y2="399.6" stroke="#8a9aad" stroke-width="0.8" stroke-dasharray="1.6 2"/>
<line x1="964.78" y1="267.2" x2="964.78" y2="399.6" stroke="#8a9aad" stroke-width="0.8" stroke-dasharray="1.6 2"/>
<line x1="580.5" y1="288.6" x2="981.5" y2="288.6" stroke="#8a9aad" stroke-width="0.8" stroke-dasharray="1.6 2"/>
<line x1="580.5" y1="310.5" x2="981.5" y2="310.5" stroke="#8a9aad" stroke-width="0.8" stroke-dasharray="1.6 2"/>
<line x1="580.5" y1="332.6" x2="981.5" y2="332.6" stroke="#8a9aad" stroke-width="0.8" stroke-dasharray="1.6 2"/>
<line x1="580.5" y1="354.6" x2="981.5" y2="354.6" stroke="#8a9aad" stroke-width="0.8" stroke-dasharray="1.6 2"/>
<line x1="580.5" y1="376.7" x2="981.5" y2="376.7" stroke="#8a9aad" stroke-width="0.8" stroke-dasharray="1.6 2"/>
<line x1="580.5" y1="288.6" x2="977.5" y2="288.6" stroke="#177f17" stroke-width="1" stroke-dasharray="5.7 4.2 1.6 4.1"/>
<line x1="580.5" y1="324.4" x2="977.5" y2="324.4" stroke="#cc0c0c" stroke-width="1" stroke-dasharray="5.7 4.2 1.6 4.1"/>
<line x1="580.5" y1="331.7" x2="977.5" y2="331.7" stroke="#177f17" stroke-width="1" stroke-dasharray="5.7 4.2 1.6 4.1"/>
<line x1="580.5" y1="373.9" x2="977.5" y2="373.9" stroke="#177f17" stroke-width="1" stroke-dasharray="5.7 4.2 1.6 4.1"/>
<line x1="580.5" y1="392.0" x2="977.5" y2="392.0" stroke="#177f17" stroke-width="1" stroke-dasharray="5.7 4.2 1.6 4.1"/>
<line x1="580.5" y1="394.7" x2="977.5" y2="394.7" stroke="#8c97a4" stroke-width="1"/>
<clipPath id="cp44"><rect x="580.5" y="267.2" width="401.0" height="132.4"/></clipPath><g clip-path="url(#cp44)">
<circle cx="704.3" cy="290.0" r="4.5" fill="none" stroke="#9a8e84" stroke-width="3"/>
<circle cx="962.0" cy="376.0" r="4.5" fill="none" stroke="#9a8e84" stroke-width="3"/>
<circle cx="965.6" cy="392.0" r="4.5" fill="none" stroke="#9a8e84" stroke-width="3"/>
<polygon points="581.0,341.8 582.1,330.3 582.8,330.9 583.5,331.1 584.3,329.2 585.0,328.7 585.7,327.8 586.4,328.2 587.1,327.8 587.9,327.6 588.7,325.8 589.5,327.8 590.3,326.9 591.1,323.5 591.9,326.4 592.7,325.7 593.6,327.6 594.5,329.9 595.4,333.7 596.4,330.7 597.3,325.9 598.2,323.5 599.0,325.4 599.8,325.2 600.6,323.9 601.4,325.5 602.2,325.5 603.0,323.4 603.8,321.2 604.6,324.4 605.4,325.5 606.2,324.5 607.0,324.7 607.7,324.8 608.5,325.2 609.3,326.0 610.1,327.1 610.9,327.0 611.7,325.6 612.5,325.1 613.3,328.3 614.1,328.4 614.9,328.3 615.7,328.9 616.5,329.4 617.3,329.4 618.1,330.4 618.9,329.6 619.7,330.9 620.4,331.6 621.2,332.7 622.0,331.8 622.8,333.7 623.6,333.9 624.4,333.0 625.2,334.6 626.0,334.8 626.8,334.6 627.6,332.3 628.4,334.9 629.2,335.1 630.0,335.4 630.8,333.7 631.6,333.1 632.4,334.0 633.2,335.6 634.1,337.0 634.9,337.7 635.7,337.3 636.7,339.7 637.7,340.1 638.4,343.6 639.1,339.7 639.9,338.6 640.7,326.8 641.6,319.9 642.4,315.2 643.2,310.0 644.1,306.3 644.9,307.3 645.7,306.2 646.6,305.0 647.4,308.9 648.2,309.4 649.0,309.1 649.8,310.1 650.6,311.6 651.4,309.1 652.2,312.2 653.0,310.0 653.8,312.5 654.6,312.3 655.4,312.5 656.2,310.9 657.0,310.9 657.7,310.2 658.5,308.8 659.3,309.1 660.1,309.7 660.9,308.6 661.7,310.2 662.5,309.7 663.3,310.4 664.1,311.6 664.9,312.2 665.7,311.4 666.5,312.6 667.3,314.0 668.1,315.8 668.9,315.4 669.7,316.9 670.4,318.2 671.2,315.9 672.0,316.5 672.8,316.3 673.6,313.6 674.4,314.5 675.2,313.6 676.0,309.9 676.8,312.6 677.6,313.4 678.4,310.1 679.2,314.8 680.0,311.1 680.8,311.3 681.6,314.1 682.3,314.8 683.1,316.0 683.9,316.4 684.7,316.3 685.5,318.2 686.3,317.4 687.1,318.3 687.9,318.2 688.7,316.5 689.5,315.7 690.3,310.9 691.1,314.8 691.9,312.9 692.7,309.6 693.5,308.4 694.3,309.8 695.0,310.8 695.8,308.3 696.6,306.8 697.4,307.7 698.2,307.4 699.1,308.4 700.1,308.7 701.0,309.2 701.7,303.8 702.5,298.2 703.2,294.4 704.2,292.8 705.2,288.6 706.1,294.3 707.1,299.9 707.9,320.9 708.8,338.0 709.8,331.8 710.7,324.3 711.6,328.1 712.6,326.7 713.5,333.2 714.4,331.3 715.4,329.1 716.3,324.8 717.1,328.4 717.9,330.2 718.8,328.2 719.6,334.5 720.4,337.4 721.2,336.8 722.0,338.5 722.8,334.8 723.6,336.9 724.4,337.4 725.2,338.3 726.0,337.2 726.8,335.0 727.6,331.0 728.4,331.6 729.2,333.1 730.0,330.3 730.8,332.3 731.6,331.6 732.4,328.3 733.2,327.2 734.1,326.3 734.9,325.4 735.7,320.7 736.6,321.7 737.4,319.0 738.2,318.6 739.1,315.6 739.9,313.4 740.7,314.3 741.6,314.1 742.4,313.2 743.2,313.5 744.1,314.0 745.0,314.4 745.9,312.1 746.8,315.7 747.8,310.7 748.7,308.0 749.6,305.6 750.4,297.8 751.3,299.8 752.1,294.9 752.9,294.3 753.8,289.8 754.6,291.8 755.4,288.9 756.3,287.9 757.1,288.4 757.9,287.2 758.9,283.0 759.8,278.3 760.7,280.3 761.6,277.9 762.4,275.5 763.2,276.4 764.1,277.3 764.9,275.5 765.8,277.9 766.7,278.4 767.7,280.3 768.6,286.5 769.5,289.1 770.4,290.8 771.2,291.3 772.0,289.6 772.8,287.4 773.6,286.7 774.4,288.2 775.2,287.0 776.0,286.8 776.8,285.6 777.6,288.2 778.4,288.7 779.2,289.5 780.0,288.5 780.8,289.7 781.6,289.4 782.3,291.8 783.1,292.0 783.9,291.1 784.7,292.5 785.5,291.3 786.3,291.4 787.1,292.7 787.9,293.4 788.8,294.3 789.6,294.8 790.4,295.6 791.3,297.2 792.0,299.8 792.8,294.2 793.6,299.6 794.4,301.0 795.2,300.5 796.0,300.9 796.8,300.2 797.6,298.4 798.3,300.0 799.1,300.3 799.9,299.8 800.6,300.2 801.4,300.0 802.2,299.7 803.0,295.3 803.7,297.3 804.5,297.4 805.3,298.5 806.0,297.2 806.8,297.1 807.6,297.3 808.4,297.4 809.1,297.8 809.9,297.3 810.7,296.2 811.4,297.8 812.3,298.5 813.1,297.8 813.9,298.9 814.8,296.7 815.6,300.9 816.4,298.4 817.3,302.1 818.1,304.4 818.9,305.3 819.8,306.9 820.6,307.7 821.4,308.1 822.2,307.7 823.0,307.7 823.7,308.5 824.5,305.7 825.3,308.9 826.3,310.5 827.2,313.2 828.1,315.2 829.0,317.2 830.0,321.9 830.9,326.5 831.8,322.0 832.7,319.0 833.7,316.8 834.6,313.2 835.5,312.0 836.4,308.4 837.3,304.7 838.1,307.4 838.9,305.4 839.8,304.2 840.6,301.9 841.4,304.3 842.3,305.7 843.1,306.3 843.9,306.5 844.8,307.1 845.6,306.3 846.4,307.6 847.2,307.1 848.0,307.8 848.7,306.2 849.5,307.2 850.3,302.9 851.1,309.9 851.8,312.7 852.6,313.4 853.5,308.4 854.5,305.8 855.3,307.9 856.1,303.9 856.9,307.8 857.7,307.1 858.5,306.7 859.3,303.3 860.1,303.2 860.8,304.6 861.6,304.2 862.4,304.2 863.2,305.2 864.0,304.0 864.8,299.2 865.6,301.6 866.4,304.8 867.2,305.4 868.0,306.2 868.8,306.7 869.6,307.2 870.4,306.6 871.2,308.6 872.0,309.6 872.8,310.7 873.5,310.5 874.3,311.3 875.1,311.7 875.9,311.3 876.7,309.2 877.6,312.5 878.4,307.0 879.2,309.0 880.1,306.5 880.9,303.9 881.7,308.5 882.5,309.0 883.3,308.2 884.1,308.4 884.9,308.9 885.7,309.2 886.4,310.1 887.3,310.6 888.1,313.7 888.9,316.3 889.8,318.8 890.6,321.1 891.5,322.5 892.5,324.1 893.4,325.5 894.3,321.6 895.2,319.7 896.2,315.4 897.1,321.1 898.0,325.3 898.9,330.5 899.9,328.9 900.8,335.5 901.7,338.7 902.6,338.0 903.4,337.2 904.2,335.9 905.1,332.2 905.9,334.6 906.7,334.3 907.5,333.2 908.3,336.0 909.1,334.1 909.9,332.8 910.7,335.6 911.4,337.1 912.2,336.3 913.0,338.3 913.8,338.8 914.6,338.5 915.4,340.7 916.2,339.9 917.0,339.8 917.8,337.2 918.6,339.0 919.4,339.8 920.2,340.1 921.0,338.5 921.8,339.6 922.6,338.9 923.3,340.1 924.1,336.7 924.9,336.3 925.7,337.5 926.5,336.2 927.3,336.9 928.1,334.4 928.9,334.9 929.7,335.0 930.5,335.6 931.3,336.2 932.1,335.8 932.9,331.6 933.7,334.1 934.5,334.1 935.3,333.9 936.0,334.4 936.8,330.8 937.6,332.5 938.4,332.7 939.2,332.9 940.1,332.7 940.9,332.3 941.7,332.4 942.6,331.3 943.4,332.7 944.2,333.2 945.1,334.6 945.9,334.9 946.7,334.8 947.6,337.2 948.3,338.8 949.1,339.2 949.9,339.7 950.7,339.8 951.5,341.4 952.3,342.5 953.1,342.6 953.9,341.2 954.8,341.4 955.6,341.4 956.4,340.7 957.3,338.7 958.2,341.6 959.1,343.4 960.1,348.0 961.0,352.3 962.0,357.0 962.8,374.5 963.8,378.1 964.7,380.7 965.6,383.6 966.4,384.1 967.3,383.7 968.1,384.4 968.9,385.5 969.8,384.0 970.6,385.8 971.4,384.8 972.3,388.0 973.1,388.2 973.9,389.8 974.7,390.5 975.4,391.6 976.1,390.1 976.8,392.5 977.6,394.5 977.6,400.2 976.8,398.3 976.1,394.6 975.4,394.7 974.7,392.3 973.9,393.0 973.1,389.9 972.3,390.4 971.4,392.3 970.6,389.6 969.8,386.7 968.9,387.2 968.1,387.8 967.3,385.3 966.4,385.2 965.6,387.3 964.7,384.7 963.8,381.0 962.8,381.3 962.0,362.1 961.0,357.4 960.1,351.5 959.1,350.9 958.2,348.7 957.3,341.4 956.4,342.5 955.6,343.5 954.8,342.9 953.9,344.2 953.1,347.0 952.3,344.2 951.5,343.7 950.7,341.5 949.9,341.3 949.1,340.7 948.3,340.7 947.6,343.9 946.7,339.6 945.9,336.4 945.1,337.5 944.2,334.0 943.4,334.8 942.6,337.2 941.7,334.8 940.9,334.7 940.1,334.6 939.2,334.7 938.4,334.5 937.6,334.4 936.8,336.7 936.0,335.5 935.3,336.0 934.5,338.4 933.7,337.3 932.9,335.7 932.1,337.1 931.3,337.3 930.5,337.2 929.7,336.3 928.9,339.0 928.1,337.5 927.3,338.8 926.5,338.4 925.7,339.8 924.9,339.0 924.1,340.1 923.3,342.4 922.6,340.9 921.8,343.9 921.0,341.2 920.2,341.9 919.4,341.3 918.6,344.3 917.8,345.1 917.0,342.0 916.2,343.3 915.4,343.0 914.6,340.8 913.8,339.9 913.0,341.0 912.2,338.9 911.4,339.3 910.7,338.4 909.9,339.1 909.1,340.2 908.3,338.4 907.5,337.2 906.7,336.3 905.9,336.3 905.1,337.5 904.2,338.5 903.4,339.8 902.6,340.5 901.7,342.5 900.8,342.2 899.9,335.7 898.9,334.6 898.0,329.8 897.1,328.0 896.2,319.8 895.2,322.9 894.3,325.5 893.4,327.5 892.5,327.4 891.5,323.6 890.6,324.9 889.8,321.7 888.9,319.7 888.1,316.5 887.3,315.2 886.4,312.6 885.7,315.2 884.9,311.3 884.1,309.9 883.3,310.3 882.5,312.4 881.7,310.7 880.9,309.5 880.1,310.7 879.2,311.9 878.4,313.3 877.6,314.6 876.7,315.7 875.9,314.0 875.1,314.2 874.3,314.7 873.5,312.7 872.8,312.2 872.0,312.3 871.2,310.0 870.4,312.4 869.6,313.2 868.8,308.0 868.0,308.7 867.2,307.3 866.4,307.1 865.6,304.7 864.8,304.7 864.0,306.4 863.2,311.6 862.4,306.7 861.6,306.9 860.8,307.3 860.1,307.6 859.3,307.8 858.5,308.7 857.7,309.3 856.9,310.1 856.1,308.9 855.3,309.8 854.5,309.8 853.5,319.2 852.6,321.9 851.8,316.8 851.1,313.5 850.3,308.9 849.5,308.6 848.7,308.4 848.0,312.6 847.2,309.1 846.4,310.8 845.6,308.8 844.8,308.7 843.9,308.1 843.1,307.2 842.3,306.8 841.4,310.8 840.6,305.6 839.8,309.0 838.9,309.2 838.1,310.2 837.3,311.9 836.4,313.6 835.5,315.7 834.6,317.2 833.7,320.5 832.7,323.4 831.8,327.1 830.9,332.8 830.0,327.6 829.0,323.9 828.1,319.4 827.2,316.0 826.3,314.6 825.3,310.3 824.5,311.0 823.7,312.5 823.0,312.0 822.2,309.3 821.4,310.1 820.6,309.7 819.8,310.5 818.9,312.5 818.1,306.5 817.3,304.8 816.4,303.9 815.6,303.9 814.8,304.4 813.9,300.4 813.1,300.3 812.3,300.7 811.4,299.0 810.7,298.2 809.9,300.1 809.1,300.7 808.4,299.0 807.6,299.5 806.8,302.3 806.0,299.3 805.3,300.9 804.5,300.4 803.7,299.2 803.0,300.4 802.2,303.1 801.4,301.2 800.6,301.3 799.9,302.0 799.1,306.0 798.3,302.6 797.6,303.1 796.8,302.4 796.0,302.2 795.2,302.2 794.4,302.6 793.6,302.9 792.8,304.6 792.0,305.6 791.3,301.0 790.4,298.1 789.6,296.8 788.8,295.1 787.9,298.0 787.1,295.2 786.3,293.6 785.5,294.0 784.7,294.7 783.9,293.6 783.1,293.6 782.3,293.6 781.6,297.7 780.8,291.0 780.0,294.2 779.2,295.1 778.4,290.7 777.6,289.4 776.8,290.1 776.0,288.7 775.2,292.6 774.4,291.8 773.6,290.0 772.8,294.0 772.0,292.5 771.2,292.7 770.4,292.5 769.5,292.1 768.6,292.7 767.7,287.6 766.7,285.7 765.8,282.8 764.9,277.2 764.1,278.1 763.2,280.3 762.4,280.5 761.6,281.5 760.7,284.0 759.8,284.5 758.9,287.0 757.9,289.7 757.1,289.5 756.3,290.2 755.4,295.6 754.6,293.6 753.8,297.9 752.9,298.0 752.1,300.6 751.3,303.1 750.4,306.0 749.6,308.6 748.7,312.3 747.8,319.6 746.8,319.1 745.9,318.0 745.0,315.9 744.1,315.7 743.2,314.4 742.4,316.1 741.6,319.4 740.7,316.5 739.9,317.2 739.1,319.1 738.2,324.3 737.4,321.9 736.6,326.8 735.7,325.2 734.9,327.8 734.1,327.9 733.2,330.2 732.4,331.5 731.6,334.0 730.8,337.9 730.0,334.5 729.2,335.3 728.4,335.9 727.6,337.2 726.8,338.2 726.0,339.1 725.2,340.4 724.4,344.0 723.6,338.9 722.8,339.6 722.0,340.6 721.2,340.7 720.4,341.8 719.6,337.4 718.8,335.8 717.9,333.4 717.1,332.7 716.3,329.9 715.4,332.3 714.4,334.8 713.5,336.6 712.6,334.0 711.6,331.1 710.7,329.2 709.8,336.8 708.8,342.8 707.9,326.0 707.1,306.4 706.1,299.0 705.2,293.2 704.2,297.5 703.2,304.4 702.5,304.3 701.7,308.6 701.0,315.7 700.1,311.3 699.1,309.8 698.2,309.1 697.4,310.2 696.6,310.1 695.8,311.6 695.0,311.7 694.3,315.5 693.5,312.9 692.7,314.7 691.9,315.1 691.1,316.3 690.3,316.6 689.5,321.4 688.7,322.6 687.9,320.6 687.1,322.0 686.3,320.0 685.5,320.1 684.7,319.1 683.9,318.5 683.1,319.0 682.3,316.8 681.6,316.9 680.8,315.4 680.0,316.2 679.2,317.4 678.4,314.8 677.6,315.7 676.8,315.1 676.0,316.6 675.2,316.2 674.4,316.6 673.6,320.9 672.8,317.7 672.0,317.9 671.2,321.0 670.4,319.3 669.7,320.3 668.9,316.6 668.1,318.5 667.3,317.0 666.5,316.2 665.7,313.4 664.9,314.0 664.1,314.9 663.3,312.2 662.5,311.6 661.7,313.5 660.9,312.9 660.1,312.8 659.3,310.1 658.5,311.0 657.7,314.2 657.0,313.3 656.2,313.9 655.4,314.9 654.6,314.0 653.8,313.7 653.0,314.3 652.2,315.6 651.4,312.9 650.6,313.0 649.8,312.8 649.0,311.4 648.2,314.3 647.4,315.3 646.6,309.7 645.7,309.5 644.9,311.3 644.1,310.7 643.2,314.9 642.4,319.7 641.6,324.0 640.7,333.2 639.9,343.9 639.1,345.8 638.4,345.7 637.7,347.1 636.7,344.9 635.7,339.6 634.9,339.2 634.1,339.9 633.2,341.6 632.4,336.4 631.6,335.1 630.8,336.3 630.0,337.6 629.2,336.4 628.4,337.2 627.6,337.8 626.8,336.1 626.0,336.8 625.2,336.2 624.4,335.9 623.6,337.9 622.8,335.7 622.0,335.0 621.2,334.5 620.4,338.5 619.7,332.5 618.9,332.1 618.1,332.5 617.3,331.3 616.5,330.7 615.7,331.3 614.9,329.9 614.1,331.4 613.3,330.0 612.5,329.6 611.7,327.5 610.9,328.5 610.1,329.2 609.3,327.7 608.5,326.1 607.7,329.7 607.0,326.3 606.2,327.0 605.4,328.9 604.6,326.7 603.8,326.1 603.0,325.7 602.2,328.0 601.4,327.1 600.6,328.4 599.8,328.9 599.0,326.6 598.2,327.9 597.3,334.2 596.4,335.0 595.4,337.6 594.5,333.6 593.6,330.8 592.7,328.0 591.9,327.7 591.1,328.7 590.3,331.2 589.5,329.6 588.7,333.6 587.9,329.1 587.1,329.5 586.4,329.8 585.7,332.2 585.0,331.2 584.3,332.2 583.5,335.4 582.8,332.7 582.1,337.3 581.0,347.3" fill="#11a311" stroke="#11a311" stroke-width="0.35" stroke-linejoin="round"/>
<circle cx="704.3" cy="290.0" r="3" fill="#f6f6f6"/><path d="M704.3 287.7l2.2 2.3l-2.2 2.3l-2.2 -2.3z" fill="#ff1010"/>
<circle cx="962.0" cy="376.0" r="3" fill="#f6f6f6"/><path d="M962.0 373.7l2.2 2.3l-2.2 2.3l-2.2 -2.3z" fill="#0a18ff"/>
<circle cx="965.6" cy="392.0" r="3" fill="#f6f6f6"/><path d="M965.6 389.7l2.2 2.3l-2.2 2.3l-2.2 -2.3z" fill="#0a18ff"/>
</g>
<path d="M580.5 399.6V267.2H981.5V399.6Z" fill="none" stroke="#c4c4c4" stroke-width="1"/>
<line x1="581.20" y1="399.6" x2="581.20" y2="401.8" stroke="#d0d0d0" stroke-width="1"/>
<line x1="623.82" y1="399.6" x2="623.82" y2="401.8" stroke="#d0d0d0" stroke-width="1"/>
<line x1="666.44" y1="399.6" x2="666.44" y2="401.8" stroke="#d0d0d0" stroke-width="1"/>
<line x1="709.06" y1="399.6" x2="709.06" y2="401.8" stroke="#d0d0d0" stroke-width="1"/>
<line x1="751.68" y1="399.6" x2="751.68" y2="401.8" stroke="#d0d0d0" stroke-width="1"/>
<line x1="794.30" y1="399.6" x2="794.30" y2="401.8" stroke="#d0d0d0" stroke-width="1"/>
<line x1="836.92" y1="399.6" x2="836.92" y2="401.8" stroke="#d0d0d0" stroke-width="1"/>
<line x1="879.54" y1="399.6" x2="879.54" y2="401.8" stroke="#d0d0d0" stroke-width="1"/>
<line x1="922.16" y1="399.6" x2="922.16" y2="401.8" stroke="#d0d0d0" stroke-width="1"/>
<line x1="964.78" y1="399.6" x2="964.78" y2="401.8" stroke="#d0d0d0" stroke-width="1"/>
<text x="581.2" y="408.4" font-size="6.2" fill="#f2f2f2" text-anchor="start" >14 Jul 2025</text>
<text x="623.8" y="408.4" font-size="6.2" fill="#f2f2f2" text-anchor="start" >15 Jul 07:30</text>
<text x="666.4" y="408.4" font-size="6.2" fill="#f2f2f2" text-anchor="start" >15 Jul 23:35</text>
<text x="709.1" y="408.4" font-size="6.2" fill="#f2f2f2" text-anchor="start" >16 Jul 15:30</text>
<text x="751.7" y="408.4" font-size="6.2" fill="#f2f2f2" text-anchor="start" >17 Jul 07:30</text>
<text x="794.3" y="408.4" font-size="6.2" fill="#f2f2f2" text-anchor="start" >17 Jul 23:35</text>
<text x="836.9" y="408.4" font-size="6.2" fill="#f2f2f2" text-anchor="start" >18 Jul 15:30</text>
<text x="879.5" y="408.4" font-size="6.2" fill="#f2f2f2" text-anchor="start" >21 Jul 07:30</text>
<text x="922.2" y="408.4" font-size="6.2" fill="#f2f2f2" text-anchor="start" >21 Jul 23:35</text>
<text x="964.8" y="408.4" font-size="6.2" fill="#f2f2f2" text-anchor="start" >22 Jul 15:30</text>
<line x1="981.5" y1="288.6" x2="983.3" y2="288.6" stroke="#d0d0d0" stroke-width="1"/>
<text x="984.7" y="290.8" font-size="6.2" fill="#f2f2f2" text-anchor="start" >1.37540</text>
<line x1="981.5" y1="310.5" x2="983.3" y2="310.5" stroke="#d0d0d0" stroke-width="1"/>
<text x="984.7" y="312.7" font-size="6.2" fill="#f2f2f2" text-anchor="start" >1.37230</text>
<line x1="981.5" y1="332.7" x2="983.3" y2="332.7" stroke="#d0d0d0" stroke-width="1"/>
<text x="984.7" y="334.9" font-size="6.2" fill="#f2f2f2" text-anchor="start" >1.36920</text>
<line x1="981.5" y1="354.5" x2="983.3" y2="354.5" stroke="#d0d0d0" stroke-width="1"/>
<text x="984.7" y="356.7" font-size="6.2" fill="#f2f2f2" text-anchor="start" >1.36610</text>
<line x1="981.5" y1="376.7" x2="983.3" y2="376.7" stroke="#d0d0d0" stroke-width="1"/>
<text x="984.7" y="378.9" font-size="6.2" fill="#f2f2f2" text-anchor="start" >1.36300</text>
<line x1="981.5" y1="398.6" x2="983.3" y2="398.6" stroke="#d0d0d0" stroke-width="1"/>
<text x="984.7" y="400.8" font-size="6.2" fill="#f2f2f2" text-anchor="start" >1.35990</text>
<rect x="983.5" y="391.0" width="25.5" height="7.4" fill="#fff"/>
<text x="985.3" y="396.9" font-size="6.2" fill="#000" text-anchor="start" >1.36050</text>
<g clip-path="url(#cp44)">
</g>
<text x="590.5" y="274.8" font-size="6.35" fill="#f2f2f2" text-anchor="start" >USDCAD,M30&#160; 1.36037 1.36053 1.36020 1.36050</text>
<path d="M583.2 271.4h4.4l-2.2 2.7z" fill="#f2f2f2"/>
<text x="585.0" y="287.2" font-size="6.2" fill="#f2f2f2" text-anchor="start" >#549587117 buy 0.02</text>
<text x="585.0" y="322.8" font-size="6.2" fill="#f2f2f2" text-anchor="start" >#549592852 tp</text>
<text x="585.0" y="322.8" font-size="6.2" fill="#f2f2f2" text-anchor="start" >#549588117 tp</text>
<text x="585.0" y="328.8" font-size="6.2" fill="#f2f2f2" text-anchor="start" >#549604921 buy 0.02</text>
<text x="585.0" y="372.6" font-size="6.2" fill="#f2f2f2" text-anchor="start" >#549620582 buy 0.02</text>
<text x="585.0" y="390.6" font-size="6.2" fill="#f2f2f2" text-anchor="start" >#549622233 sell 0.02</text>
<text x="968.7" y="275.0" font-size="6.2" fill="#f2f2f2" text-anchor="end" >Genisys FX</text>
<circle cx="973.3" cy="272.8" r="2.9" fill="none" stroke="#e8e8e8" stroke-width="0.8"/>
<path d="M971.9 274.4q1.4 -1.6 2.8 0" fill="none" stroke="#e8e8e8" stroke-width="0.7"/>
<rect x="971.8" y="271.4" width="1" height="1" fill="#e8e8e8"/><rect x="973.8" y="271.4" width="1" height="1" fill="#e8e8e8"/>
</svg>
<div class="a" id="ctabs">
<div class="a tabsel" style="left:65px;top:0;width:59px;height:13px"></div>
<div class="t g" style="left:12.5px;top:1.4px;font-size:7.6px;letter-spacing:-0.32px">EURUSD,M30</div>
<div class="t " style="left:73.5px;top:1.4px;font-size:7.6px;letter-spacing:-0.32px">EURUSD,M30</div>
<div class="t g" style="left:135px;top:1.4px;font-size:7.6px;letter-spacing:-0.1px">USDCAD,M30</div>
<div class="t g" style="left:199px;top:1.4px;font-size:7.6px;letter-spacing:-0.1px">USDCAD,M30</div>
<div class="a" style="left:190.5px;top:3px;width:1px;height:8px;background:#8a8a8a"></div>
<div class="a" style="left:254.5px;top:3px;width:1px;height:8px;background:#8a8a8a"></div>
<svg style="left:877px;top:1.500px" width="20" height="8"><path d="M4 1.5l-2.5 2.5l2.5 2.5zM14.5 1.5l2.5 2.5l-2.5 2.5z" fill="#9a9a9a"/></svg>
</div>
<div class="a" id="term">
<div class="a" style="left:0;top:10px;width:9.5px;height:75px;background:linear-gradient(90deg,#a9c4e4,#9cb9dc)"></div>
<svg style="left:1.5px;top:2.5px" width="6" height="6"><path d="M.8 .8l3.6 3.6m0 -3.6l-3.6 3.6" stroke="#111" stroke-width="1.2"/></svg>
<div class="t" style="left:-9.700px;top:65.300px;width:30px;transform:rotate(-90deg);font-size:7.200px;color:#1a2a42;letter-spacing:.05px;-webkit-text-stroke:.35px">Terminal</div>
<div class="a" style="left:10.5px;top:1px;width:1000px;height:57px;background:#fff"></div>
<div class="t " style="left:15.0px;top:4.2px;letter-spacing:-.1px">Order</div>
<div class="t " style="left:98.8px;top:4.2px;width:145.7px;text-align:right;letter-spacing:-.1px">Time</div>
<div class="t " style="left:249px;top:4.2px;width:63.0px;text-align:right;letter-spacing:-.1px">Type</div>
<div class="t " style="left:316.5px;top:4.2px;width:50.0px;text-align:right;letter-spacing:-.1px">Size</div>
<div class="t " style="left:371px;top:4.2px;width:63.80000000000001px;text-align:right;letter-spacing:-.1px">Symbol</div>
<div class="t " style="left:439.3px;top:4.2px;width:63.599999999999966px;text-align:right;letter-spacing:-.1px">Price</div>
<div class="t " style="left:507.4px;top:4.2px;width:63.39999999999998px;text-align:right;letter-spacing:-.1px">S / L</div>
<div class="t " style="left:575.3px;top:4.2px;width:63.80000000000007px;text-align:right;letter-spacing:-.1px">T / P</div>
<div class="t " style="left:643.6px;top:4.2px;width:145.39999999999998px;text-align:right;letter-spacing:-.1px">Time</div>
<div class="t " style="left:793.5px;top:4.2px;width:63.0px;text-align:right;letter-spacing:-.1px">Price</div>
<div class="t " style="left:861px;top:4.2px;width:63.5px;text-align:right;letter-spacing:-.1px">Swap</div>
<div class="t " style="left:929px;top:4.2px;width:77.0px;text-align:right;letter-spacing:-.1px">Profit</div>
<div class="t " style="left:42.5px;top:4.2px;color:#999;font-size:6px">/</div>
<div class="a" style="left:98.8px;top:1px;width:1px;height:57px;background:#e3e3e3"></div>
<div class="a" style="left:249px;top:1px;width:1px;height:57px;background:#e3e3e3"></div>
<div class="a" style="left:316.5px;top:1px;width:1px;height:57px;background:#e3e3e3"></div>
<div class="a" style="left:371px;top:1px;width:1px;height:57px;background:#e3e3e3"></div>
<div class="a" style="left:439.3px;top:1px;width:1px;height:57px;background:#e3e3e3"></div>
<div class="a" style="left:507.4px;top:1px;width:1px;height:57px;background:#e3e3e3"></div>
<div class="a" style="left:575.3px;top:1px;width:1px;height:57px;background:#e3e3e3"></div>
<div class="a" style="left:643.6px;top:1px;width:1px;height:57px;background:#e3e3e3"></div>
<div class="a" style="left:793.5px;top:1px;width:1px;height:57px;background:#e3e3e3"></div>
<div class="a" style="left:861px;top:1px;width:1px;height:57px;background:#e3e3e3"></div>
<div class="a" style="left:929px;top:1px;width:1px;height:57px;background:#e3e3e3"></div>
<div class="a" style="left:10.5px;top:17.2px;width:1000px;height:13.2px;background:#fff;border-top:1px solid #e4e4e4"></div>
<div class="a" style="left:98.8px;top:17.2px;width:1px;height:13.2px;background:#dcdcdc"></div>
<div class="a" style="left:249px;top:17.2px;width:1px;height:13.2px;background:#dcdcdc"></div>
<div class="a" style="left:316.5px;top:17.2px;width:1px;height:13.2px;background:#dcdcdc"></div>
<div class="a" style="left:371px;top:17.2px;width:1px;height:13.2px;background:#dcdcdc"></div>
<div class="a" style="left:439.3px;top:17.2px;width:1px;height:13.2px;background:#dcdcdc"></div>
<div class="a" style="left:507.4px;top:17.2px;width:1px;height:13.2px;background:#dcdcdc"></div>
<div class="a" style="left:575.3px;top:17.2px;width:1px;height:13.2px;background:#dcdcdc"></div>
<div class="a" style="left:643.6px;top:17.2px;width:1px;height:13.2px;background:#dcdcdc"></div>
<div class="a" style="left:793.5px;top:17.2px;width:1px;height:13.2px;background:#dcdcdc"></div>
<div class="a" style="left:861px;top:17.2px;width:1px;height:13.2px;background:#dcdcdc"></div>
<div class="a" style="left:929px;top:17.2px;width:1px;height:13.2px;background:#dcdcdc"></div>
<div class="a" style="left:576.5px;top:18.2px;width:66px;height:12.2px;background:#5de65d"></div>
<svg style="left:12.5px;top:18.9px" width="10" height="10" viewBox="0 0 10 10"><path d="M.8 .6h4.600l2 2v6.200h-6.600z" fill="#fff" stroke="#6c7682" stroke-width=".8"/><path d="M5.400 .6v2h2" fill="none" stroke="#6c7682" stroke-width=".7"/><circle cx="6.400" cy="7.400" r="2.100" fill="#1e8fe6"/></svg>
<div class="t " style="left:25.7px;top:18.599999999999998px;letter-spacing:-.05px">549611899</div>
<div class="t " style="left:98.8px;top:18.599999999999998px;width:146.89999999999998px;text-align:right;letter-spacing:-.12px">2025.07.21 18:27:53</div>
<div class="t " style="left:249px;top:18.599999999999998px;width:64.2px;text-align:right;letter-spacing:-.12px">buy</div>
<div class="t " style="left:316.5px;top:18.599999999999998px;width:51.2px;text-align:right;letter-spacing:-.12px">0.02</div>
<div class="t " style="left:371px;top:18.599999999999998px;width:65.00000000000001px;text-align:right;letter-spacing:-.12px">eurusd</div>
<div class="t " style="left:439.3px;top:18.599999999999998px;width:64.79999999999997px;text-align:right;letter-spacing:-.12px">1.16949</div>
<div class="t " style="left:507.4px;top:18.599999999999998px;width:64.59999999999998px;text-align:right;letter-spacing:-.12px">0.66949</div>
<div class="t " style="left:575.3px;top:18.599999999999998px;width:65.00000000000007px;text-align:right;letter-spacing:-.12px">1.17099</div>
<div class="t " style="left:643.6px;top:18.599999999999998px;width:146.59999999999997px;text-align:right;letter-spacing:-.12px">2025.07.22 14:48:07</div>
<div class="t " style="left:793.5px;top:18.599999999999998px;width:64.2px;text-align:right;letter-spacing:-.12px">1.17099</div>
<div class="t " style="left:861px;top:18.599999999999998px;width:64.7px;text-align:right;letter-spacing:-.12px">-0.15</div>
<div class="t " style="left:929px;top:18.599999999999998px;width:78.2px;text-align:right;letter-spacing:-.12px">2.56</div>
<div class="a" style="left:10.5px;top:30.4px;width:1000px;height:13.2px;background:#ebebeb;border-top:1px solid #e4e4e4"></div>
<div class="a" style="left:98.8px;top:30.4px;width:1px;height:13.2px;background:#dcdcdc"></div>
<div class="a" style="left:249px;top:30.4px;width:1px;height:13.2px;background:#dcdcdc"></div>
<div class="a" style="left:316.5px;top:30.4px;width:1px;height:13.2px;background:#dcdcdc"></div>
<div class="a" style="left:371px;top:30.4px;width:1px;height:13.2px;background:#dcdcdc"></div>
<div class="a" style="left:439.3px;top:30.4px;width:1px;height:13.2px;background:#dcdcdc"></div>
<div class="a" style="left:507.4px;top:30.4px;width:1px;height:13.2px;background:#dcdcdc"></div>
<div class="a" style="left:575.3px;top:30.4px;width:1px;height:13.2px;background:#dcdcdc"></div>
<div class="a" style="left:643.6px;top:30.4px;width:1px;height:13.2px;background:#dcdcdc"></div>
<div class="a" style="left:793.5px;top:30.4px;width:1px;height:13.2px;background:#dcdcdc"></div>
<div class="a" style="left:861px;top:30.4px;width:1px;height:13.2px;background:#dcdcdc"></div>
<div class="a" style="left:929px;top:30.4px;width:1px;height:13.2px;background:#dcdcdc"></div>
<div class="a" style="left:576.5px;top:31.4px;width:66px;height:12.2px;background:#5de65d"></div>
<svg style="left:12.5px;top:32.1px" width="10" height="10" viewBox="0 0 10 10"><path d="M.8 .6h4.600l2 2v6.200h-6.600z" fill="#fff" stroke="#6c7682" stroke-width=".8"/><path d="M5.400 .6v2h2" fill="none" stroke="#6c7682" stroke-width=".7"/><circle cx="6.400" cy="7.400" r="2.100" fill="#e8491c"/></svg>
<div class="t " style="left:25.7px;top:31.799999999999997px;letter-spacing:-.05px">549620968</div>
<div class="t " style="left:98.8px;top:31.799999999999997px;width:146.89999999999998px;text-align:right;letter-spacing:-.12px">2025.07.22 15:10:31</div>
<div class="t " style="left:249px;top:31.799999999999997px;width:64.2px;text-align:right;letter-spacing:-.12px">sell</div>
<div class="t " style="left:316.5px;top:31.799999999999997px;width:51.2px;text-align:right;letter-spacing:-.12px">0.02</div>
<div class="t " style="left:371px;top:31.799999999999997px;width:65.00000000000001px;text-align:right;letter-spacing:-.12px">usdcad</div>
<div class="t " style="left:439.3px;top:31.799999999999997px;width:64.79999999999997px;text-align:right;letter-spacing:-.12px">1.36304</div>
<div class="t " style="left:507.4px;top:31.799999999999997px;width:64.59999999999998px;text-align:right;letter-spacing:-.12px">1.86304</div>
<div class="t " style="left:575.3px;top:31.799999999999997px;width:65.00000000000007px;text-align:right;letter-spacing:-.12px">1.36154</div>
<div class="t " style="left:643.6px;top:31.799999999999997px;width:146.59999999999997px;text-align:right;letter-spacing:-.12px">2025.07.22 16:05:50</div>
<div class="t " style="left:793.5px;top:31.799999999999997px;width:64.2px;text-align:right;letter-spacing:-.12px">1.36154</div>
<div class="t " style="left:861px;top:31.799999999999997px;width:64.7px;text-align:right;letter-spacing:-.12px">0.00</div>
<div class="t " style="left:929px;top:31.799999999999997px;width:78.2px;text-align:right;letter-spacing:-.12px">1.88</div>
<div class="a" style="left:10.5px;top:43.6px;width:1000px;height:13.2px;background:#fff;border-top:1px solid #e4e4e4"></div>
<div class="a" style="left:98.8px;top:43.6px;width:1px;height:13.2px;background:#dcdcdc"></div>
<div class="a" style="left:249px;top:43.6px;width:1px;height:13.2px;background:#dcdcdc"></div>
<div class="a" style="left:316.5px;top:43.6px;width:1px;height:13.2px;background:#dcdcdc"></div>
<div class="a" style="left:371px;top:43.6px;width:1px;height:13.2px;background:#dcdcdc"></div>
<div class="a" style="left:439.3px;top:43.6px;width:1px;height:13.2px;background:#dcdcdc"></div>
<div class="a" style="left:507.4px;top:43.6px;width:1px;height:13.2px;background:#dcdcdc"></div>
<div class="a" style="left:575.3px;top:43.6px;width:1px;height:13.2px;background:#dcdcdc"></div>
<div class="a" style="left:643.6px;top:43.6px;width:1px;height:13.2px;background:#dcdcdc"></div>
<div class="a" style="left:793.5px;top:43.6px;width:1px;height:13.2px;background:#dcdcdc"></div>
<div class="a" style="left:861px;top:43.6px;width:1px;height:13.2px;background:#dcdcdc"></div>
<div class="a" style="left:929px;top:43.6px;width:1px;height:13.2px;background:#dcdcdc"></div>
<div class="a" style="left:576.5px;top:44.6px;width:66px;height:12.2px;background:#5de65d"></div>
<svg style="left:12.5px;top:45.3px" width="10" height="10" viewBox="0 0 10 10"><path d="M.8 .6h4.600l2 2v6.200h-6.600z" fill="#fff" stroke="#6c7682" stroke-width=".8"/><path d="M5.400 .6v2h2" fill="none" stroke="#6c7682" stroke-width=".7"/><circle cx="6.400" cy="7.400" r="2.100" fill="#1e8fe6"/></svg>
<div class="t " style="left:25.7px;top:44.99999999999999px;letter-spacing:-.05px">549621011</div>
<div class="t " style="left:98.8px;top:44.99999999999999px;width:146.89999999999998px;text-align:right;letter-spacing:-.12px">2025.07.22 15:12:15</div>
<div class="t " style="left:249px;top:44.99999999999999px;width:64.2px;text-align:right;letter-spacing:-.12px">buy</div>
<div class="t " style="left:316.5px;top:44.99999999999999px;width:51.2px;text-align:right;letter-spacing:-.12px">0.02</div>
<div class="t " style="left:371px;top:44.99999999999999px;width:65.00000000000001px;text-align:right;letter-spacing:-.12px">eurusd</div>
<div class="t " style="left:439.3px;top:44.99999999999999px;width:64.79999999999997px;text-align:right;letter-spacing:-.12px">1.17272</div>
<div class="t " style="left:507.4px;top:44.99999999999999px;width:64.59999999999998px;text-align:right;letter-spacing:-.12px">0.67272</div>
<div class="t " style="left:575.3px;top:44.99999999999999px;width:65.00000000000007px;text-align:right;letter-spacing:-.12px">1.17422</div>
<div class="t " style="left:643.6px;top:44.99999999999999px;width:146.59999999999997px;text-align:right;letter-spacing:-.12px">2025.07.22 15:37:18</div>
<div class="t " style="left:793.5px;top:44.99999999999999px;width:64.2px;text-align:right;letter-spacing:-.12px">1.17422</div>
<div class="t " style="left:861px;top:44.99999999999999px;width:64.7px;text-align:right;letter-spacing:-.12px">0.00</div>
<div class="t " style="left:929px;top:44.99999999999999px;width:78.2px;text-align:right;letter-spacing:-.12px">2.55</div>
<div class="a" style="left:10.5px;top:57px;width:1000px;height:13px;background:#c9c9c9"></div>
<svg style="left:15px;top:60.5px" width="7" height="7"><circle cx="3.2" cy="3.2" r="2.4" fill="#d6d6d6" stroke="#9a9a9a" stroke-width=".9"/></svg>
<div class="t " style="left:24.5px;top:59px;font-weight:bold;font-size:8px;letter-spacing:-.1px">Profit/Loss: 119.68&#160; Credit: 0.00&#160; Deposit: 0.00&#160; Withdrawal: 0.00</div>
<div class="t " style="left:929px;top:59px;width:78px;text-align:right;font-weight:bold;font-size:8px;letter-spacing:-.1px">119.68</div>
<div class="a" style="left:1010.5px;top:1px;width:12px;height:69px;background:#f0f0f0"></div>
<div class="a" style="left:1011.5px;top:48px;width:9px;height:11px;background:#c4c4c4"></div>
<svg style="left:1013px;top:4.5px" width="7" height="5" viewBox="0 0 7 5"><path d="M.7 4L3.3 1.3L5.9 4" fill="none" stroke="#333" stroke-width="1.1"/></svg>
<svg style="left:1013px;top:62px" width="7" height="5" viewBox="0 0 7 5"><path d="M.7 1L3.3 3.7L5.9 1" fill="none" stroke="#333" stroke-width="1.1"/></svg>
<div class="a" style="left:10.5px;top:70px;width:1013px;height:1px;background:#6d6d6d"></div>
<div class="a tabsel" style="left:90px;top:70px;width:71px;height:13px;border-top:0"></div>
<div class="t g" style="left:18.5px;top:72.6px;font-size:7.7px;letter-spacing:-.08px">Trade</div>
<div class="t g" style="left:52px;top:72.6px;font-size:7.7px;letter-spacing:-.08px">Exposure</div>
<div class="t " style="left:96.3px;top:72.6px;font-size:8px;letter-spacing:.12px">Account History</div>
<div class="t g" style="left:167.5px;top:72.6px;font-size:7.7px;letter-spacing:-.08px">News</div>
<div class="t g" style="left:200px;top:72.6px;font-size:7.7px;letter-spacing:-.08px">Alerts</div>
<div class="t g" style="left:233.5px;top:72.6px;font-size:7.7px;letter-spacing:-.08px">Mailbox</div>
<div class="t g" style="left:279.3px;top:72.6px;font-size:7.7px;letter-spacing:-.08px">Market</div>
<div class="t g" style="left:325.5px;top:72.6px;font-size:7.7px;letter-spacing:-.08px">Signals</div>
<div class="t g" style="left:363px;top:72.6px;font-size:7.7px;letter-spacing:-.08px">Articles</div>
<div class="t g" style="left:417px;top:72.6px;font-size:7.7px;letter-spacing:-.08px">Code Base</div>
<div class="t g" style="left:467.5px;top:72.6px;font-size:7.7px;letter-spacing:-.08px">Experts</div>
<div class="t g" style="left:505px;top:72.6px;font-size:7.7px;letter-spacing:-.08px">Journal</div>
<div class="a" style="left:45.5px;top:74px;width:1px;height:8px;background:#8a8a8a"></div>
<div class="a" style="left:193.5px;top:74px;width:1px;height:8px;background:#8a8a8a"></div>
<div class="a" style="left:226.5px;top:74px;width:1px;height:8px;background:#8a8a8a"></div>
<div class="a" style="left:272.5px;top:74px;width:1px;height:8px;background:#8a8a8a"></div>
<div class="a" style="left:318.5px;top:74px;width:1px;height:8px;background:#8a8a8a"></div>
<div class="a" style="left:356px;top:74px;width:1px;height:8px;background:#8a8a8a"></div>
<div class="a" style="left:410px;top:74px;width:1px;height:8px;background:#8a8a8a"></div>
<div class="a" style="left:460.5px;top:74px;width:1px;height:8px;background:#8a8a8a"></div>
<div class="a" style="left:498px;top:74px;width:1px;height:8px;background:#8a8a8a"></div>
<div class="a" style="left:537.5px;top:74px;width:1px;height:8px;background:#8a8a8a"></div>
<div class="t " style="left:262px;top:76.2px;font-size:6px;color:#e02020">6</div>
<div class="t " style="left:305.5px;top:76.2px;font-size:6px;color:#e02020">97</div>
<div class="t " style="left:391px;top:76.2px;font-size:6px;color:#e02020">1964</div>
</div>
<div class="a" id="status">
<div class="t " style="left:2px;top:4.1px;font-size:7.7px;letter-spacing:-.14px">For Help, press F1</div>
<div class="t " style="left:566px;top:4.1px;font-size:7.5px;letter-spacing:-0.03px">Default</div>
<div class="t " style="left:643.5px;top:4.1px;font-size:7.5px;letter-spacing:-0.2px">2025.07.17 05:00</div>
<div class="t " style="left:710.5px;top:4.1px;font-size:7.5px;letter-spacing:-0.03px">O: 1.16239</div>
<div class="t " style="left:758.5px;top:4.1px;font-size:7.5px;letter-spacing:-0.03px">H: 1.16270</div>
<div class="t " style="left:806px;top:4.1px;font-size:7.5px;letter-spacing:-0.03px">L: 1.16220</div>
<div class="t " style="left:852px;top:4.1px;font-size:7.5px;letter-spacing:-0.03px">C: 1.16251</div>
<div class="t " style="left:897.5px;top:4.1px;font-size:7.5px;letter-spacing:-0.03px">V: 891</div>
<div class="t " style="left:960px;top:4.1px;font-size:7.5px;letter-spacing:-0.03px">-1770400/1072 kb</div>
<div class="a" style="left:561px;top:2.5px;width:1px;height:12px;background:#cfcfcf"></div>
<div class="a" style="left:638px;top:2.5px;width:1px;height:12px;background:#cfcfcf"></div>
<div class="a" style="left:705px;top:2.5px;width:1px;height:12px;background:#cfcfcf"></div>
<div class="a" style="left:753px;top:2.5px;width:1px;height:12px;background:#cfcfcf"></div>
<div class="a" style="left:801px;top:2.5px;width:1px;height:12px;background:#cfcfcf"></div>
<div class="a" style="left:847px;top:2.5px;width:1px;height:12px;background:#cfcfcf"></div>
<div class="a" style="left:893px;top:2.5px;width:1px;height:12px;background:#cfcfcf"></div>
<div class="a" style="left:937.5px;top:2.5px;width:1px;height:12px;background:#cfcfcf"></div>
<svg style="left:941px;top:4px" width="16" height="10"><rect width="16" height="9.5" fill="#3f7ea0"/><path d="M0 0h16L0 6.3z" fill="#86a640"/><path d="M0 6.3L16 0" stroke="#e8eef0" stroke-width=".8"/></svg>
</div>
<div class="a" id="task"><svg style="left:10.5px;top:9px" width="11" height="11" viewBox="0 0 11 11" ><path d="M0 1.600l4.600-.7v4.300h-4.600zM5.300 .8l5.500-.8v5.200h-5.500zM0 5.900h4.600v4.300l-4.600-.7zM5.300 5.900h5.500v5.100l-5.500-.8z" fill="#fff"/></svg><svg style="left:42px;top:8px" width="12" height="12" viewBox="0 0 12 12" ><circle cx="7" cy="4.600" r="3.600" fill="none" stroke="#fff" stroke-width="1.100"/><path d="M4.400 7.200l-3.800 4" stroke="#fff" stroke-width="1.200"/></svg><svg style="left:73px;top:8.5px" width="15" height="11" viewBox="0 0 15 11" ><rect x="3" y=".8" width="8.600" height="8.800" rx="1" fill="none" stroke="#fff" stroke-width="1.100"/><path d="M1.800 2.400h-1.200v5.600h1.200M12.800 2.400h1.200v5.600h-1.200" fill="none" stroke="#fff" stroke-width=".9"/></svg><svg style="left:106px;top:6.5px" width="16" height="14" viewBox="0 0 16 14" ><path d="M.6 1.200h5l1.200 1.400h8.200v10.400h-14.400z" fill="#f9d466"/><path d="M.6 3.600h14.400v9.400h-14.400z" fill="#fbe08a"/><path d="M3.800 8h8v5h-8z" fill="#3aa0e8"/><path d="M5.800 10.400h4v2.600h-4z" fill="#fbe08a"/></svg><svg style="left:139px;top:5.5px" width="16" height="17" viewBox="0 0 16 17" ><defs><linearGradient id="ffg" x1="1" y1="0" x2="0" y2="1"><stop offset="0" stop-color="#ffe03a"/><stop offset=".45" stop-color="#ff9a1e"/><stop offset="1" stop-color="#ff3a4a"/></linearGradient><linearGradient id="ffp" x1="0" y1="0" x2="1" y2="1"><stop offset="0" stop-color="#9a4cf5"/><stop offset="1" stop-color="#4a3ad0"/></linearGradient></defs><path d="M10 .6c.4 1.400 1.400 2.200 2.600 2.800c1.600 1.200 2.600 3.200 2.600 5.400c0 4-3.200 7.200-7.200 7.200s-7.200-3.200-7.200-7.200c0-1.600.4-3 1.200-4c0 .8.200 1.400.6 1.800c.2-1.800 1.200-3.200 2.400-3.800c-.2.800 0 1.400.2 1.800c1-.4 2.400-.4 3.400 0c.4-1.400 1-3 1.400-4z" fill="url(#ffg)"/><circle cx="8.200" cy="9" r="3.900" fill="url(#ffp)"/><path d="M3.400 8.200c.8-1.400 2.600-2 4.400-1.600c-.8.600-1 1.400-.8 2.200c.8.200 1.800 0 2.400-.4c.2 1.800-1.200 3.400-3 3.400c-1.800 0-3.200-1.600-3-3.600z" fill="#ff8a24"/></svg><div class="a" style="left:164.2px;top:0;width:33px;height:25px;background:#46525c"></div><div class="a" style="left:172px;top:5.400px;width:16.400px;height:16.200px;background:#fff"></div><svg style="left:173.2px;top:10.8px" width="14" height="6" viewBox="0 0 14 6" ><path d="M.4 5.600L2.400 .6L4.400 5.600" fill="none" stroke="#2b3ad8" stroke-width="1.200" stroke-linejoin="round"/><path d="M4.900 .6L6.900 5.600L8.900 .6M9.400 5.600L11.400 .6L13.400 5.600" fill="none" stroke="#15151f" stroke-width="1.200" stroke-linejoin="round"/></svg><svg style="left:205px;top:6px" width="17" height="15" viewBox="0 0 17 15" ><path d="M.8 8.600l6.400-7.600l9 4.400l-6 8.400z" fill="#e7c13a" stroke="#9c7a12" stroke-width=".7"/><path d="M.8 8.600l.6 2l8.200 4.400l.6-1.200" fill="#fff4c8" stroke="#9c7a12" stroke-width=".6"/><circle cx="8.600" cy="6.800" r="3.400" fill="#3d9a4a"/><path d="M7 6.200c.6-1.200 2.600-1.200 3 0c.4 1.200-1.400 1.400-1.400 2.600" stroke="#2a5fb8" stroke-width="1.100" fill="none"/></svg><div class="a" style="left:101px;top:25px;width:26.5px;height:2px;background:#76b9ed"></div><div class="a" style="left:133.8px;top:25px;width:27.2px;height:2px;background:#76b9ed"></div><div class="a" style="left:164.2px;top:25px;width:33px;height:2px;background:#76b9ed"></div><div class="a" style="left:200px;top:25px;width:27.5px;height:2px;background:#76b9ed"></div><svg style="left:871px;top:11px" width="10" height="6" viewBox="0 0 10 6" ><path d="M.8 5l4-4l4 4" fill="none" stroke="#fff" stroke-width="1"/></svg><svg style="left:884.5px;top:8.5px" width="12" height="11" viewBox="0 0 12 11" ><path d="M1 3.400h1.800l2.200-2.200v8l-2.200-2.200h-1.800z" fill="none" stroke="#fff" stroke-width=".8"/><circle cx="8.600" cy="8" r="2.600" fill="#e81123"/><path d="M7.600 7l2 2m0-2l-2 2" stroke="#fff" stroke-width=".7"/></svg><svg style="left:902.5px;top:8.5px" width="12" height="10" viewBox="0 0 12 10" ><rect x="2.400" y="1.200" width="8" height="5.600" fill="none" stroke="#8b979e" stroke-width=".9"/><path d="M5 8.800h3.400M6.600 6.800v2" stroke="#8b979e" stroke-width=".9"/><rect x=".6" y=".6" width="3.200" height="2.600" fill="#aab4ba"/></svg><div class="t" style="left:921.8px;top:9.500px;font-size:7.800px;color:#fff;letter-spacing:-.25px">ITA</div><div class="t" style="left:934px;top:3.200px;width:60px;text-align:center;font-size:8px;color:#fff;letter-spacing:-.1px">22:16</div><div class="t" style="left:934px;top:15.200px;width:60px;text-align:center;font-size:8px;color:#fff;letter-spacing:-.05px">22/07/2025</div><svg style="left:996px;top:7.5px" width="13" height="13" viewBox="0 0 13 13" ><path d="M1 1h10.600v8h-3.600l-1.800 2l-1.800-2h-3.400z" fill="none" stroke="#fff" stroke-width="1"/></svg></div>
</body></html>
